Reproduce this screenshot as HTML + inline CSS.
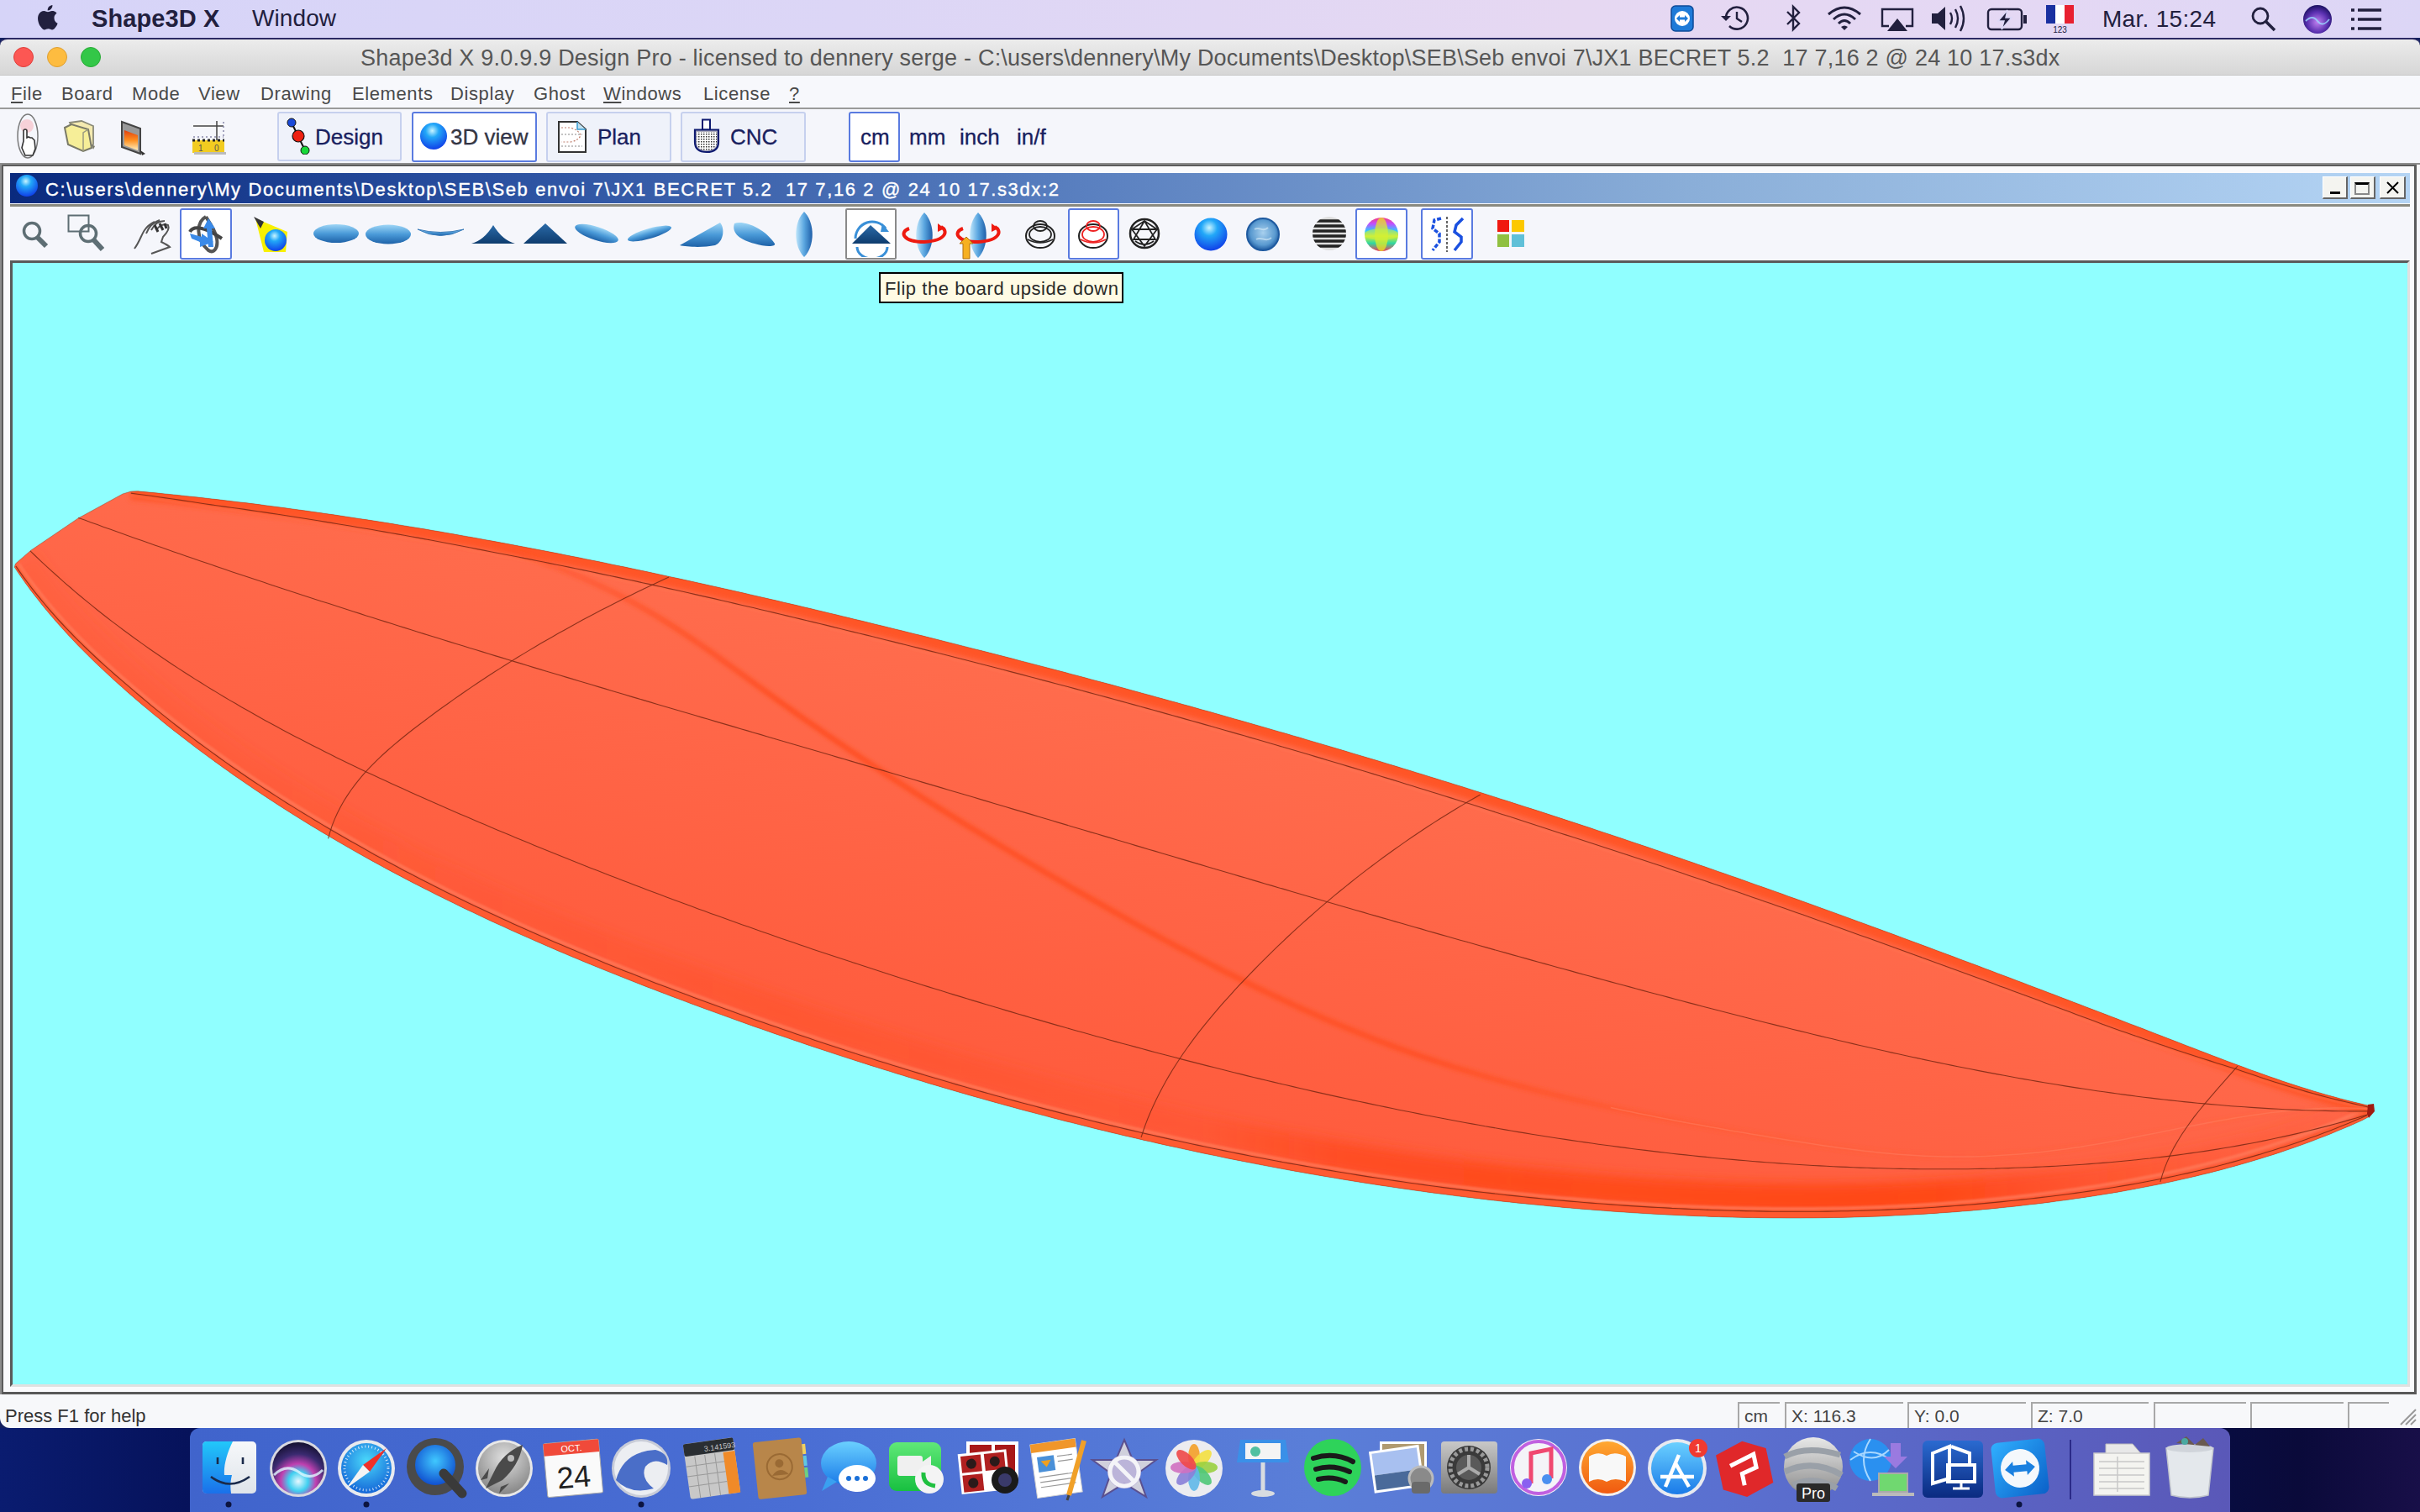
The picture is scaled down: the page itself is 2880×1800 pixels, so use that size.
<!DOCTYPE html>
<html><head><meta charset="utf-8">
<style>
*{margin:0;padding:0;box-sizing:border-box}
html,body{width:2880px;height:1800px;overflow:hidden;background:#132060;font-family:"Liberation Sans",sans-serif}
.a{position:absolute}
#macbar{left:0;top:0;width:2880px;height:45px;background:linear-gradient(90deg,#d6d4f8 0%,#dcd6f6 35%,#e6d8f2 65%,#e4d8f4 85%,#dcd6f6 100%);}
#winbar{left:0;top:45px;width:2880px;height:44px;background:linear-gradient(#ececec,#d6d6d6);border-top:2px solid #2c2a64;border-radius:9px 9px 0 0}
#appmenu{left:0;top:89px;width:2880px;height:41px;background:#f7f8fc;border-top:1px solid #c8c8c8;border-bottom:2px solid #9a9a9a}
#tb1{left:0;top:130px;width:2880px;height:66px;background:#f5f6fb}
#mdi{left:0;top:194px;width:2880px;height:1466px;background:#f8f8fb;border-left:2px solid #8c8c8c;border-top:2px solid #8c8c8c}
#mdiinner{left:2px;top:196px;width:2874px;height:1464px;border-left:2px solid #5c5c5c;border-top:2px solid #5c5c5c;border-right:3px solid #5c5c5c;border-bottom:3px solid #585858;background:#fafafc}
#mdititle{left:12px;top:206px;width:2856px;height:36px;background:linear-gradient(90deg,#0a2a7e 0%,#2a50a0 20%,#5a80c0 45%,#8aaed8 70%,#b4d4f4 100%)}
#mdiline{left:12px;top:243px;width:2856px;height:3px;background:#8a8a80}
#tb2{left:12px;top:246px;width:2856px;height:64px;background:#f5f6fb}
#canvas{left:12px;top:310px;width:2856px;height:1341px;border:3px solid #5a5a5a;border-right-color:#e0e0e0;border-bottom-color:#e0e0e0;background:#90ffff}
#status{left:0;top:1660px;width:2880px;height:40px;background:#f7f8fa;border-radius:0 0 0 12px}
#desk{left:0;top:1700px;width:2880px;height:100px;background:linear-gradient(90deg,#0a1c70 0%,#06125a 8%,#0a1a5a 40%,#080c40 92%,#0a0a3a 95%,#180f48 100%)}
#dock{left:226px;top:1700px;width:2428px;height:100px;background:linear-gradient(90deg,#4064cc,#4a6ed4 30%,#5a7ed8 55%,#5a70d0 75%,#5a58b8);border-radius:12px 12px 0 0}
.mt{font-size:27px;color:#262050;top:6px}
.menu{font-size:22px;color:#4a4a4a;top:98px;letter-spacing:0.6px}
.btn{border:2px solid #c6d0ee;background:#eff2fa;border-radius:3px}
.btnsel{border:2px solid #5a7be0;background:#ffffff;border-radius:3px}
.tt{font-size:27px;color:#18205e;-webkit-text-stroke:0.3px #18205e}
.sp{top:1669px;height:31px;border:2px solid #c8c8c8;border-bottom:none;border-right:none;font-size:21px;color:#333;padding:5px 0 0 8px}
</style></head><body>
<div id="desk" class="a"></div>
<div id="dock" class="a"></div>
<div id="macbar" class="a"></div>
<div id="winbar" class="a"></div>
<div id="appmenu" class="a"></div>
<div id="tb1" class="a"></div>
<div id="mdi" class="a"></div>
<div id="mdiinner" class="a"></div>
<div id="mdititle" class="a"></div>
<div id="mdiline" class="a"></div>
<div id="tb2" class="a"></div>
<div id="canvas" class="a"></div>
<svg width="2850" height="1335" viewBox="15 313 2850 1335" style="position:absolute;left:15px;top:313px">
<defs><clipPath id="bc"><path d="M156.0,585.0 L164.1,584.8 L172.1,585.6 L180.1,586.3 L188.1,587.1 L196.1,587.9 L204.1,588.7 L212.1,589.5 L220.1,590.4 L228.1,591.2 L236.1,592.1 L244.1,593.0 L252.1,593.9 L260.1,594.8 L268.1,595.8 L276.1,596.7 L284.1,597.7 L292.0,598.6 L300.0,599.6 L308.0,600.6 L316.0,601.7 L324.0,602.7 L331.9,603.7 L339.9,604.8 L347.9,605.9 L355.8,607.0 L363.8,608.1 L371.8,609.2 L379.7,610.3 L387.7,611.5 L395.6,612.6 L403.6,613.8 L411.5,615.0 L419.5,616.2 L427.4,617.4 L435.4,618.6 L443.3,619.8 L451.3,621.1 L459.2,622.3 L467.1,623.6 L475.1,624.9 L483.0,626.2 L490.9,627.5 L498.9,628.8 L506.8,630.1 L514.7,631.5 L522.7,632.8 L530.6,634.2 L538.5,635.6 L546.4,637.0 L554.3,638.4 L562.2,639.8 L570.2,641.2 L578.1,642.7 L586.0,644.1 L593.9,645.6 L601.8,647.0 L609.7,648.5 L617.6,650.0 L625.5,651.5 L633.4,653.0 L641.3,654.5 L649.2,656.0 L657.1,657.6 L665.0,659.1 L672.9,660.7 L680.8,662.3 L688.7,663.8 L696.5,665.4 L704.4,667.0 L712.3,668.6 L720.2,670.2 L728.1,671.9 L735.9,673.5 L743.8,675.1 L751.7,676.8 L759.6,678.4 L767.4,680.1 L775.3,681.8 L783.2,683.5 L791.0,685.2 L798.9,686.9 L806.8,688.6 L814.6,690.3 L822.5,692.0 L830.3,693.8 L838.2,695.5 L846.0,697.3 L853.9,699.0 L861.7,700.8 L869.6,702.5 L877.4,704.3 L885.3,706.1 L893.1,707.9 L901.0,709.7 L908.8,711.5 L916.6,713.3 L924.5,715.1 L932.3,717.0 L940.2,718.8 L948.0,720.6 L955.8,722.5 L963.7,724.3 L971.5,726.2 L979.3,728.1 L987.1,729.9 L995.0,731.8 L1002.8,733.7 L1010.6,735.6 L1018.4,737.5 L1026.2,739.3 L1034.1,741.3 L1041.9,743.2 L1049.7,745.1 L1057.5,747.0 L1065.3,748.9 L1073.1,750.8 L1080.9,752.8 L1088.7,754.7 L1096.6,756.6 L1104.4,758.6 L1112.2,760.5 L1120.0,762.5 L1127.8,764.5 L1135.6,766.4 L1143.4,768.4 L1151.2,770.4 L1159.0,772.4 L1166.7,774.3 L1174.5,776.3 L1182.3,778.3 L1190.1,780.3 L1197.9,782.3 L1205.7,784.3 L1213.5,786.4 L1221.3,788.4 L1229.0,790.4 L1236.8,792.4 L1244.6,794.5 L1252.4,796.5 L1260.2,798.6 L1267.9,800.6 L1275.7,802.7 L1283.5,804.7 L1291.2,806.8 L1299.0,808.9 L1306.8,811.0 L1314.5,813.0 L1322.3,815.1 L1330.1,817.2 L1337.8,819.3 L1345.6,821.4 L1353.3,823.6 L1361.1,825.7 L1368.9,827.8 L1376.6,829.9 L1384.4,832.1 L1392.1,834.2 L1399.9,836.3 L1407.6,838.5 L1415.4,840.6 L1423.1,842.8 L1430.8,845.0 L1438.6,847.1 L1446.3,849.3 L1454.1,851.5 L1461.8,853.7 L1469.5,855.9 L1477.3,858.1 L1485.0,860.3 L1492.7,862.5 L1500.5,864.7 L1508.2,866.9 L1515.9,869.2 L1523.6,871.4 L1531.3,873.6 L1539.1,875.9 L1546.8,878.1 L1554.5,880.4 L1562.2,882.7 L1569.9,884.9 L1577.6,887.2 L1585.4,889.5 L1593.1,891.8 L1600.8,894.1 L1608.5,896.4 L1616.2,898.7 L1623.9,901.0 L1631.6,903.3 L1639.3,905.6 L1647.0,907.9 L1654.7,910.3 L1662.4,912.6 L1670.1,915.0 L1677.8,917.3 L1685.4,919.7 L1693.1,922.0 L1700.8,924.4 L1708.5,926.8 L1716.2,929.2 L1723.9,931.5 L1731.5,933.9 L1739.2,936.3 L1746.9,938.7 L1754.6,941.2 L1762.2,943.6 L1769.9,946.0 L1777.6,948.4 L1785.2,950.9 L1792.9,953.3 L1800.6,955.8 L1808.2,958.2 L1815.9,960.7 L1823.5,963.1 L1831.2,965.6 L1838.9,968.1 L1846.5,970.6 L1854.2,973.1 L1861.8,975.6 L1869.4,978.1 L1877.1,980.6 L1884.7,983.1 L1892.4,985.6 L1900.0,988.2 L1907.6,990.7 L1915.3,993.2 L1922.9,995.8 L1930.5,998.3 L1938.2,1000.9 L1945.8,1003.5 L1953.4,1006.0 L1961.0,1008.6 L1968.6,1011.2 L1976.3,1013.8 L1983.9,1016.4 L1991.5,1019.0 L1999.1,1021.6 L2006.7,1024.2 L2014.3,1026.8 L2021.9,1029.5 L2029.5,1032.1 L2037.1,1034.7 L2044.7,1037.4 L2052.3,1040.0 L2059.9,1042.7 L2067.5,1045.3 L2075.1,1048.0 L2082.6,1050.7 L2090.2,1053.4 L2097.8,1056.1 L2105.4,1058.7 L2113.0,1061.4 L2120.5,1064.1 L2128.1,1066.9 L2135.7,1069.6 L2143.3,1072.3 L2150.8,1075.0 L2158.4,1077.7 L2166.0,1080.5 L2173.5,1083.2 L2181.1,1085.9 L2188.7,1088.7 L2196.2,1091.4 L2203.8,1094.2 L2211.3,1097.0 L2218.9,1099.7 L2226.4,1102.5 L2234.0,1105.3 L2241.5,1108.0 L2249.1,1110.8 L2256.6,1113.6 L2264.2,1116.4 L2271.7,1119.2 L2279.3,1122.0 L2286.8,1124.8 L2294.3,1127.6 L2301.9,1130.4 L2309.4,1133.2 L2316.9,1136.0 L2324.5,1138.8 L2332.0,1141.7 L2339.5,1144.5 L2347.1,1147.3 L2354.6,1150.1 L2362.1,1153.0 L2369.7,1155.8 L2377.2,1158.7 L2384.7,1161.5 L2392.2,1164.3 L2399.8,1167.2 L2407.3,1170.0 L2414.8,1172.9 L2422.3,1175.8 L2429.8,1178.6 L2437.4,1181.5 L2444.9,1184.3 L2452.4,1187.2 L2459.9,1190.1 L2467.4,1192.9 L2474.9,1195.8 L2482.4,1198.7 L2489.9,1201.6 L2497.5,1204.4 L2505.0,1207.3 L2512.5,1210.2 L2520.0,1213.1 L2527.5,1216.0 L2535.0,1218.9 L2542.5,1221.7 L2550.0,1224.6 L2557.5,1227.5 L2565.0,1230.4 L2572.5,1233.3 L2580.0,1236.2 L2587.5,1239.1 L2595.0,1242.0 L2602.5,1244.9 L2610.1,1247.8 L2617.6,1250.7 L2625.1,1253.6 L2632.6,1256.5 L2640.1,1259.3 L2647.6,1262.2 L2655.1,1265.0 L2662.6,1267.8 L2670.2,1270.6 L2677.7,1273.4 L2685.3,1276.1 L2692.8,1278.8 L2700.4,1281.5 L2708.0,1284.1 L2715.5,1286.7 L2723.1,1289.3 L2730.8,1291.8 L2738.4,1294.2 L2746.0,1296.6 L2753.7,1299.0 L2761.4,1301.2 L2769.1,1303.5 L2776.8,1305.6 L2784.5,1307.7 L2792.2,1309.7 L2800.0,1311.7 L2807.8,1313.6 L2815.6,1315.4 L2823.5,1317.1 L2825.0,1323.0 L2818.0,1330.0 L2811.0,1333.8 L2803.6,1337.1 L2796.1,1340.4 L2788.7,1343.5 L2781.2,1346.6 L2773.8,1349.7 L2766.3,1352.7 L2758.7,1355.6 L2751.2,1358.5 L2743.7,1361.3 L2736.1,1364.0 L2728.5,1366.7 L2720.9,1369.3 L2713.3,1371.9 L2705.7,1374.4 L2698.0,1376.8 L2690.3,1379.2 L2682.7,1381.5 L2675.0,1383.8 L2667.3,1386.0 L2659.6,1388.2 L2651.8,1390.3 L2644.1,1392.4 L2636.3,1394.4 L2628.6,1396.4 L2620.8,1398.3 L2613.0,1400.2 L2605.2,1402.1 L2597.4,1403.8 L2589.5,1405.6 L2581.7,1407.3 L2573.8,1408.9 L2566.0,1410.5 L2558.1,1412.1 L2550.3,1413.6 L2542.4,1415.1 L2534.5,1416.6 L2526.6,1418.0 L2518.7,1419.4 L2510.8,1420.7 L2502.8,1422.0 L2494.9,1423.3 L2487.0,1424.5 L2479.0,1425.7 L2471.1,1426.8 L2463.1,1428.0 L2455.2,1429.1 L2447.2,1430.1 L2439.2,1431.2 L2431.3,1432.2 L2423.3,1433.2 L2415.3,1434.1 L2407.3,1435.0 L2399.4,1435.9 L2391.4,1436.8 L2383.4,1437.6 L2375.4,1438.4 L2367.4,1439.2 L2359.4,1439.9 L2351.3,1440.7 L2343.3,1441.4 L2335.3,1442.0 L2327.3,1442.7 L2319.3,1443.3 L2311.3,1443.8 L2303.2,1444.4 L2295.2,1444.9 L2287.2,1445.4 L2279.1,1445.9 L2271.1,1446.3 L2263.1,1446.8 L2255.0,1447.1 L2247.0,1447.5 L2238.9,1447.9 L2230.9,1448.2 L2222.8,1448.5 L2214.8,1448.7 L2206.7,1449.0 L2198.7,1449.2 L2190.6,1449.4 L2182.6,1449.5 L2174.5,1449.7 L2166.4,1449.8 L2158.4,1449.9 L2150.3,1449.9 L2142.3,1450.0 L2134.2,1450.0 L2126.1,1450.0 L2118.1,1449.9 L2110.0,1449.9 L2101.9,1449.8 L2093.9,1449.7 L2085.8,1449.6 L2077.8,1449.4 L2069.7,1449.3 L2061.6,1449.1 L2053.6,1448.9 L2045.5,1448.6 L2037.4,1448.4 L2029.4,1448.1 L2021.3,1447.8 L2013.3,1447.4 L2005.2,1447.1 L1997.2,1446.7 L1989.1,1446.3 L1981.0,1445.9 L1973.0,1445.5 L1964.9,1445.1 L1956.9,1444.6 L1948.8,1444.1 L1940.8,1443.6 L1932.8,1443.0 L1924.7,1442.5 L1916.7,1441.9 L1908.6,1441.3 L1900.6,1440.7 L1892.6,1440.1 L1884.5,1439.4 L1876.5,1438.8 L1868.5,1438.1 L1860.5,1437.4 L1852.4,1436.6 L1844.4,1435.9 L1836.4,1435.1 L1828.4,1434.3 L1820.4,1433.5 L1812.4,1432.7 L1804.4,1431.9 L1796.4,1431.0 L1788.4,1430.2 L1780.4,1429.3 L1772.4,1428.4 L1764.4,1427.4 L1756.5,1426.5 L1748.5,1425.5 L1740.5,1424.6 L1732.5,1423.6 L1724.6,1422.5 L1716.6,1421.5 L1708.6,1420.5 L1700.7,1419.4 L1692.7,1418.3 L1684.8,1417.2 L1676.8,1416.1 L1668.9,1414.9 L1660.9,1413.8 L1653.0,1412.6 L1645.0,1411.4 L1637.1,1410.2 L1629.2,1409.0 L1621.2,1407.8 L1613.3,1406.5 L1605.4,1405.2 L1597.5,1403.9 L1589.6,1402.6 L1581.7,1401.3 L1573.8,1399.9 L1565.8,1398.6 L1557.9,1397.2 L1550.0,1395.8 L1542.2,1394.4 L1534.3,1393.0 L1526.4,1391.5 L1518.5,1390.1 L1510.6,1388.6 L1502.7,1387.1 L1494.9,1385.6 L1487.0,1384.0 L1479.1,1382.5 L1471.2,1380.9 L1463.4,1379.4 L1455.5,1377.8 L1447.7,1376.1 L1439.8,1374.5 L1432.0,1372.9 L1424.1,1371.2 L1416.3,1369.5 L1408.4,1367.8 L1400.6,1366.1 L1392.8,1364.4 L1384.9,1362.7 L1377.1,1360.9 L1369.3,1359.1 L1361.5,1357.4 L1353.7,1355.5 L1345.9,1353.7 L1338.0,1351.9 L1330.2,1350.0 L1322.4,1348.2 L1314.6,1346.3 L1306.8,1344.4 L1299.1,1342.5 L1291.3,1340.5 L1283.5,1338.6 L1275.7,1336.6 L1267.9,1334.7 L1260.2,1332.7 L1252.4,1330.7 L1244.6,1328.6 L1236.9,1326.6 L1229.1,1324.5 L1221.3,1322.5 L1213.6,1320.4 L1205.8,1318.3 L1198.1,1316.2 L1190.3,1314.1 L1182.6,1311.9 L1174.9,1309.8 L1167.1,1307.6 L1159.4,1305.4 L1151.7,1303.2 L1144.0,1301.0 L1136.2,1298.7 L1128.5,1296.5 L1120.8,1294.2 L1113.1,1291.9 L1105.4,1289.7 L1097.7,1287.3 L1090.0,1285.0 L1082.3,1282.7 L1074.6,1280.3 L1066.9,1278.0 L1059.3,1275.6 L1051.6,1273.2 L1043.9,1270.8 L1036.2,1268.4 L1028.6,1265.9 L1020.9,1263.5 L1013.2,1261.0 L1005.6,1258.6 L997.9,1256.1 L990.3,1253.6 L982.6,1251.0 L975.0,1248.5 L967.3,1246.0 L959.7,1243.4 L952.1,1240.8 L944.4,1238.2 L936.8,1235.6 L929.2,1233.0 L921.6,1230.4 L914.0,1227.7 L906.4,1225.1 L898.7,1222.4 L891.1,1219.7 L883.5,1217.0 L875.9,1214.3 L868.4,1211.6 L860.8,1208.8 L853.2,1206.1 L845.6,1203.3 L838.0,1200.6 L830.5,1197.8 L822.9,1195.0 L815.3,1192.1 L807.8,1189.3 L800.2,1186.5 L792.7,1183.6 L785.1,1180.7 L777.6,1177.8 L770.0,1174.9 L762.5,1172.0 L755.0,1169.0 L747.5,1166.1 L740.0,1163.1 L732.5,1160.1 L725.0,1157.1 L717.5,1154.1 L710.0,1151.0 L702.6,1148.0 L695.1,1144.9 L687.6,1141.8 L680.2,1138.7 L672.8,1135.6 L665.3,1132.4 L657.9,1129.2 L650.5,1126.0 L643.1,1122.8 L635.7,1119.6 L628.4,1116.3 L621.0,1113.1 L613.6,1109.8 L606.3,1106.5 L599.0,1103.1 L591.6,1099.8 L584.3,1096.4 L577.0,1093.0 L569.8,1089.6 L562.5,1086.1 L555.2,1082.7 L548.0,1079.2 L540.7,1075.6 L533.5,1072.1 L526.3,1068.5 L519.1,1065.0 L511.9,1061.3 L504.8,1057.7 L497.6,1054.1 L490.5,1050.4 L483.4,1046.7 L476.3,1042.9 L469.2,1039.2 L462.1,1035.4 L455.0,1031.6 L448.0,1027.7 L441.0,1023.9 L434.0,1020.0 L427.0,1016.1 L420.0,1012.1 L413.0,1008.1 L406.1,1004.1 L399.2,1000.1 L392.3,996.0 L385.4,991.9 L378.5,987.8 L371.7,983.7 L364.8,979.5 L358.0,975.3 L351.2,971.1 L344.4,966.8 L337.7,962.5 L331.0,958.2 L324.2,953.8 L317.6,949.4 L310.9,945.0 L304.2,940.6 L297.6,936.1 L291.0,931.6 L284.4,927.0 L277.8,922.5 L271.3,917.8 L264.8,913.2 L258.3,908.5 L251.8,903.8 L245.4,899.1 L238.9,894.3 L232.5,889.5 L226.1,884.6 L219.8,879.7 L213.4,874.8 L207.1,869.9 L200.8,864.9 L194.6,859.9 L188.4,854.8 L182.1,849.7 L176.0,844.6 L169.8,839.4 L163.7,834.2 L157.6,828.9 L151.5,823.7 L145.5,818.3 L139.5,813.0 L133.5,807.6 L127.6,802.1 L121.7,796.6 L115.8,791.1 L110.1,785.5 L104.3,779.8 L98.6,774.1 L93.0,768.4 L87.4,762.6 L81.9,756.7 L76.5,750.8 L71.1,744.8 L65.8,738.8 L60.6,732.7 L55.4,726.6 L50.4,720.4 L45.4,714.1 L40.4,707.8 L35.6,701.4 L30.9,694.9 L26.2,688.3 L21.6,681.7 L17.2,675.1 L18.5,671.0 L37.0,655.0 L93.0,617.0 L146.0,588.0 Z"/></clipPath>
<linearGradient id="bg1" gradientUnits="userSpaceOnUse" x1="1300" y1="700" x2="1150" y2="1300"><stop offset="0" stop-color="#ff7050"/><stop offset="0.5" stop-color="#ff6547"/><stop offset="1" stop-color="#ff5b3c"/></linearGradient>
<filter id="bl12" x="-10%" y="-10%" width="120%" height="120%"><feGaussianBlur stdDeviation="12"/></filter>
<filter id="bl4" x="-10%" y="-10%" width="120%" height="120%"><feGaussianBlur stdDeviation="4"/></filter>
<filter id="bl2" x="-10%" y="-10%" width="120%" height="120%"><feGaussianBlur stdDeviation="2"/></filter><filter id="bl8" x="-10%" y="-10%" width="120%" height="120%"><feGaussianBlur stdDeviation="7"/></filter><filter id="bl3" x="-10%" y="-10%" width="120%" height="120%"><feGaussianBlur stdDeviation="3"/></filter><filter id="bl15" x="-10%" y="-10%" width="120%" height="120%"><feGaussianBlur stdDeviation="1.3"/></filter>
<linearGradient id="gbot" gradientUnits="userSpaceOnUse" x1="300" y1="0" x2="2800" y2="0"><stop offset="0" stop-color="#ff5028" stop-opacity="0.2"/><stop offset="0.25" stop-color="#ff5028" stop-opacity="0.45"/><stop offset="0.45" stop-color="#ff5028" stop-opacity="0.35"/><stop offset="0.52" stop-color="#ff4a1c" stop-opacity="0.85"/><stop offset="0.8" stop-color="#ff4818" stop-opacity="1"/><stop offset="0.92" stop-color="#ff5028" stop-opacity="0.4"/><stop offset="1" stop-color="#ff5028" stop-opacity="0.1"/></linearGradient>
<linearGradient id="gghost" gradientUnits="userSpaceOnUse" x1="600" y1="0" x2="2800" y2="0"><stop offset="0" stop-color="#ff4e20" stop-opacity="0.3"/><stop offset="0.15" stop-color="#ff4e20" stop-opacity="0.85"/><stop offset="0.5" stop-color="#ff4e20" stop-opacity="0.8"/><stop offset="0.7" stop-color="#ff5a30" stop-opacity="0.3"/><stop offset="1" stop-color="#ff5a30" stop-opacity="0"/></linearGradient>
</defs>
<path d="M156.0,585.0 L164.1,584.8 L172.1,585.6 L180.1,586.3 L188.1,587.1 L196.1,587.9 L204.1,588.7 L212.1,589.5 L220.1,590.4 L228.1,591.2 L236.1,592.1 L244.1,593.0 L252.1,593.9 L260.1,594.8 L268.1,595.8 L276.1,596.7 L284.1,597.7 L292.0,598.6 L300.0,599.6 L308.0,600.6 L316.0,601.7 L324.0,602.7 L331.9,603.7 L339.9,604.8 L347.9,605.9 L355.8,607.0 L363.8,608.1 L371.8,609.2 L379.7,610.3 L387.7,611.5 L395.6,612.6 L403.6,613.8 L411.5,615.0 L419.5,616.2 L427.4,617.4 L435.4,618.6 L443.3,619.8 L451.3,621.1 L459.2,622.3 L467.1,623.6 L475.1,624.9 L483.0,626.2 L490.9,627.5 L498.9,628.8 L506.8,630.1 L514.7,631.5 L522.7,632.8 L530.6,634.2 L538.5,635.6 L546.4,637.0 L554.3,638.4 L562.2,639.8 L570.2,641.2 L578.1,642.7 L586.0,644.1 L593.9,645.6 L601.8,647.0 L609.7,648.5 L617.6,650.0 L625.5,651.5 L633.4,653.0 L641.3,654.5 L649.2,656.0 L657.1,657.6 L665.0,659.1 L672.9,660.7 L680.8,662.3 L688.7,663.8 L696.5,665.4 L704.4,667.0 L712.3,668.6 L720.2,670.2 L728.1,671.9 L735.9,673.5 L743.8,675.1 L751.7,676.8 L759.6,678.4 L767.4,680.1 L775.3,681.8 L783.2,683.5 L791.0,685.2 L798.9,686.9 L806.8,688.6 L814.6,690.3 L822.5,692.0 L830.3,693.8 L838.2,695.5 L846.0,697.3 L853.9,699.0 L861.7,700.8 L869.6,702.5 L877.4,704.3 L885.3,706.1 L893.1,707.9 L901.0,709.7 L908.8,711.5 L916.6,713.3 L924.5,715.1 L932.3,717.0 L940.2,718.8 L948.0,720.6 L955.8,722.5 L963.7,724.3 L971.5,726.2 L979.3,728.1 L987.1,729.9 L995.0,731.8 L1002.8,733.7 L1010.6,735.6 L1018.4,737.5 L1026.2,739.3 L1034.1,741.3 L1041.9,743.2 L1049.7,745.1 L1057.5,747.0 L1065.3,748.9 L1073.1,750.8 L1080.9,752.8 L1088.7,754.7 L1096.6,756.6 L1104.4,758.6 L1112.2,760.5 L1120.0,762.5 L1127.8,764.5 L1135.6,766.4 L1143.4,768.4 L1151.2,770.4 L1159.0,772.4 L1166.7,774.3 L1174.5,776.3 L1182.3,778.3 L1190.1,780.3 L1197.9,782.3 L1205.7,784.3 L1213.5,786.4 L1221.3,788.4 L1229.0,790.4 L1236.8,792.4 L1244.6,794.5 L1252.4,796.5 L1260.2,798.6 L1267.9,800.6 L1275.7,802.7 L1283.5,804.7 L1291.2,806.8 L1299.0,808.9 L1306.8,811.0 L1314.5,813.0 L1322.3,815.1 L1330.1,817.2 L1337.8,819.3 L1345.6,821.4 L1353.3,823.6 L1361.1,825.7 L1368.9,827.8 L1376.6,829.9 L1384.4,832.1 L1392.1,834.2 L1399.9,836.3 L1407.6,838.5 L1415.4,840.6 L1423.1,842.8 L1430.8,845.0 L1438.6,847.1 L1446.3,849.3 L1454.1,851.5 L1461.8,853.7 L1469.5,855.9 L1477.3,858.1 L1485.0,860.3 L1492.7,862.5 L1500.5,864.7 L1508.2,866.9 L1515.9,869.2 L1523.6,871.4 L1531.3,873.6 L1539.1,875.9 L1546.8,878.1 L1554.5,880.4 L1562.2,882.7 L1569.9,884.9 L1577.6,887.2 L1585.4,889.5 L1593.1,891.8 L1600.8,894.1 L1608.5,896.4 L1616.2,898.7 L1623.9,901.0 L1631.6,903.3 L1639.3,905.6 L1647.0,907.9 L1654.7,910.3 L1662.4,912.6 L1670.1,915.0 L1677.8,917.3 L1685.4,919.7 L1693.1,922.0 L1700.8,924.4 L1708.5,926.8 L1716.2,929.2 L1723.9,931.5 L1731.5,933.9 L1739.2,936.3 L1746.9,938.7 L1754.6,941.2 L1762.2,943.6 L1769.9,946.0 L1777.6,948.4 L1785.2,950.9 L1792.9,953.3 L1800.6,955.8 L1808.2,958.2 L1815.9,960.7 L1823.5,963.1 L1831.2,965.6 L1838.9,968.1 L1846.5,970.6 L1854.2,973.1 L1861.8,975.6 L1869.4,978.1 L1877.1,980.6 L1884.7,983.1 L1892.4,985.6 L1900.0,988.2 L1907.6,990.7 L1915.3,993.2 L1922.9,995.8 L1930.5,998.3 L1938.2,1000.9 L1945.8,1003.5 L1953.4,1006.0 L1961.0,1008.6 L1968.6,1011.2 L1976.3,1013.8 L1983.9,1016.4 L1991.5,1019.0 L1999.1,1021.6 L2006.7,1024.2 L2014.3,1026.8 L2021.9,1029.5 L2029.5,1032.1 L2037.1,1034.7 L2044.7,1037.4 L2052.3,1040.0 L2059.9,1042.7 L2067.5,1045.3 L2075.1,1048.0 L2082.6,1050.7 L2090.2,1053.4 L2097.8,1056.1 L2105.4,1058.7 L2113.0,1061.4 L2120.5,1064.1 L2128.1,1066.9 L2135.7,1069.6 L2143.3,1072.3 L2150.8,1075.0 L2158.4,1077.7 L2166.0,1080.5 L2173.5,1083.2 L2181.1,1085.9 L2188.7,1088.7 L2196.2,1091.4 L2203.8,1094.2 L2211.3,1097.0 L2218.9,1099.7 L2226.4,1102.5 L2234.0,1105.3 L2241.5,1108.0 L2249.1,1110.8 L2256.6,1113.6 L2264.2,1116.4 L2271.7,1119.2 L2279.3,1122.0 L2286.8,1124.8 L2294.3,1127.6 L2301.9,1130.4 L2309.4,1133.2 L2316.9,1136.0 L2324.5,1138.8 L2332.0,1141.7 L2339.5,1144.5 L2347.1,1147.3 L2354.6,1150.1 L2362.1,1153.0 L2369.7,1155.8 L2377.2,1158.7 L2384.7,1161.5 L2392.2,1164.3 L2399.8,1167.2 L2407.3,1170.0 L2414.8,1172.9 L2422.3,1175.8 L2429.8,1178.6 L2437.4,1181.5 L2444.9,1184.3 L2452.4,1187.2 L2459.9,1190.1 L2467.4,1192.9 L2474.9,1195.8 L2482.4,1198.7 L2489.9,1201.6 L2497.5,1204.4 L2505.0,1207.3 L2512.5,1210.2 L2520.0,1213.1 L2527.5,1216.0 L2535.0,1218.9 L2542.5,1221.7 L2550.0,1224.6 L2557.5,1227.5 L2565.0,1230.4 L2572.5,1233.3 L2580.0,1236.2 L2587.5,1239.1 L2595.0,1242.0 L2602.5,1244.9 L2610.1,1247.8 L2617.6,1250.7 L2625.1,1253.6 L2632.6,1256.5 L2640.1,1259.3 L2647.6,1262.2 L2655.1,1265.0 L2662.6,1267.8 L2670.2,1270.6 L2677.7,1273.4 L2685.3,1276.1 L2692.8,1278.8 L2700.4,1281.5 L2708.0,1284.1 L2715.5,1286.7 L2723.1,1289.3 L2730.8,1291.8 L2738.4,1294.2 L2746.0,1296.6 L2753.7,1299.0 L2761.4,1301.2 L2769.1,1303.5 L2776.8,1305.6 L2784.5,1307.7 L2792.2,1309.7 L2800.0,1311.7 L2807.8,1313.6 L2815.6,1315.4 L2823.5,1317.1 L2825.0,1323.0 L2818.0,1330.0 L2811.0,1333.8 L2803.6,1337.1 L2796.1,1340.4 L2788.7,1343.5 L2781.2,1346.6 L2773.8,1349.7 L2766.3,1352.7 L2758.7,1355.6 L2751.2,1358.5 L2743.7,1361.3 L2736.1,1364.0 L2728.5,1366.7 L2720.9,1369.3 L2713.3,1371.9 L2705.7,1374.4 L2698.0,1376.8 L2690.3,1379.2 L2682.7,1381.5 L2675.0,1383.8 L2667.3,1386.0 L2659.6,1388.2 L2651.8,1390.3 L2644.1,1392.4 L2636.3,1394.4 L2628.6,1396.4 L2620.8,1398.3 L2613.0,1400.2 L2605.2,1402.1 L2597.4,1403.8 L2589.5,1405.6 L2581.7,1407.3 L2573.8,1408.9 L2566.0,1410.5 L2558.1,1412.1 L2550.3,1413.6 L2542.4,1415.1 L2534.5,1416.6 L2526.6,1418.0 L2518.7,1419.4 L2510.8,1420.7 L2502.8,1422.0 L2494.9,1423.3 L2487.0,1424.5 L2479.0,1425.7 L2471.1,1426.8 L2463.1,1428.0 L2455.2,1429.1 L2447.2,1430.1 L2439.2,1431.2 L2431.3,1432.2 L2423.3,1433.2 L2415.3,1434.1 L2407.3,1435.0 L2399.4,1435.9 L2391.4,1436.8 L2383.4,1437.6 L2375.4,1438.4 L2367.4,1439.2 L2359.4,1439.9 L2351.3,1440.7 L2343.3,1441.4 L2335.3,1442.0 L2327.3,1442.7 L2319.3,1443.3 L2311.3,1443.8 L2303.2,1444.4 L2295.2,1444.9 L2287.2,1445.4 L2279.1,1445.9 L2271.1,1446.3 L2263.1,1446.8 L2255.0,1447.1 L2247.0,1447.5 L2238.9,1447.9 L2230.9,1448.2 L2222.8,1448.5 L2214.8,1448.7 L2206.7,1449.0 L2198.7,1449.2 L2190.6,1449.4 L2182.6,1449.5 L2174.5,1449.7 L2166.4,1449.8 L2158.4,1449.9 L2150.3,1449.9 L2142.3,1450.0 L2134.2,1450.0 L2126.1,1450.0 L2118.1,1449.9 L2110.0,1449.9 L2101.9,1449.8 L2093.9,1449.7 L2085.8,1449.6 L2077.8,1449.4 L2069.7,1449.3 L2061.6,1449.1 L2053.6,1448.9 L2045.5,1448.6 L2037.4,1448.4 L2029.4,1448.1 L2021.3,1447.8 L2013.3,1447.4 L2005.2,1447.1 L1997.2,1446.7 L1989.1,1446.3 L1981.0,1445.9 L1973.0,1445.5 L1964.9,1445.1 L1956.9,1444.6 L1948.8,1444.1 L1940.8,1443.6 L1932.8,1443.0 L1924.7,1442.5 L1916.7,1441.9 L1908.6,1441.3 L1900.6,1440.7 L1892.6,1440.1 L1884.5,1439.4 L1876.5,1438.8 L1868.5,1438.1 L1860.5,1437.4 L1852.4,1436.6 L1844.4,1435.9 L1836.4,1435.1 L1828.4,1434.3 L1820.4,1433.5 L1812.4,1432.7 L1804.4,1431.9 L1796.4,1431.0 L1788.4,1430.2 L1780.4,1429.3 L1772.4,1428.4 L1764.4,1427.4 L1756.5,1426.5 L1748.5,1425.5 L1740.5,1424.6 L1732.5,1423.6 L1724.6,1422.5 L1716.6,1421.5 L1708.6,1420.5 L1700.7,1419.4 L1692.7,1418.3 L1684.8,1417.2 L1676.8,1416.1 L1668.9,1414.9 L1660.9,1413.8 L1653.0,1412.6 L1645.0,1411.4 L1637.1,1410.2 L1629.2,1409.0 L1621.2,1407.8 L1613.3,1406.5 L1605.4,1405.2 L1597.5,1403.9 L1589.6,1402.6 L1581.7,1401.3 L1573.8,1399.9 L1565.8,1398.6 L1557.9,1397.2 L1550.0,1395.8 L1542.2,1394.4 L1534.3,1393.0 L1526.4,1391.5 L1518.5,1390.1 L1510.6,1388.6 L1502.7,1387.1 L1494.9,1385.6 L1487.0,1384.0 L1479.1,1382.5 L1471.2,1380.9 L1463.4,1379.4 L1455.5,1377.8 L1447.7,1376.1 L1439.8,1374.5 L1432.0,1372.9 L1424.1,1371.2 L1416.3,1369.5 L1408.4,1367.8 L1400.6,1366.1 L1392.8,1364.4 L1384.9,1362.7 L1377.1,1360.9 L1369.3,1359.1 L1361.5,1357.4 L1353.7,1355.5 L1345.9,1353.7 L1338.0,1351.9 L1330.2,1350.0 L1322.4,1348.2 L1314.6,1346.3 L1306.8,1344.4 L1299.1,1342.5 L1291.3,1340.5 L1283.5,1338.6 L1275.7,1336.6 L1267.9,1334.7 L1260.2,1332.7 L1252.4,1330.7 L1244.6,1328.6 L1236.9,1326.6 L1229.1,1324.5 L1221.3,1322.5 L1213.6,1320.4 L1205.8,1318.3 L1198.1,1316.2 L1190.3,1314.1 L1182.6,1311.9 L1174.9,1309.8 L1167.1,1307.6 L1159.4,1305.4 L1151.7,1303.2 L1144.0,1301.0 L1136.2,1298.7 L1128.5,1296.5 L1120.8,1294.2 L1113.1,1291.9 L1105.4,1289.7 L1097.7,1287.3 L1090.0,1285.0 L1082.3,1282.7 L1074.6,1280.3 L1066.9,1278.0 L1059.3,1275.6 L1051.6,1273.2 L1043.9,1270.8 L1036.2,1268.4 L1028.6,1265.9 L1020.9,1263.5 L1013.2,1261.0 L1005.6,1258.6 L997.9,1256.1 L990.3,1253.6 L982.6,1251.0 L975.0,1248.5 L967.3,1246.0 L959.7,1243.4 L952.1,1240.8 L944.4,1238.2 L936.8,1235.6 L929.2,1233.0 L921.6,1230.4 L914.0,1227.7 L906.4,1225.1 L898.7,1222.4 L891.1,1219.7 L883.5,1217.0 L875.9,1214.3 L868.4,1211.6 L860.8,1208.8 L853.2,1206.1 L845.6,1203.3 L838.0,1200.6 L830.5,1197.8 L822.9,1195.0 L815.3,1192.1 L807.8,1189.3 L800.2,1186.5 L792.7,1183.6 L785.1,1180.7 L777.6,1177.8 L770.0,1174.9 L762.5,1172.0 L755.0,1169.0 L747.5,1166.1 L740.0,1163.1 L732.5,1160.1 L725.0,1157.1 L717.5,1154.1 L710.0,1151.0 L702.6,1148.0 L695.1,1144.9 L687.6,1141.8 L680.2,1138.7 L672.8,1135.6 L665.3,1132.4 L657.9,1129.2 L650.5,1126.0 L643.1,1122.8 L635.7,1119.6 L628.4,1116.3 L621.0,1113.1 L613.6,1109.8 L606.3,1106.5 L599.0,1103.1 L591.6,1099.8 L584.3,1096.4 L577.0,1093.0 L569.8,1089.6 L562.5,1086.1 L555.2,1082.7 L548.0,1079.2 L540.7,1075.6 L533.5,1072.1 L526.3,1068.5 L519.1,1065.0 L511.9,1061.3 L504.8,1057.7 L497.6,1054.1 L490.5,1050.4 L483.4,1046.7 L476.3,1042.9 L469.2,1039.2 L462.1,1035.4 L455.0,1031.6 L448.0,1027.7 L441.0,1023.9 L434.0,1020.0 L427.0,1016.1 L420.0,1012.1 L413.0,1008.1 L406.1,1004.1 L399.2,1000.1 L392.3,996.0 L385.4,991.9 L378.5,987.8 L371.7,983.7 L364.8,979.5 L358.0,975.3 L351.2,971.1 L344.4,966.8 L337.7,962.5 L331.0,958.2 L324.2,953.8 L317.6,949.4 L310.9,945.0 L304.2,940.6 L297.6,936.1 L291.0,931.6 L284.4,927.0 L277.8,922.5 L271.3,917.8 L264.8,913.2 L258.3,908.5 L251.8,903.8 L245.4,899.1 L238.9,894.3 L232.5,889.5 L226.1,884.6 L219.8,879.7 L213.4,874.8 L207.1,869.9 L200.8,864.9 L194.6,859.9 L188.4,854.8 L182.1,849.7 L176.0,844.6 L169.8,839.4 L163.7,834.2 L157.6,828.9 L151.5,823.7 L145.5,818.3 L139.5,813.0 L133.5,807.6 L127.6,802.1 L121.7,796.6 L115.8,791.1 L110.1,785.5 L104.3,779.8 L98.6,774.1 L93.0,768.4 L87.4,762.6 L81.9,756.7 L76.5,750.8 L71.1,744.8 L65.8,738.8 L60.6,732.7 L55.4,726.6 L50.4,720.4 L45.4,714.1 L40.4,707.8 L35.6,701.4 L30.9,694.9 L26.2,688.3 L21.6,681.7 L17.2,675.1 L18.5,671.0 L37.0,655.0 L93.0,617.0 L146.0,588.0 Z" fill="url(#bg1)"/>
<g clip-path="url(#bc)">
<path d="M2814.2,1321.3 L2806.8,1324.5 L2799.4,1327.7 L2792.0,1330.7 L2784.5,1333.7 L2777.1,1336.6 L2769.6,1339.4 L2762.1,1342.2 L2754.6,1344.9 L2747.1,1347.6 L2739.6,1350.2 L2732.1,1352.7 L2724.5,1355.2 L2716.9,1357.6 L2709.3,1360.0 L2701.7,1362.3 L2694.1,1364.5 L2686.5,1366.7 L2678.9,1368.9 L2671.2,1370.9 L2663.5,1373.0 L2655.9,1374.9 L2648.2,1376.9 L2640.5,1378.7 L2632.7,1380.6 L2625.0,1382.3 L2617.3,1384.1 L2609.5,1385.7 L2601.8,1387.4 L2594.0,1388.9 L2586.2,1390.5 L2578.4,1392.0 L2570.6,1393.4 L2562.8,1394.8 L2555.0,1396.2 L2547.2,1397.5 L2539.3,1398.8 L2531.5,1400.1 L2523.6,1401.3 L2515.8,1402.4 L2507.9,1403.6 L2500.0,1404.7 L2492.2,1405.7 L2484.3,1406.8 L2476.4,1407.8 L2468.5,1408.7 L2460.6,1409.7 L2452.7,1410.6 L2444.7,1411.4 L2436.8,1412.3 L2428.9,1413.1 L2421.0,1413.9 L2413.0,1414.6 L2405.1,1415.3 L2397.2,1416.0 L2389.2,1416.8 L2381.3,1417.6 L2373.4,1418.3 L2365.4,1419.0 L2357.5,1419.6 L2349.6,1420.3 L2341.6,1420.9 L2333.7,1421.4 L2325.7,1422.0 L2317.7,1422.5 L2309.8,1423.0 L2301.8,1423.5 L2293.9,1423.9 L2285.9,1424.3 L2277.9,1424.7 L2270.0,1425.1 L2262.0,1425.4 L2254.0,1425.7 L2246.0,1426.0 L2238.0,1426.3 L2230.1,1426.5 L2222.1,1426.7 L2214.1,1426.9 L2206.1,1427.0 L2198.1,1427.2 L2190.1,1427.3 L2182.1,1427.4 L2174.2,1427.4 L2166.2,1427.4 L2158.2,1427.4 L2150.2,1427.4 L2142.2,1427.4 L2134.2,1427.3 L2126.2,1427.2 L2118.2,1427.1 L2110.2,1427.0 L2102.2,1426.8 L2094.2,1426.7 L2086.2,1426.4 L2078.2,1426.2 L2070.2,1426.0 L2062.2,1425.7 L2054.2,1425.4 L2046.2,1425.1 L2038.2,1424.7 L2030.2,1424.4 L2022.3,1424.0 L2014.3,1423.6 L2006.3,1423.2 L1998.3,1422.7 L1990.3,1422.3 L1982.3,1421.9 L1974.3,1421.4 L1966.3,1420.9 L1958.3,1420.4 L1950.4,1419.9 L1942.4,1419.3 L1934.4,1418.8 L1926.4,1418.2 L1918.4,1417.6 L1910.5,1416.9 L1902.5,1416.3 L1894.5,1415.6 L1886.5,1414.9 L1878.6,1414.2 L1870.6,1413.5 L1862.7,1412.8 L1854.7,1412.0 L1846.7,1411.2 L1838.8,1410.4 L1830.8,1409.6 L1822.9,1408.8 L1815.0,1407.9 L1807.0,1407.1 L1799.1,1406.2 L1791.1,1405.3 L1783.2,1404.3 L1775.3,1403.4 L1767.4,1402.4 L1759.4,1401.5 L1751.5,1400.5 L1743.6,1399.5 L1735.7,1398.4 L1727.8,1397.4 L1719.9,1396.3 L1712.0,1395.2 L1704.1,1394.1 L1696.2,1393.0 L1688.3,1391.9 L1680.4,1390.7 L1672.5,1389.6 L1664.6,1388.4 L1656.8,1387.2 L1648.9,1385.9 L1641.0,1384.7 L1633.2,1383.4 L1625.3,1382.2 L1617.4,1380.9 L1609.6,1379.6 L1601.7,1378.3 L1593.9,1376.9 L1586.0,1375.6 L1578.2,1374.2 L1570.3,1372.8 L1562.5,1371.4 L1554.6,1370.0 L1546.8,1368.5 L1539.0,1367.1 L1531.2,1365.6 L1523.3,1364.1 L1515.5,1362.6 L1507.7,1361.1 L1499.9,1359.5 L1492.1,1358.0 L1484.3,1356.4 L1476.5,1354.8 L1468.7,1353.2 L1460.9,1351.6 L1453.1,1349.9 L1445.3,1348.3 L1437.5,1346.6 L1429.7,1344.9 L1421.9,1343.2 L1414.2,1341.5 L1406.4,1339.8 L1398.6,1338.0 L1390.9,1336.2 L1383.1,1334.5 L1375.3,1332.7 L1367.6,1330.9 L1359.8,1329.0 L1352.1,1327.2 L1344.3,1325.3 L1336.6,1323.4 L1328.8,1321.5 L1321.1,1319.6 L1313.4,1317.7 L1305.6,1315.8 L1297.9,1313.8 L1290.2,1311.8 L1282.5,1309.9 L1274.8,1307.9 L1267.1,1305.8 L1259.3,1303.8 L1251.6,1301.8 L1243.9,1299.7 L1236.2,1297.6 L1228.5,1295.5 L1220.9,1293.4 L1213.2,1291.3 L1205.5,1289.2 L1197.8,1287.1 L1190.1,1285.0 L1182.4,1282.9 L1174.7,1280.8 L1167.0,1278.7 L1159.3,1276.5 L1151.6,1274.3 L1144.0,1272.2 L1136.3,1270.0 L1128.6,1267.7 L1120.9,1265.5 L1113.3,1263.3 L1105.6,1261.0 L1098.0,1258.8 L1090.3,1256.5 L1082.6,1254.2 L1075.0,1251.9 L1067.3,1249.5 L1059.7,1247.2 L1052.1,1244.8 L1044.4,1242.5 L1036.8,1240.1 L1029.2,1237.7 L1021.5,1235.3 L1013.9,1232.8 L1006.3,1230.4 L998.7,1227.9 L991.1,1225.5 L983.5,1223.0 L975.9,1220.5 L968.2,1218.0 L960.6,1215.5 L953.1,1212.9 L945.5,1210.4 L937.9,1207.8 L930.3,1205.2 L922.7,1202.6 L915.1,1200.0 L907.5,1197.4 L900.0,1194.8 L892.4,1192.1 L884.8,1189.5 L877.3,1186.8 L869.7,1184.1 L862.2,1181.4 L854.6,1178.7 L847.1,1176.0 L839.5,1173.2 L832.0,1170.5 L824.4,1167.7 L816.9,1164.9 L809.4,1162.1 L801.8,1159.4 L794.3,1156.7 L786.8,1154.0 L779.2,1151.2 L771.7,1148.5 L764.2,1145.7 L756.6,1142.9 L749.1,1140.1 L741.6,1137.2 L734.1,1134.4 L726.7,1131.5 L719.2,1128.6 L711.7,1125.7 L704.2,1122.8 L696.8,1119.9 L689.3,1116.9 L681.9,1114.0 L674.5,1111.0 L667.1,1108.0 L659.7,1104.9 L652.3,1101.9 L644.9,1098.8 L637.5,1095.7 L630.1,1092.6 L622.8,1089.5 L615.4,1086.3 L608.1,1083.1 L600.8,1079.9 L593.5,1076.7 L586.2,1073.5 L578.9,1070.2 L571.6,1066.9 L564.4,1063.6 L557.1,1060.3 L549.9,1056.9 L542.7,1053.6 L535.4,1050.2 L528.2,1046.7 L521.1,1043.3 L513.9,1039.8 L506.7,1036.3 L499.6,1032.8 L492.5,1029.2 L485.4,1025.7 L478.3,1022.1 L471.2,1018.4 L464.2,1014.8 L457.1,1011.1 L450.1,1007.4 L443.1,1003.7 L436.1,999.9 L429.1,996.1 L422.1,992.3 L415.2,988.4 L408.3,984.6 L401.4,980.6 L394.5,976.6 L387.7,972.6 L380.9,968.6 L374.1,964.5 L367.3,960.4 L360.5,956.3 L353.8,952.1 L347.0,947.9 L340.3,943.7 L333.6,939.4 L327.0,935.1 L320.3,930.8 L313.7,926.5 L307.1,922.1 L300.5,917.7 L294.0,913.2 L287.4,908.8 L280.9,904.3 L274.4,899.7 L268.0,895.1 L261.5,890.5 L255.1,885.9 L248.7,881.2 L242.3,876.5 L236.0,871.8 L229.6,867.0 L223.3,862.2 L217.0,857.3 L210.8,852.4 L204.5,847.5 L198.3,842.6 L192.1,837.6 L186.0,832.5 L179.9,827.5 L173.8,822.4 L167.7,817.2 L161.6,812.1 L155.6,806.9 L149.7,801.6 L143.7,796.3 L137.9,791.0 L132.0,785.6 L126.2,780.2 L120.5,774.8 L114.8,769.2 L109.2,763.7 L103.6,758.1 L98.1,752.4 L92.7,746.7 L87.3,741.0 L82.0,735.2 L76.8,729.3 L71.6,723.4 L66.5,717.4 L61.5,711.4 L56.6,705.3 L51.7,699.1 L47.0,692.9 L42.3,686.6 L37.7,680.3 L33.2,673.9 L28.8,667.3" fill="none" stroke="url(#gbot)" stroke-width="36" filter="url(#bl8)"/>
<path d="M2818.4,1330.4 L2811.0,1333.8 L2803.6,1337.1 L2796.1,1340.4 L2788.7,1343.5 L2781.2,1346.6 L2773.8,1349.7 L2766.3,1352.7 L2758.7,1355.6 L2751.2,1358.5 L2743.7,1361.3 L2736.1,1364.0 L2728.5,1366.7 L2720.9,1369.3 L2713.3,1371.9 L2705.7,1374.4 L2698.0,1376.8 L2690.3,1379.2 L2682.7,1381.5 L2675.0,1383.8 L2667.3,1386.0 L2659.6,1388.2 L2651.8,1390.3 L2644.1,1392.4 L2636.3,1394.4 L2628.6,1396.4 L2620.8,1398.3 L2613.0,1400.2 L2605.2,1402.1 L2597.4,1403.8 L2589.5,1405.6 L2581.7,1407.3 L2573.8,1408.9 L2566.0,1410.5 L2558.1,1412.1 L2550.3,1413.6 L2542.4,1415.1 L2534.5,1416.6 L2526.6,1418.0 L2518.7,1419.4 L2510.8,1420.7 L2502.8,1422.0 L2494.9,1423.3 L2487.0,1424.5 L2479.0,1425.7 L2471.1,1426.8 L2463.1,1428.0 L2455.2,1429.1 L2447.2,1430.1 L2439.2,1431.2 L2431.3,1432.2 L2423.3,1433.2 L2415.3,1434.1 L2407.3,1435.0 L2399.4,1435.9 L2391.4,1436.8 L2383.4,1437.6 L2375.4,1438.4 L2367.4,1439.2 L2359.4,1439.9 L2351.3,1440.7 L2343.3,1441.4 L2335.3,1442.0 L2327.3,1442.7 L2319.3,1443.3 L2311.3,1443.8 L2303.2,1444.4 L2295.2,1444.9 L2287.2,1445.4 L2279.1,1445.9 L2271.1,1446.3 L2263.1,1446.8 L2255.0,1447.1 L2247.0,1447.5 L2238.9,1447.9 L2230.9,1448.2 L2222.8,1448.5 L2214.8,1448.7 L2206.7,1449.0 L2198.7,1449.2 L2190.6,1449.4 L2182.6,1449.5 L2174.5,1449.7 L2166.4,1449.8 L2158.4,1449.9 L2150.3,1449.9 L2142.3,1450.0 L2134.2,1450.0 L2126.1,1450.0 L2118.1,1449.9 L2110.0,1449.9 L2101.9,1449.8 L2093.9,1449.7 L2085.8,1449.6 L2077.8,1449.4 L2069.7,1449.3 L2061.6,1449.1 L2053.6,1448.9 L2045.5,1448.6 L2037.4,1448.4 L2029.4,1448.1 L2021.3,1447.8 L2013.3,1447.4 L2005.2,1447.1 L1997.2,1446.7 L1989.1,1446.3 L1981.0,1445.9 L1973.0,1445.5 L1964.9,1445.1 L1956.9,1444.6 L1948.8,1444.1 L1940.8,1443.6 L1932.8,1443.0 L1924.7,1442.5 L1916.7,1441.9 L1908.6,1441.3 L1900.6,1440.7 L1892.6,1440.1 L1884.5,1439.4 L1876.5,1438.8 L1868.5,1438.1 L1860.5,1437.4 L1852.4,1436.6 L1844.4,1435.9 L1836.4,1435.1 L1828.4,1434.3 L1820.4,1433.5 L1812.4,1432.7 L1804.4,1431.9 L1796.4,1431.0 L1788.4,1430.2 L1780.4,1429.3 L1772.4,1428.4 L1764.4,1427.4 L1756.5,1426.5 L1748.5,1425.5 L1740.5,1424.6 L1732.5,1423.6 L1724.6,1422.5 L1716.6,1421.5 L1708.6,1420.5 L1700.7,1419.4 L1692.7,1418.3 L1684.8,1417.2 L1676.8,1416.1 L1668.9,1414.9 L1660.9,1413.8 L1653.0,1412.6 L1645.0,1411.4 L1637.1,1410.2 L1629.2,1409.0 L1621.2,1407.8 L1613.3,1406.5 L1605.4,1405.2 L1597.5,1403.9 L1589.6,1402.6 L1581.7,1401.3 L1573.8,1399.9 L1565.8,1398.6 L1557.9,1397.2 L1550.0,1395.8 L1542.2,1394.4 L1534.3,1393.0 L1526.4,1391.5 L1518.5,1390.1 L1510.6,1388.6 L1502.7,1387.1 L1494.9,1385.6 L1487.0,1384.0 L1479.1,1382.5 L1471.2,1380.9 L1463.4,1379.4 L1455.5,1377.8 L1447.7,1376.1 L1439.8,1374.5 L1432.0,1372.9 L1424.1,1371.2 L1416.3,1369.5 L1408.4,1367.8 L1400.6,1366.1 L1392.8,1364.4 L1384.9,1362.7 L1377.1,1360.9 L1369.3,1359.1 L1361.5,1357.4 L1353.7,1355.5 L1345.9,1353.7 L1338.0,1351.9 L1330.2,1350.0 L1322.4,1348.2 L1314.6,1346.3 L1306.8,1344.4 L1299.1,1342.5 L1291.3,1340.5 L1283.5,1338.6 L1275.7,1336.6 L1267.9,1334.7 L1260.2,1332.7 L1252.4,1330.7 L1244.6,1328.6 L1236.9,1326.6 L1229.1,1324.5 L1221.3,1322.5 L1213.6,1320.4 L1205.8,1318.3 L1198.1,1316.2 L1190.3,1314.1 L1182.6,1311.9 L1174.9,1309.8 L1167.1,1307.6 L1159.4,1305.4 L1151.7,1303.2 L1144.0,1301.0 L1136.2,1298.7 L1128.5,1296.5 L1120.8,1294.2 L1113.1,1291.9 L1105.4,1289.7 L1097.7,1287.3 L1090.0,1285.0 L1082.3,1282.7 L1074.6,1280.3 L1066.9,1278.0 L1059.3,1275.6 L1051.6,1273.2 L1043.9,1270.8 L1036.2,1268.4 L1028.6,1265.9 L1020.9,1263.5 L1013.2,1261.0 L1005.6,1258.6 L997.9,1256.1 L990.3,1253.6 L982.6,1251.0 L975.0,1248.5 L967.3,1246.0 L959.7,1243.4 L952.1,1240.8 L944.4,1238.2 L936.8,1235.6 L929.2,1233.0 L921.6,1230.4 L914.0,1227.7 L906.4,1225.1 L898.7,1222.4 L891.1,1219.7 L883.5,1217.0 L875.9,1214.3 L868.4,1211.6 L860.8,1208.8 L853.2,1206.1 L845.6,1203.3 L838.0,1200.6 L830.5,1197.8 L822.9,1195.0 L815.3,1192.1 L807.8,1189.3 L800.2,1186.5 L792.7,1183.6 L785.1,1180.7 L777.6,1177.8 L770.0,1174.9 L762.5,1172.0 L755.0,1169.0 L747.5,1166.1 L740.0,1163.1 L732.5,1160.1 L725.0,1157.1 L717.5,1154.1 L710.0,1151.0 L702.6,1148.0 L695.1,1144.9 L687.6,1141.8 L680.2,1138.7 L672.8,1135.6 L665.3,1132.4 L657.9,1129.2 L650.5,1126.0 L643.1,1122.8 L635.7,1119.6 L628.4,1116.3 L621.0,1113.1 L613.6,1109.8 L606.3,1106.5 L599.0,1103.1 L591.6,1099.8 L584.3,1096.4 L577.0,1093.0 L569.8,1089.6 L562.5,1086.1 L555.2,1082.7 L548.0,1079.2 L540.7,1075.6 L533.5,1072.1 L526.3,1068.5 L519.1,1065.0 L511.9,1061.3 L504.8,1057.7 L497.6,1054.1 L490.5,1050.4 L483.4,1046.7 L476.3,1042.9 L469.2,1039.2 L462.1,1035.4 L455.0,1031.6 L448.0,1027.7 L441.0,1023.9 L434.0,1020.0 L427.0,1016.1 L420.0,1012.1 L413.0,1008.1 L406.1,1004.1 L399.2,1000.1 L392.3,996.0 L385.4,991.9 L378.5,987.8 L371.7,983.7 L364.8,979.5 L358.0,975.3 L351.2,971.1 L344.4,966.8 L337.7,962.5 L331.0,958.2 L324.2,953.8 L317.6,949.4 L310.9,945.0 L304.2,940.6 L297.6,936.1 L291.0,931.6 L284.4,927.0 L277.8,922.5 L271.3,917.8 L264.8,913.2 L258.3,908.5 L251.8,903.8 L245.4,899.1 L238.9,894.3 L232.5,889.5 L226.1,884.6 L219.8,879.7 L213.4,874.8 L207.1,869.9 L200.8,864.9 L194.6,859.9 L188.4,854.8 L182.1,849.7 L176.0,844.6 L169.8,839.4 L163.7,834.2 L157.6,828.9 L151.5,823.7 L145.5,818.3 L139.5,813.0 L133.5,807.6 L127.6,802.1 L121.7,796.6 L115.8,791.1 L110.1,785.5 L104.3,779.8 L98.6,774.1 L93.0,768.4 L87.4,762.6 L81.9,756.7 L76.5,750.8 L71.1,744.8 L65.8,738.8 L60.6,732.7 L55.4,726.6 L50.4,720.4 L45.4,714.1 L40.4,707.8 L35.6,701.4 L30.9,694.9 L26.2,688.3 L21.6,681.7 L17.2,675.1" fill="none" stroke="#ff5a30" stroke-width="14" opacity="0.85"/>
<path d="M2813.8,1320.4 L2806.4,1323.8 L2799.1,1327.1 L2791.8,1330.3 L2784.4,1333.4 L2777.0,1336.5 L2769.6,1339.5 L2762.2,1342.4 L2754.8,1345.3 L2747.3,1348.2 L2739.9,1350.9 L2732.4,1353.6 L2724.9,1356.3 L2717.4,1358.9 L2709.8,1361.4 L2702.3,1363.9 L2694.7,1366.3 L2687.1,1368.7 L2679.5,1371.0 L2671.9,1373.3 L2664.3,1375.5 L2656.6,1377.6 L2648.9,1379.7 L2641.3,1381.8 L2633.6,1383.8 L2625.9,1385.8 L2618.2,1387.7 L2610.4,1389.5 L2602.7,1391.3 L2594.9,1393.1 L2587.2,1394.8 L2579.4,1396.5 L2571.6,1398.2 L2563.8,1399.8 L2556.0,1401.3 L2548.2,1402.8 L2540.4,1404.3 L2532.5,1405.8 L2524.7,1407.2 L2516.8,1408.5 L2509.0,1409.8 L2501.1,1411.1 L2493.2,1412.4 L2485.3,1413.6 L2477.4,1414.8 L2469.5,1416.0 L2461.6,1417.1 L2453.7,1418.2 L2445.8,1419.2 L2437.8,1420.3 L2429.9,1421.3 L2422.0,1422.2 L2414.0,1423.2 L2406.1,1424.1 L2398.2,1425.0 L2390.2,1425.8 L2382.2,1426.7 L2374.3,1427.5 L2366.3,1428.2 L2358.4,1429.0 L2350.4,1429.7 L2342.4,1430.4 L2334.4,1431.1 L2326.5,1431.7 L2318.5,1432.3 L2310.5,1432.9 L2302.5,1433.4 L2294.5,1433.9 L2286.5,1434.4 L2278.5,1434.9 L2270.5,1435.4 L2262.5,1435.8 L2254.5,1436.2 L2246.5,1436.5 L2238.5,1436.9 L2230.5,1437.2 L2222.5,1437.5 L2214.4,1437.7 L2206.4,1438.0 L2198.4,1438.2 L2190.4,1438.4 L2182.4,1438.5 L2174.3,1438.7 L2166.3,1438.8 L2158.3,1438.9 L2150.3,1438.9 L2142.2,1439.0 L2134.2,1439.0 L2126.2,1439.0 L2118.1,1438.9 L2110.1,1438.9 L2102.1,1438.8 L2094.0,1438.7 L2086.0,1438.6 L2078.0,1438.4 L2069.9,1438.3 L2061.9,1438.1 L2053.9,1437.9 L2045.8,1437.6 L2037.8,1437.4 L2029.8,1437.1 L2021.8,1436.8 L2013.7,1436.5 L2005.7,1436.1 L1997.7,1435.7 L1989.6,1435.4 L1981.6,1435.0 L1973.6,1434.5 L1965.6,1434.1 L1957.5,1433.6 L1949.5,1433.1 L1941.5,1432.6 L1933.5,1432.1 L1925.5,1431.5 L1917.5,1430.9 L1909.5,1430.4 L1901.4,1429.7 L1893.4,1429.1 L1885.4,1428.5 L1877.4,1427.8 L1869.4,1427.1 L1861.4,1426.4 L1853.4,1425.7 L1845.5,1424.9 L1837.5,1424.2 L1829.5,1423.4 L1821.5,1422.6 L1813.5,1421.8 L1805.5,1421.0 L1797.6,1420.1 L1789.6,1419.2 L1781.6,1418.3 L1773.7,1417.4 L1765.7,1416.5 L1757.8,1415.6 L1749.8,1414.6 L1741.9,1413.6 L1733.9,1412.6 L1726.0,1411.6 L1718.0,1410.6 L1710.1,1409.6 L1702.1,1408.5 L1694.2,1407.4 L1686.3,1406.3 L1678.4,1405.2 L1670.4,1404.1 L1662.5,1402.9 L1654.6,1401.7 L1646.7,1400.6 L1638.8,1399.3 L1630.9,1398.1 L1623.0,1396.9 L1615.1,1395.6 L1607.2,1394.4 L1599.3,1393.1 L1591.4,1391.8 L1583.5,1390.4 L1575.6,1389.1 L1567.7,1387.7 L1559.8,1386.4 L1552.0,1385.0 L1544.1,1383.6 L1536.2,1382.1 L1528.4,1380.7 L1520.5,1379.2 L1512.6,1377.8 L1504.8,1376.3 L1496.9,1374.8 L1489.1,1373.2 L1481.2,1371.7 L1473.4,1370.1 L1465.6,1368.6 L1457.7,1367.0 L1449.9,1365.4 L1442.1,1363.7 L1434.2,1362.1 L1426.4,1360.5 L1418.6,1358.8 L1410.8,1357.1 L1403.0,1355.4 L1395.2,1353.7 L1387.3,1351.9 L1379.5,1350.2 L1371.7,1348.4 L1363.9,1346.6 L1356.2,1344.8 L1348.4,1343.0 L1340.6,1341.2 L1332.8,1339.3 L1325.0,1337.5 L1317.2,1335.6 L1309.5,1333.7 L1301.7,1331.8 L1293.9,1329.9 L1286.2,1327.9 L1278.4,1326.0 L1270.6,1324.0 L1262.9,1322.0 L1255.1,1320.0 L1247.4,1318.0 L1239.7,1316.0 L1231.9,1313.9 L1224.2,1311.9 L1216.4,1309.8 L1208.7,1307.7 L1201.0,1305.6 L1193.3,1303.5 L1185.5,1301.3 L1177.8,1299.2 L1170.1,1297.0 L1162.4,1294.8 L1154.7,1292.6 L1147.0,1290.4 L1139.3,1288.2 L1131.6,1285.9 L1123.9,1283.7 L1116.2,1281.4 L1108.5,1279.1 L1100.9,1276.8 L1093.2,1274.5 L1085.5,1272.2 L1077.8,1269.8 L1070.2,1267.5 L1062.5,1265.1 L1054.9,1262.7 L1047.2,1260.3 L1039.5,1257.9 L1031.9,1255.5 L1024.3,1253.0 L1016.6,1250.6 L1009.0,1248.1 L1001.3,1245.6 L993.7,1243.1 L986.1,1240.6 L978.4,1238.1 L970.8,1235.5 L963.2,1233.0 L955.6,1230.4 L948.0,1227.8 L940.4,1225.2 L932.8,1222.6 L925.2,1220.0 L917.6,1217.3 L910.0,1214.7 L902.4,1212.0 L894.8,1209.4 L887.2,1206.7 L879.7,1204.0 L872.1,1201.2 L864.5,1198.5 L856.9,1195.8 L849.4,1193.0 L841.8,1190.2 L834.3,1187.4 L826.7,1184.6 L819.2,1181.8 L811.6,1179.0 L804.1,1176.2 L796.6,1173.3 L789.0,1170.4 L781.5,1167.6 L774.0,1164.7 L766.5,1161.7 L759.0,1158.8 L751.5,1155.9 L744.0,1152.9 L736.6,1149.9 L729.1,1146.9 L721.6,1143.9 L714.2,1140.9 L706.7,1137.8 L699.3,1134.7 L691.9,1131.7 L684.5,1128.6 L677.1,1125.4 L669.7,1122.3 L662.3,1119.1 L654.9,1115.9 L647.5,1112.7 L640.2,1109.5 L632.8,1106.3 L625.5,1103.0 L618.2,1099.7 L610.8,1096.4 L603.5,1093.1 L596.2,1089.8 L589.0,1086.4 L581.7,1083.0 L574.5,1079.6 L567.2,1076.2 L560.0,1072.7 L552.8,1069.3 L545.6,1065.8 L538.4,1062.2 L531.2,1058.7 L524.0,1055.1 L516.9,1051.5 L509.8,1047.9 L502.7,1044.3 L495.6,1040.6 L488.5,1036.9 L481.4,1033.2 L474.3,1029.5 L467.3,1025.7 L460.3,1021.9 L453.3,1018.1 L446.3,1014.2 L439.3,1010.4 L432.4,1006.5 L425.4,1002.5 L418.5,998.6 L411.6,994.6 L404.7,990.6 L397.8,986.6 L391.0,982.6 L384.1,978.6 L377.3,974.5 L370.4,970.4 L363.6,966.2 L356.9,962.1 L350.1,957.9 L343.4,953.7 L336.6,949.4 L329.9,945.1 L323.2,940.8 L316.6,936.5 L309.9,932.1 L303.3,927.7 L296.7,923.2 L290.1,918.8 L283.6,914.2 L277.1,909.7 L270.6,905.1 L264.1,900.5 L257.6,895.9 L251.2,891.2 L244.7,886.5 L238.3,881.8 L232.0,877.0 L225.6,872.2 L219.3,867.3 L213.0,862.4 L206.7,857.5 L200.5,852.6 L194.2,847.6 L188.0,842.6 L181.9,837.5 L175.7,832.4 L169.6,827.3 L163.5,822.1 L157.4,816.9 L151.4,811.7 L145.3,806.5 L139.3,801.2 L133.3,795.9 L127.4,790.5 L121.5,785.1 L115.7,779.7 L109.9,774.2 L104.2,768.6 L98.5,763.0 L92.9,757.4 L87.4,751.6 L81.9,745.9 L76.5,740.1 L71.2,734.2 L65.9,728.2 L60.7,722.2 L55.6,716.2 L50.5,710.0 L45.6,703.8 L40.7,697.5 L35.9,691.2 L31.3,684.8 L26.7,678.3 L22.2,671.7" fill="none" stroke="#ff7c5c" stroke-width="4" filter="url(#bl15)" opacity="0.75"/>
<path d="M155.9,585.6 L163.9,586.4 L171.9,587.1 L179.9,587.9 L187.9,588.7 L196.0,589.6 L204.0,590.4 L211.9,591.2 L219.9,592.1 L227.9,593.0 L235.9,593.9 L243.9,594.8 L251.9,595.7 L259.9,596.7 L267.9,597.6 L275.8,598.6 L283.8,599.6 L291.8,600.6 L299.8,601.6 L307.7,602.6 L315.7,603.7 L323.7,604.7 L331.7,605.8 L339.6,606.8 L347.6,607.9 L355.5,609.0 L363.5,610.1 L371.5,611.3 L379.4,612.4 L387.4,613.6 L395.3,614.7 L403.3,615.9 L411.2,617.1 L419.2,618.3 L427.1,619.5 L435.0,620.8 L443.0,622.0 L450.9,623.3 L458.9,624.5 L466.8,625.8 L474.7,627.1 L482.6,628.4 L490.6,629.7 L498.5,631.1 L506.4,632.4 L514.3,633.8 L522.3,635.1 L530.2,636.5 L538.1,637.9 L546.0,639.3 L553.9,640.7 L561.8,642.1 L569.7,643.6 L577.6,645.0 L585.5,646.5 L593.5,647.9 L601.4,649.4 L609.3,650.9 L617.1,652.4 L625.0,653.9 L632.9,655.4 L640.8,657.0 L648.7,658.5 L656.6,660.0 L664.5,661.6 L672.4,663.2 L680.3,664.7 L688.1,666.3 L696.0,667.9 L703.9,669.5 L711.8,671.2 L719.7,672.8 L727.5,674.4 L735.4,676.1 L743.3,677.7 L751.1,679.4 L759.0,681.0 L766.9,682.7 L774.7,684.4 L782.6,686.1 L790.5,687.8 L798.3,689.5 L806.2,691.2 L814.0,693.0 L821.9,694.7 L829.7,696.5 L837.6,698.2 L845.4,700.0 L853.3,701.7 L861.1,703.5 L869.0,705.3 L876.8,707.1 L884.6,708.9 L892.5,710.7 L900.3,712.5 L908.2,714.3 L916.0,716.1 L923.8,718.0 L931.7,719.8 L939.5,721.6 L947.3,723.5 L955.1,725.3 L963.0,727.2 L970.8,729.1 L978.6,730.9 L986.4,732.8 L994.3,734.7 L1002.1,736.6 L1009.9,738.5 L1017.7,740.4 L1025.5,742.3 L1033.4,744.2 L1041.2,746.1 L1049.0,748.0 L1056.8,749.9 L1064.6,751.8 L1072.4,753.7 L1080.2,755.7 L1088.0,757.6 L1095.8,759.6 L1103.6,761.5 L1111.4,763.5 L1119.2,765.4 L1127.0,767.4 L1134.8,769.3 L1142.6,771.3 L1150.4,773.3 L1158.2,775.3 L1166.0,777.2 L1173.8,779.2 L1181.6,781.2 L1189.4,783.2 L1197.2,785.2 L1204.9,787.2 L1212.7,789.3 L1220.5,791.3 L1228.3,793.3 L1236.1,795.3 L1243.8,797.4 L1251.6,799.4 L1259.4,801.5 L1267.2,803.5 L1274.9,805.6 L1282.7,807.6 L1290.5,809.7 L1298.2,811.8 L1306.0,813.9 L1313.8,815.9 L1321.5,818.0 L1329.3,820.1 L1337.0,822.2 L1344.8,824.3 L1352.6,826.4 L1360.3,828.6 L1368.1,830.7 L1375.8,832.8 L1383.6,834.9 L1391.3,837.1 L1399.1,839.2 L1406.8,841.4 L1414.5,843.5 L1422.3,845.7 L1430.0,847.9 L1437.8,850.0 L1445.5,852.2 L1453.2,854.4 L1461.0,856.6 L1468.7,858.8 L1476.4,861.0 L1484.2,863.2 L1491.9,865.4 L1499.6,867.6 L1507.3,869.8 L1515.1,872.1 L1522.8,874.3 L1530.5,876.5 L1538.2,878.8 L1545.9,881.0 L1553.7,883.3 L1561.4,885.5 L1569.1,887.8 L1576.8,890.1 L1584.5,892.4 L1592.2,894.6 L1599.9,896.9 L1607.6,899.2 L1615.3,901.5 L1623.0,903.8 L1630.7,906.2 L1638.4,908.5 L1646.1,910.8 L1653.8,913.1 L1661.5,915.5 L1669.2,917.8 L1676.9,920.2 L1684.6,922.5 L1692.3,924.9 L1699.9,927.3 L1707.6,929.6 L1715.3,932.0 L1723.0,934.4 L1730.7,936.8 L1738.3,939.2 L1746.0,941.6 L1753.7,944.0 L1761.3,946.4 L1769.0,948.9 L1776.7,951.3 L1784.3,953.7 L1792.0,956.2 L1799.7,958.6 L1807.3,961.1 L1815.0,963.5 L1822.6,966.0 L1830.3,968.5 L1837.9,970.9 L1845.6,973.4 L1853.2,975.9 L1860.9,978.4 L1868.5,980.9 L1876.2,983.4 L1883.8,985.9 L1891.4,988.5 L1899.1,991.0 L1906.7,993.5 L1914.3,996.1 L1922.0,998.6 L1929.6,1001.2 L1937.2,1003.7 L1944.8,1006.3 L1952.4,1008.9 L1960.1,1011.4 L1967.7,1014.0 L1975.3,1016.6 L1982.9,1019.2 L1990.5,1021.8 L1998.1,1024.4 L2005.7,1027.0 L2013.3,1029.6 L2020.9,1032.3 L2028.5,1034.9 L2036.1,1037.5 L2043.7,1040.1 L2051.3,1042.8 L2058.9,1045.4 L2066.5,1048.1 L2074.1,1050.7 L2081.7,1053.4 L2089.3,1056.1 L2096.9,1058.7 L2104.4,1061.4 L2112.0,1064.1 L2119.6,1066.8 L2127.2,1069.5 L2134.8,1072.2 L2142.3,1074.9 L2149.9,1077.6 L2157.5,1080.3 L2165.0,1083.0 L2172.6,1085.7 L2180.2,1088.5 L2187.7,1091.2 L2195.3,1093.9 L2202.9,1096.7 L2210.4,1099.4 L2218.0,1102.2 L2225.5,1104.9 L2233.1,1107.7 L2240.6,1110.5 L2248.2,1113.2 L2255.7,1116.0 L2263.3,1118.8 L2270.8,1121.6 L2278.4,1124.4 L2285.9,1127.1 L2293.5,1129.9 L2301.0,1132.7 L2308.5,1135.5 L2316.1,1138.3 L2323.6,1141.1 L2331.2,1143.9 L2338.7,1146.8 L2346.2,1149.6 L2353.8,1152.4 L2361.3,1155.2 L2368.8,1158.0 L2376.3,1160.9 L2383.9,1163.7 L2391.4,1166.5 L2398.9,1169.4 L2406.5,1172.2 L2414.0,1175.1 L2421.5,1177.9 L2429.0,1180.7 L2436.5,1183.6 L2444.1,1186.4 L2451.6,1189.3 L2459.1,1192.2 L2466.6,1195.0 L2474.1,1197.9 L2481.7,1200.7 L2489.2,1203.6 L2496.7,1206.5 L2504.2,1209.3 L2511.7,1212.2 L2519.2,1215.1 L2526.7,1218.0 L2534.2,1220.8 L2541.8,1223.7 L2549.3,1226.6 L2556.8,1229.5 L2564.3,1232.3 L2571.8,1235.2 L2579.3,1238.1 L2586.8,1241.0 L2594.3,1243.9 L2601.8,1246.8 L2609.3,1249.6 L2616.9,1252.5 L2624.4,1255.4 L2631.9,1258.2 L2639.4,1261.1 L2646.9,1263.9 L2654.5,1266.7 L2662.0,1269.5 L2669.6,1272.3 L2677.1,1275.0 L2684.7,1277.7 L2692.2,1280.4 L2699.8,1283.1 L2707.4,1285.7 L2715.0,1288.2 L2722.6,1290.8 L2730.3,1293.2 L2737.9,1295.7 L2745.6,1298.1 L2753.3,1300.4 L2761.0,1302.6 L2768.7,1304.8 L2776.4,1307.0 L2784.1,1309.1 L2791.9,1311.1 L2799.7,1313.0 L2807.5,1314.9 L2815.3,1316.6 L2823.2,1318.3" fill="none" stroke="#ff5426" stroke-width="18" filter="url(#bl3)"/>
<path d="M155.5,590.1 L163.5,591.1 L171.5,592.2 L179.4,593.3 L187.4,594.4 L195.3,595.6 L203.3,596.7 L211.3,597.9 L219.2,599.1 L227.2,600.3 L235.1,601.5 L243.0,602.7 L251.0,603.9 L258.9,605.0 L266.9,606.0 L274.8,607.1 L282.8,608.3 L290.7,609.4 L298.7,610.5 L306.6,611.7 L314.5,612.9 L322.5,614.1 L330.4,615.3 L338.3,616.5 L346.3,617.7 L354.2,619.0 L362.1,620.2 L370.0,621.5 L377.9,622.8 L385.8,624.1 L393.8,625.4 L401.7,626.7 L409.6,628.0 L417.5,629.3 L425.4,630.6 L433.3,632.0 L441.2,633.3 L449.1,634.7 L457.0,636.0 L464.9,637.4 L472.8,638.8 L480.7,640.2 L488.6,641.7 L496.5,643.1 L504.4,644.5 L512.3,646.0 L520.1,647.5 L528.0,648.9 L535.9,650.4 L543.8,651.9 L551.7,653.5 L559.5,655.0 L567.4,656.5 L575.3,658.1 L583.1,659.6 L591.0,661.2 L598.9,662.8 L606.7,664.3 L614.6,665.8 L622.5,667.3 L630.4,668.9 L638.2,670.4 L646.1,672.0 L654.0,673.6 L661.8,675.1 L669.7,676.7 L677.6,678.3 L685.4,680.0 L693.3,681.6 L701.1,683.2 L709.0,684.8 L716.8,686.5 L724.7,688.2 L732.5,689.8 L740.4,691.5 L748.2,693.2 L756.1,694.9 L763.9,696.6 L771.8,698.3 L779.6,700.0 L787.4,701.7 L795.3,703.5 L803.1,705.2 L811.0,707.0 L818.8,708.7 L826.6,710.5 L834.5,712.3 L842.3,714.1 L850.1,715.9 L857.9,717.7 L865.8,719.5 L873.6,721.3 L881.4,723.1 L889.2,724.9 L897.0,726.8 L904.9,728.6 L912.7,730.4 L920.5,732.3 L928.3,734.2 L936.1,736.0 L943.9,737.9 L951.7,739.8 L959.5,741.7 L967.4,743.6 L975.2,745.5 L983.0,747.4 L990.8,749.3 L998.6,751.2 L1006.4,753.1 L1014.2,755.0 L1022.0,756.9 L1029.8,758.8 L1037.6,760.7 L1045.4,762.7 L1053.2,764.6 L1061.0,766.5 L1068.8,768.5 L1076.6,770.4 L1084.4,772.4 L1092.1,774.3 L1099.9,776.3 L1107.7,778.3 L1115.5,780.2 L1123.3,782.2 L1131.1,784.2 L1138.9,786.2 L1146.6,788.2 L1154.4,790.2 L1162.2,792.2 L1170.0,794.2 L1177.7,796.2 L1185.5,798.2 L1193.3,800.2 L1201.1,802.3 L1208.8,804.3 L1216.6,806.3 L1224.4,808.4 L1232.1,810.4 L1239.9,812.5 L1247.6,814.5 L1255.4,816.6 L1263.2,818.7 L1270.9,820.7 L1278.7,822.8 L1286.4,824.9 L1294.2,827.0 L1301.9,829.1 L1309.7,831.2 L1317.4,833.3 L1325.2,835.4 L1332.9,837.5 L1340.6,839.6 L1348.4,841.8 L1356.1,843.9 L1363.9,846.0 L1371.6,848.2 L1379.3,850.3 L1387.1,852.5 L1394.8,854.6 L1402.5,856.8 L1410.2,859.0 L1418.0,861.1 L1425.7,863.3 L1433.4,865.5 L1441.1,867.7 L1448.9,869.9 L1456.6,872.1 L1464.3,874.3 L1472.0,876.5 L1479.7,878.7 L1487.4,880.9 L1495.2,883.2 L1502.9,885.4 L1510.6,887.6 L1518.3,889.9 L1526.0,892.1 L1533.7,894.4 L1541.4,896.7 L1549.1,898.9 L1556.8,901.2 L1564.5,903.5 L1572.2,905.8 L1579.9,908.1 L1587.5,910.4 L1595.2,912.7 L1602.9,915.0 L1610.6,917.3 L1618.3,919.6 L1626.0,921.9 L1633.7,924.3 L1641.3,926.6 L1649.0,928.9 L1656.7,931.3 L1664.4,933.7 L1672.0,936.0 L1679.7,938.4 L1687.4,940.8 L1695.0,943.2 L1702.7,945.5 L1710.4,947.9 L1718.0,950.3 L1725.7,952.8 L1733.3,955.2 L1741.0,957.6 L1748.6,960.0 L1756.3,962.4 L1763.9,964.9 L1771.6,967.3 L1779.2,969.8 L1786.9,972.2 L1794.5,974.7 L1802.2,977.2 L1809.8,979.6 L1817.4,982.1 L1825.1,984.6 L1832.7,987.1 L1840.3,989.6 L1848.0,992.1 L1855.6,994.5 L1863.3,997.0 L1870.9,999.4 L1878.5,1001.9 L1886.2,1004.3 L1893.8,1006.8 L1901.5,1009.3 L1909.1,1011.8 L1916.7,1014.3 L1924.3,1016.8 L1932.0,1019.3 L1939.6,1021.8 L1947.2,1024.3 L1954.8,1026.8 L1962.5,1029.4 L1970.1,1031.9 L1977.7,1034.5 L1985.3,1037.0 L1992.9,1039.6 L2000.5,1042.1 L2008.1,1044.7 L2015.7,1047.3 L2023.3,1049.9 L2030.9,1052.4 L2038.5,1055.0 L2046.1,1057.6 L2053.7,1060.2 L2061.3,1062.8 L2068.9,1065.5 L2076.5,1068.1 L2084.1,1070.7 L2091.7,1073.3 L2099.3,1076.0 L2106.9,1078.6 L2114.4,1081.3 L2122.0,1083.9 L2129.6,1086.6 L2137.2,1089.3 L2144.7,1091.9 L2152.3,1094.6 L2159.9,1097.3 L2167.5,1100.0 L2175.0,1102.7 L2182.6,1105.4 L2190.2,1108.1 L2197.7,1110.8 L2205.3,1113.5 L2212.8,1116.2 L2220.4,1118.9 L2228.0,1121.6 L2235.5,1124.4 L2243.1,1127.1 L2250.6,1129.8 L2258.2,1132.6 L2265.7,1135.3 L2273.3,1138.0 L2280.8,1140.8 L2288.4,1143.5 L2295.9,1146.3 L2303.5,1149.0 L2311.0,1151.8 L2318.6,1154.5 L2326.1,1157.3 L2333.7,1160.1 L2341.2,1162.8 L2348.8,1165.6 L2356.3,1168.4 L2363.9,1171.1 L2371.4,1173.9 L2379.0,1176.7 L2386.5,1179.5 L2394.1,1182.2 L2401.6,1185.0 L2409.1,1187.8 L2416.7,1190.6 L2424.2,1193.4 L2431.7,1196.2 L2439.3,1199.0 L2446.8,1201.8 L2454.4,1204.6 L2461.9,1207.4 L2469.4,1210.2 L2477.0,1213.0 L2484.5,1215.8 L2492.0,1218.6 L2499.5,1221.5 L2507.1,1224.3 L2514.6,1227.1 L2522.2,1229.7 L2529.8,1232.3 L2537.4,1235.0 L2545.0,1237.6 L2552.6,1240.2 L2560.2,1242.8 L2567.8,1245.5 L2575.4,1248.1 L2583.1,1250.7 L2590.7,1253.4 L2598.3,1255.9 L2606.0,1258.4 L2613.6,1260.8 L2621.3,1263.3 L2629.0,1265.7 L2636.7,1268.2 L2644.4,1270.6 L2652.1,1273.0 L2659.8,1275.3 L2667.5,1277.9 L2675.1,1280.5 L2682.8,1283.0 L2690.4,1285.5 L2698.1,1288.0 L2705.8,1290.4 L2713.5,1292.8 L2721.2,1295.1 L2728.9,1297.4 L2736.7,1299.7 L2744.4,1301.8 L2752.2,1304.0 L2760.0,1306.1 L2767.7,1308.1 L2775.6,1310.0 L2783.4,1311.9 L2791.2,1313.7 L2799.1,1315.4 L2807.0,1317.0 L2814.9,1318.6 L2822.8,1320.1" fill="none" stroke="#ff7a5a" stroke-width="2" opacity="0.5" filter="url(#bl15)"/>
<path d="M589.7,649.3 L597.4,651.8 L605.1,654.4 L612.7,657.0 L620.3,659.6 L628.0,662.3 L635.6,665.0 L643.1,667.8 L650.7,670.7 L658.2,673.6 L665.8,676.6 L673.2,679.6 L680.7,682.7 L688.1,685.8 L695.5,689.0 L702.9,692.3 L710.2,695.6 L717.5,699.1 L724.8,702.6 L732.0,706.1 L739.2,709.8 L746.3,713.5 L753.4,717.3 L760.4,721.2 L767.4,725.2 L774.3,729.2 L781.2,733.3 L788.0,737.5 L794.8,741.8 L801.6,746.1 L808.3,750.5 L815.0,754.9 L821.7,759.4 L828.4,763.9 L835.0,768.5 L841.6,773.1 L848.2,777.7 L854.7,782.4 L861.3,787.1 L867.8,791.8 L874.3,796.5 L880.9,801.3 L887.4,806.0 L893.9,810.8 L900.4,815.5 L906.9,820.2 L913.5,824.9 L920.0,829.7 L926.6,834.3 L933.1,839.0 L939.7,843.7 L946.3,848.3 L952.8,852.9 L959.4,857.6 L966.0,862.1 L972.7,866.7 L979.3,871.3 L985.9,875.8 L992.6,880.4 L999.2,884.9 L1005.9,889.4 L1012.5,893.9 L1019.2,898.3 L1025.9,902.8 L1032.6,907.2 L1039.3,911.7 L1046.0,916.1 L1052.7,920.5 L1059.5,924.9 L1066.2,929.2 L1073.0,933.6 L1079.7,937.9 L1086.5,942.3 L1093.3,946.6 L1100.0,950.9 L1106.8,955.2 L1113.6,959.5 L1120.4,963.8 L1127.3,968.0 L1134.1,972.3 L1140.9,976.5 L1147.8,980.7 L1154.6,984.9 L1161.5,989.1 L1168.3,993.3 L1175.2,997.5 L1182.1,1001.7 L1188.9,1005.8 L1195.8,1009.9 L1202.7,1014.1 L1209.6,1018.2 L1216.6,1022.3 L1223.5,1026.4 L1230.4,1030.5 L1237.3,1034.6 L1244.3,1038.7 L1251.2,1042.7 L1258.2,1046.8 L1265.2,1050.8 L1272.1,1054.9 L1279.1,1058.9 L1286.1,1062.9 L1293.1,1066.9 L1300.1,1070.9 L1307.1,1074.9 L1314.1,1078.9 L1321.1,1082.9 L1328.1,1086.9 L1335.2,1090.8 L1342.2,1094.8 L1349.2,1098.7 L1356.3,1102.6 L1363.4,1106.5 L1370.4,1110.4 L1377.5,1114.3 L1384.6,1118.2 L1391.7,1122.0 L1398.8,1125.8 L1405.9,1129.6 L1413.0,1133.4 L1420.1,1137.2 L1427.3,1141.0 L1434.4,1144.7 L1441.6,1148.4 L1448.8,1152.1 L1455.9,1155.8 L1463.1,1159.4 L1470.3,1163.0 L1477.5,1166.6 L1484.8,1170.2 L1492.0,1173.8 L1499.2,1177.3 L1506.5,1180.8 L1513.7,1184.3 L1521.0,1187.7 L1528.3,1191.1 L1535.6,1194.5 L1542.9,1197.9 L1550.2,1201.2 L1557.6,1204.5 L1564.9,1207.7 L1572.3,1211.0 L1579.7,1214.2 L1587.0,1217.3 L1594.4,1220.4 L1601.8,1223.5 L1609.3,1226.6 L1616.7,1229.6 L1624.2,1232.6 L1631.6,1235.5 L1639.1,1238.4 L1646.6,1241.3 L1654.1,1244.1 L1661.6,1246.9 L1669.2,1249.7 L1676.7,1252.4 L1684.3,1255.0 L1691.9,1257.7 L1699.5,1260.2 L1707.1,1262.8 L1714.7,1265.3 L1722.4,1267.7 L1730.0,1270.2 L1737.7,1272.6 L1745.4,1274.9 L1753.1,1277.2 L1760.8,1279.5 L1768.5,1281.8 L1776.2,1284.0 L1783.9,1286.1 L1791.7,1288.3 L1799.4,1290.4 L1807.2,1292.5 L1815.0,1294.5 L1822.8,1296.6 L1830.6,1298.5 L1838.4,1300.5 L1846.2,1302.4 L1854.0,1304.3 L1861.9,1306.2 L1869.7,1308.1 L1877.6,1309.9 L1885.4,1311.7 L1893.3,1313.4 L1901.2,1315.2 L1909.0,1316.9 L1916.9,1318.6 L1924.8,1320.3 L1932.7,1321.9 L1940.6,1323.6 L1948.5,1325.2 L1956.5,1326.8 L1964.4,1328.3 L1972.3,1329.9 L1980.2,1331.4 L1988.2,1332.9 L1996.1,1334.4 L2004.1,1335.9 L2012.0,1337.4 L2020.0,1338.8 L2027.9,1340.3 L2035.9,1341.7 L2043.8,1343.1 L2051.8,1344.5 L2059.7,1345.9 L2067.7,1347.2 L2075.7,1348.6 L2083.6,1349.9 L2091.6,1351.2 L2099.6,1352.6 L2107.5,1353.9 L2115.5,1355.2 L2123.5,1356.5 L2131.4,1357.8 L2139.4,1359.0 L2147.4,1360.3 L2155.3,1361.5 L2163.3,1362.7 L2171.3,1363.9 L2179.3,1365.0 L2187.2,1366.2 L2195.2,1367.2 L2203.2,1368.3 L2211.2,1369.3 L2219.1,1370.2 L2227.1,1371.1 L2235.1,1372.0 L2243.1,1372.8 L2251.1,1373.5 L2259.1,1374.2 L2267.1,1374.8 L2275.1,1375.3 L2283.1,1375.8 L2291.1,1376.2 L2299.1,1376.5 L2307.1,1376.8 L2315.1,1377.0 L2323.1,1377.1 L2331.2,1377.1 L2339.2,1377.0 L2347.2,1376.9 L2355.2,1376.7 L2363.3,1376.4 L2371.3,1376.1 L2379.3,1375.6 L2387.3,1375.1 L2395.4,1374.6 L2403.4,1374.0 L2411.4,1373.3 L2419.4,1372.5 L2427.4,1371.7 L2435.4,1370.8 L2443.4,1369.8 L2451.4,1368.8 L2459.4,1367.7 L2467.4,1366.6 L2475.4,1365.4 L2483.3,1364.1 L2491.3,1362.8 L2499.2,1361.5 L2507.2,1360.1 L2515.1,1358.6 L2523.0,1357.2 L2531.0,1355.7 L2538.9,1354.1 L2546.8,1352.6 L2554.7,1351.0 L2562.7,1349.5 L2570.6,1347.9 L2578.5,1346.3 L2586.4,1344.7 L2594.3,1343.1 L2602.2,1341.6 L2610.2,1340.0 L2618.1,1338.5 L2626.0,1337.0 L2633.9,1335.5 L2641.8,1334.1 L2649.8,1332.7 L2657.7,1331.3 L2665.6,1330.0 L2673.6,1328.7 L2681.5,1327.5 L2689.5,1326.4 L2697.4,1325.3 L2705.4,1324.3 L2713.4,1323.4 L2721.4,1322.5 L2729.4,1321.7 L2737.4,1321.0 L2745.4,1320.4 L2753.4,1319.9 L2761.4,1319.6 L2769.5,1319.3 L2777.5,1319.1 L2785.6,1319.0 L2793.7,1319.1 L2801.7,1319.2 L2809.8,1319.5 L2818.0,1320.0" fill="none" stroke="url(#gghost)" stroke-width="7" filter="url(#bl2)"/>
<path d="M1916.9,1318.6 L1924.8,1320.3 L1932.7,1321.9 L1940.6,1323.6 L1948.5,1325.2 L1956.5,1326.8 L1964.4,1328.3 L1972.3,1329.9 L1980.2,1331.4 L1988.2,1332.9 L1996.1,1334.4 L2004.1,1335.9 L2012.0,1337.4 L2020.0,1338.8 L2027.9,1340.3 L2035.9,1341.7 L2043.8,1343.1 L2051.8,1344.5 L2059.7,1345.9 L2067.7,1347.2 L2075.7,1348.6 L2083.6,1349.9 L2091.6,1351.2 L2099.6,1352.6 L2107.5,1353.9 L2115.5,1355.2 L2123.5,1356.5 L2131.4,1357.8 L2139.4,1359.0 L2147.4,1360.3 L2155.3,1361.5 L2163.3,1362.7 L2171.3,1363.9 L2179.3,1365.0 L2187.2,1366.2 L2195.2,1367.2 L2203.2,1368.3 L2211.2,1369.3 L2219.1,1370.2 L2227.1,1371.1 L2235.1,1372.0 L2243.1,1372.8 L2251.1,1373.5 L2259.1,1374.2 L2267.1,1374.8 L2275.1,1375.3 L2283.1,1375.8 L2291.1,1376.2 L2299.1,1376.5 L2307.1,1376.8 L2315.1,1377.0 L2323.1,1377.1 L2331.2,1377.1 L2339.2,1377.0 L2347.2,1376.9 L2355.2,1376.7 L2363.3,1376.4 L2371.3,1376.1 L2379.3,1375.6 L2387.3,1375.1 L2395.4,1374.6 L2403.4,1374.0 L2411.4,1373.3 L2419.4,1372.5 L2427.4,1371.7 L2435.4,1370.8 L2443.4,1369.8 L2451.4,1368.8 L2459.4,1367.7 L2467.4,1366.6 L2475.4,1365.4 L2483.3,1364.1 L2491.3,1362.8 L2499.2,1361.5 L2507.2,1360.1 L2515.1,1358.6 L2523.0,1357.2 L2531.0,1355.7 L2538.9,1354.1 L2546.8,1352.6 L2554.7,1351.0 L2562.7,1349.5 L2570.6,1347.9 L2578.5,1346.3 L2586.4,1344.7 L2594.3,1343.1 L2602.2,1341.6 L2610.2,1340.0 L2618.1,1338.5 L2626.0,1337.0 L2633.9,1335.5 L2641.8,1334.1 L2649.8,1332.7 L2657.7,1331.3 L2665.6,1330.0 L2673.6,1328.7 L2681.5,1327.5 L2689.5,1326.4 L2697.4,1325.3 L2705.4,1324.3 L2713.4,1323.4 L2721.4,1322.5 L2729.4,1321.7 L2737.4,1321.0 L2745.4,1320.4 L2753.4,1319.9 L2761.4,1319.6 L2769.5,1319.3 L2777.5,1319.1 L2785.6,1319.0 L2793.7,1319.1 L2801.7,1319.2 L2809.8,1319.5 L2818.0,1320.0" fill="none" stroke="#ff8060" stroke-width="1.5" opacity="0.5"/>
</g>
<path d="M155.8,587.1 L163.8,588.2 L171.7,589.2 L179.7,590.3 L187.7,591.5 L195.6,592.6 L203.6,593.7 L211.6,594.9 L219.5,596.1 L227.5,597.3 L235.4,598.5 L243.4,599.7 L251.3,600.9 L259.3,602.0 L267.2,603.1 L275.2,604.2 L283.1,605.3 L291.1,606.4 L299.0,607.6 L307.0,608.7 L314.9,609.9 L322.9,611.1 L330.8,612.3 L338.7,613.5 L346.7,614.7 L354.6,616.0 L362.5,617.3 L370.4,618.5 L378.4,619.8 L386.3,621.1 L394.2,622.4 L402.1,623.7 L410.0,625.0 L417.9,626.3 L425.9,627.7 L433.8,629.0 L441.7,630.3 L449.6,631.7 L457.5,633.1 L465.4,634.5 L473.3,635.9 L481.2,637.3 L489.1,638.7 L497.0,640.1 L504.9,641.6 L512.8,643.0 L520.6,644.5 L528.5,646.0 L536.4,647.5 L544.3,649.0 L552.2,650.5 L560.1,652.0 L567.9,653.6 L575.8,655.1 L583.7,656.7 L591.5,658.2 L599.4,659.8 L607.3,661.3 L615.2,662.8 L623.1,664.4 L630.9,665.9 L638.8,667.5 L646.7,669.0 L654.5,670.6 L662.4,672.2 L670.3,673.8 L678.1,675.4 L686.0,677.0 L693.9,678.6 L701.7,680.3 L709.6,681.9 L717.4,683.6 L725.3,685.2 L733.2,686.9 L741.0,688.6 L748.9,690.3 L756.7,691.9 L764.5,693.7 L772.4,695.4 L780.2,697.1 L788.1,698.8 L795.9,700.6 L803.8,702.3 L811.6,704.0 L819.4,705.8 L827.3,707.6 L835.1,709.4 L842.9,711.1 L850.8,712.9 L858.6,714.7 L866.4,716.5 L874.2,718.4 L882.1,720.2 L889.9,722.0 L897.7,723.8 L905.5,725.7 L913.4,727.5 L921.2,729.4 L929.0,731.2 L936.8,733.1 L944.6,735.0 L952.4,736.9 L960.2,738.8 L968.0,740.6 L975.9,742.5 L983.7,744.4 L991.5,746.4 L999.3,748.3 L1007.1,750.2 L1014.9,752.1 L1022.7,754.0 L1030.5,755.9 L1038.3,757.8 L1046.1,759.8 L1053.9,761.7 L1061.7,763.6 L1069.5,765.6 L1077.3,767.5 L1085.1,769.5 L1092.9,771.4 L1100.7,773.4 L1108.4,775.4 L1116.2,777.3 L1124.0,779.3 L1131.8,781.3 L1139.6,783.3 L1147.4,785.3 L1155.2,787.3 L1162.9,789.3 L1170.7,791.3 L1178.5,793.3 L1186.3,795.3 L1194.0,797.3 L1201.8,799.4 L1209.6,801.4 L1217.3,803.4 L1225.1,805.5 L1232.9,807.5 L1240.6,809.6 L1248.4,811.6 L1256.2,813.7 L1263.9,815.8 L1271.7,817.8 L1279.4,819.9 L1287.2,822.0 L1294.9,824.1 L1302.7,826.2 L1310.4,828.3 L1318.2,830.4 L1325.9,832.5 L1333.7,834.6 L1341.4,836.8 L1349.2,838.9 L1356.9,841.0 L1364.6,843.1 L1372.4,845.3 L1380.1,847.4 L1387.9,849.6 L1395.6,851.8 L1403.3,853.9 L1411.1,856.1 L1418.8,858.3 L1426.5,860.4 L1434.2,862.6 L1442.0,864.8 L1449.7,867.0 L1457.4,869.2 L1465.1,871.4 L1472.8,873.6 L1480.6,875.8 L1488.3,878.1 L1496.0,880.3 L1503.7,882.5 L1511.4,884.8 L1519.1,887.0 L1526.8,889.3 L1534.5,891.5 L1542.2,893.8 L1549.9,896.0 L1557.6,898.3 L1565.3,900.6 L1573.0,902.9 L1580.7,905.2 L1588.4,907.5 L1596.1,909.8 L1603.8,912.1 L1611.5,914.4 L1619.2,916.7 L1626.8,919.1 L1634.5,921.4 L1642.2,923.7 L1649.9,926.1 L1657.6,928.4 L1665.2,930.8 L1672.9,933.2 L1680.6,935.5 L1688.2,937.9 L1695.9,940.3 L1703.6,942.7 L1711.2,945.1 L1718.9,947.5 L1726.6,949.9 L1734.2,952.3 L1741.9,954.7 L1749.5,957.1 L1757.2,959.6 L1764.8,962.0 L1772.5,964.5 L1780.1,966.9 L1787.8,969.4 L1795.4,971.8 L1803.1,974.3 L1810.7,976.8 L1818.3,979.3 L1826.0,981.7 L1833.6,984.2 L1841.3,986.7 L1848.9,989.2 L1856.5,991.7 L1864.2,994.1 L1871.8,996.6 L1879.5,999.0 L1887.1,1001.5 L1894.8,1004.0 L1902.4,1006.5 L1910.0,1008.9 L1917.7,1011.4 L1925.3,1013.9 L1932.9,1016.4 L1940.6,1019.0 L1948.2,1021.5 L1955.8,1024.0 L1963.4,1026.5 L1971.0,1029.1 L1978.7,1031.6 L1986.3,1034.2 L1993.9,1036.7 L2001.5,1039.3 L2009.1,1041.9 L2016.7,1044.4 L2024.3,1047.0 L2031.9,1049.6 L2039.5,1052.2 L2047.1,1054.8 L2054.7,1057.4 L2062.3,1060.0 L2069.9,1062.6 L2077.5,1065.3 L2085.1,1067.9 L2092.7,1070.5 L2100.3,1073.2 L2107.9,1075.8 L2115.4,1078.5 L2123.0,1081.1 L2130.6,1083.8 L2138.2,1086.4 L2145.8,1089.1 L2153.3,1091.8 L2160.9,1094.5 L2168.5,1097.2 L2176.0,1099.8 L2183.6,1102.5 L2191.2,1105.2 L2198.8,1107.9 L2206.3,1110.7 L2213.9,1113.4 L2221.4,1116.1 L2229.0,1118.8 L2236.6,1121.5 L2244.1,1124.3 L2251.7,1127.0 L2259.2,1129.7 L2266.8,1132.5 L2274.3,1135.2 L2281.9,1138.0 L2289.4,1140.7 L2297.0,1143.5 L2304.5,1146.2 L2312.1,1149.0 L2319.6,1151.7 L2327.2,1154.5 L2334.7,1157.2 L2342.3,1160.0 L2349.8,1162.8 L2357.4,1165.5 L2364.9,1168.3 L2372.5,1171.1 L2380.0,1173.9 L2387.6,1176.6 L2395.1,1179.4 L2402.7,1182.2 L2410.2,1185.0 L2417.7,1187.8 L2425.3,1190.6 L2432.8,1193.4 L2440.3,1196.2 L2447.9,1199.0 L2455.4,1201.8 L2463.0,1204.6 L2470.5,1207.4 L2478.0,1210.2 L2485.6,1213.0 L2493.1,1215.8 L2500.6,1218.7 L2508.2,1221.5 L2515.7,1224.3 L2523.3,1226.9 L2530.9,1229.5 L2538.5,1232.2 L2546.1,1234.8 L2553.7,1237.4 L2561.3,1240.0 L2568.9,1242.7 L2576.5,1245.3 L2584.1,1247.9 L2591.7,1250.6 L2599.4,1253.1 L2607.0,1255.6 L2614.7,1258.0 L2622.4,1260.5 L2630.1,1262.9 L2637.8,1265.4 L2645.5,1267.8 L2653.2,1270.2 L2660.9,1272.5 L2668.5,1275.2 L2676.1,1277.8 L2683.7,1280.3 L2691.4,1282.9 L2699.0,1285.4 L2706.7,1287.9 L2714.3,1290.3 L2722.0,1292.7 L2729.7,1295.0 L2737.4,1297.3 L2745.1,1299.6 L2752.8,1301.8 L2760.6,1303.9 L2768.3,1306.0 L2776.1,1308.0 L2783.9,1309.9 L2791.7,1311.7 L2799.5,1313.6 L2807.3,1315.5 L2815.2,1317.3 L2823.0,1319.1" fill="none" stroke="#7a2814" stroke-width="1.1" stroke-opacity="0.85"/>
<path d="M2817.1,1327.7 L2809.7,1331.0 L2802.3,1334.1 L2794.8,1337.3 L2787.3,1340.3 L2779.9,1343.3 L2772.4,1346.2 L2764.8,1349.1 L2757.3,1351.9 L2749.8,1354.6 L2742.2,1357.3 L2734.6,1359.9 L2727.0,1362.4 L2719.4,1364.9 L2711.8,1367.3 L2704.1,1369.7 L2696.5,1372.0 L2688.9,1374.4 L2681.2,1376.6 L2673.5,1378.9 L2665.8,1381.0 L2658.1,1383.1 L2650.4,1385.2 L2642.7,1387.2 L2635.0,1389.2 L2627.2,1391.1 L2619.5,1393.0 L2611.7,1394.8 L2603.9,1396.6 L2596.1,1398.3 L2588.3,1400.0 L2580.5,1401.6 L2572.7,1403.2 L2564.8,1404.8 L2557.0,1406.3 L2549.1,1407.8 L2541.3,1409.2 L2533.4,1410.6 L2525.5,1411.9 L2517.6,1413.2 L2509.7,1414.5 L2501.8,1415.8 L2493.9,1417.0 L2486.0,1418.1 L2478.1,1419.3 L2470.2,1420.4 L2462.2,1421.5 L2454.3,1422.5 L2446.3,1423.5 L2438.4,1424.5 L2430.4,1425.4 L2422.5,1426.4 L2414.5,1427.3 L2406.6,1428.1 L2398.6,1429.0 L2390.6,1429.8 L2382.6,1430.6 L2374.7,1431.4 L2366.7,1432.1 L2358.7,1432.9 L2350.7,1433.6 L2342.7,1434.2 L2334.7,1434.9 L2326.7,1435.5 L2318.7,1436.1 L2310.7,1436.6 L2302.7,1437.2 L2294.7,1437.7 L2286.7,1438.2 L2278.7,1438.6 L2270.7,1439.0 L2262.7,1439.4 L2254.7,1439.8 L2246.6,1440.1 L2238.6,1440.5 L2230.6,1440.8 L2222.6,1441.0 L2214.5,1441.3 L2206.5,1441.5 L2198.5,1441.7 L2190.5,1441.8 L2182.4,1442.0 L2174.4,1442.1 L2166.3,1442.2 L2158.3,1442.3 L2150.3,1442.3 L2142.2,1442.3 L2134.2,1442.3 L2126.2,1442.3 L2118.1,1442.2 L2110.1,1442.2 L2102.0,1442.1 L2094.0,1441.9 L2086.0,1441.8 L2077.9,1441.6 L2069.9,1441.4 L2061.8,1441.2 L2053.8,1441.0 L2045.8,1440.7 L2037.7,1440.5 L2029.7,1440.2 L2021.6,1439.8 L2013.6,1439.5 L2005.6,1439.1 L1997.5,1438.7 L1989.5,1438.4 L1981.5,1437.9 L1973.4,1437.5 L1965.4,1437.1 L1957.4,1436.6 L1949.3,1436.1 L1941.3,1435.6 L1933.3,1435.1 L1925.3,1434.5 L1917.2,1433.9 L1909.2,1433.3 L1901.2,1432.7 L1893.2,1432.1 L1885.2,1431.5 L1877.2,1430.8 L1869.2,1430.1 L1861.2,1429.4 L1853.2,1428.7 L1845.2,1427.9 L1837.2,1427.2 L1829.2,1426.4 L1821.2,1425.6 L1813.2,1424.8 L1805.2,1423.9 L1797.3,1423.1 L1789.3,1422.2 L1781.3,1421.3 L1773.3,1420.4 L1765.4,1419.5 L1757.4,1418.6 L1749.4,1417.6 L1741.5,1416.6 L1733.5,1415.6 L1725.6,1414.6 L1717.6,1413.6 L1709.7,1412.5 L1701.7,1411.5 L1693.8,1410.4 L1685.9,1409.3 L1677.9,1408.2 L1670.0,1407.0 L1662.1,1405.9 L1654.2,1404.7 L1646.2,1403.5 L1638.3,1402.3 L1630.4,1401.1 L1622.5,1399.9 L1614.6,1398.6 L1606.7,1397.3 L1598.8,1396.0 L1590.9,1394.7 L1583.0,1393.4 L1575.1,1392.1 L1567.2,1390.7 L1559.3,1389.3 L1551.4,1387.9 L1543.6,1386.5 L1535.7,1385.1 L1527.8,1383.7 L1520.0,1382.2 L1512.1,1380.7 L1504.2,1379.2 L1496.4,1377.7 L1488.5,1376.2 L1480.7,1374.6 L1472.8,1373.1 L1465.0,1371.5 L1457.1,1369.9 L1449.3,1368.3 L1441.4,1366.7 L1433.6,1365.0 L1425.8,1363.4 L1418.0,1361.7 L1410.1,1360.0 L1402.3,1358.3 L1394.5,1356.6 L1386.7,1354.9 L1378.9,1353.1 L1371.1,1351.3 L1363.3,1349.6 L1355.5,1347.8 L1347.7,1345.9 L1339.9,1344.1 L1332.1,1342.3 L1324.3,1340.4 L1316.5,1338.5 L1308.7,1336.6 L1301.0,1334.7 L1293.2,1332.8 L1285.4,1330.8 L1277.7,1328.9 L1269.9,1326.9 L1262.1,1324.9 L1254.4,1322.9 L1246.6,1320.9 L1238.9,1318.9 L1231.1,1316.8 L1223.4,1314.8 L1215.7,1312.7 L1207.9,1310.6 L1200.2,1308.5 L1192.5,1306.3 L1184.7,1304.2 L1177.0,1302.0 L1169.3,1299.9 L1161.6,1297.7 L1153.9,1295.5 L1146.2,1293.3 L1138.5,1291.1 L1130.8,1288.8 L1123.1,1286.5 L1115.4,1284.3 L1107.7,1282.0 L1100.0,1279.7 L1092.3,1277.4 L1084.6,1275.0 L1077.0,1272.7 L1069.3,1270.3 L1061.6,1268.0 L1054.0,1265.6 L1046.3,1263.2 L1038.6,1260.8 L1031.0,1258.3 L1023.3,1255.9 L1015.7,1253.4 L1008.0,1250.9 L1000.4,1248.5 L992.8,1246.0 L985.1,1243.4 L977.5,1240.9 L969.9,1238.4 L962.3,1235.8 L954.6,1233.2 L947.0,1230.7 L939.4,1228.1 L931.8,1225.4 L924.2,1222.8 L916.6,1220.2 L909.0,1217.5 L901.4,1214.9 L893.8,1212.2 L886.2,1209.5 L878.6,1206.8 L871.1,1204.1 L863.5,1201.3 L855.9,1198.6 L848.3,1195.8 L840.8,1193.0 L833.2,1190.3 L825.7,1187.5 L818.1,1184.6 L810.6,1181.8 L803.0,1179.0 L795.5,1176.1 L788.0,1173.2 L780.4,1170.4 L772.9,1167.5 L765.4,1164.5 L757.9,1161.6 L750.4,1158.6 L742.9,1155.7 L735.4,1152.7 L728.0,1149.7 L720.5,1146.7 L713.0,1143.6 L705.6,1140.6 L698.2,1137.5 L690.7,1134.4 L683.3,1131.3 L675.9,1128.2 L668.5,1125.0 L661.1,1121.9 L653.7,1118.7 L646.3,1115.5 L639.0,1112.3 L631.6,1109.0 L624.3,1105.8 L616.9,1102.5 L609.6,1099.2 L602.3,1095.8 L595.0,1092.5 L587.7,1089.1 L580.4,1085.7 L573.2,1082.3 L565.9,1078.9 L558.7,1075.4 L551.5,1072.0 L544.3,1068.5 L537.1,1064.9 L529.9,1061.4 L522.7,1057.8 L515.6,1054.2 L508.4,1050.6 L501.3,1046.9 L494.2,1043.3 L487.1,1039.6 L480.0,1035.9 L472.9,1032.1 L465.9,1028.3 L458.9,1024.5 L451.8,1020.7 L444.8,1016.9 L437.9,1013.0 L430.9,1009.1 L423.9,1005.1 L417.0,1001.2 L410.1,997.2 L403.2,993.2 L396.3,989.2 L389.4,985.2 L382.5,981.1 L375.7,977.0 L368.9,972.9 L362.1,968.8 L355.3,964.6 L348.5,960.4 L341.7,956.2 L335.0,951.9 L328.3,947.6 L321.6,943.3 L314.9,939.0 L308.3,934.6 L301.6,930.2 L295.0,925.7 L288.4,921.2 L281.9,916.7 L275.3,912.2 L268.8,907.6 L262.3,903.0 L255.8,898.3 L249.4,893.6 L242.9,888.9 L236.5,884.2 L230.1,879.4 L223.8,874.5 L217.4,869.7 L211.1,864.8 L204.8,859.9 L198.6,854.9 L192.3,849.9 L186.1,844.9 L179.9,839.8 L173.8,834.7 L167.6,829.5 L161.5,824.4 L155.5,819.1 L149.3,813.9 L143.2,808.7 L137.2,803.5 L131.2,798.2 L125.2,792.9 L119.3,787.5 L113.4,782.0 L107.6,776.5 L101.8,771.0 L96.1,765.4 L90.4,759.8 L84.8,754.0 L79.3,748.3 L73.8,742.5 L68.4,736.6 L63.1,730.6 L57.8,724.6 L52.7,718.5 L47.6,712.4 L42.5,706.1 L37.6,699.9 L32.8,693.5 L28.0,687.1 L23.4,680.6 L18.8,673.9" fill="none" stroke="#7a2814" stroke-width="1.1" stroke-opacity="0.85"/>
<path d="M93.2,616.4 L100.7,619.1 L108.3,621.9 L115.9,624.6 L123.4,627.4 L131.0,630.1 L138.6,632.8 L146.2,635.5 L153.7,638.2 L161.3,640.9 L168.9,643.6 L176.5,646.3 L184.1,649.0 L191.7,651.6 L199.3,654.3 L206.9,656.9 L214.5,659.6 L222.1,662.2 L229.7,664.8 L237.3,667.4 L244.9,670.0 L252.5,672.6 L260.1,675.2 L267.7,677.8 L275.3,680.4 L282.9,682.9 L290.6,685.5 L298.2,688.0 L305.8,690.6 L313.4,693.1 L321.1,695.7 L328.7,698.2 L336.3,700.7 L344.0,703.2 L351.6,705.7 L359.2,708.2 L366.9,710.7 L374.5,713.2 L382.2,715.7 L389.8,718.1 L397.5,720.6 L405.1,723.1 L412.8,725.5 L420.4,728.0 L428.1,730.4 L435.7,732.9 L443.4,735.3 L451.0,737.7 L458.7,740.1 L466.4,742.6 L474.0,745.0 L481.7,747.4 L489.3,749.8 L497.0,752.2 L504.7,754.6 L512.4,757.0 L520.0,759.3 L527.7,761.7 L535.4,764.1 L543.0,766.5 L550.7,768.8 L558.4,771.2 L566.1,773.5 L573.8,775.9 L581.4,778.2 L589.1,780.6 L596.8,782.9 L604.5,785.3 L612.2,787.6 L619.9,789.9 L627.6,792.3 L635.2,794.6 L642.9,796.9 L650.6,799.2 L658.3,801.5 L666.0,803.8 L673.7,806.1 L681.4,808.4 L689.1,810.7 L696.8,813.0 L704.5,815.3 L712.2,817.6 L719.9,819.9 L727.6,822.2 L735.3,824.5 L743.0,826.8 L750.7,829.1 L758.4,831.4 L766.1,833.6 L773.8,835.9 L781.5,838.2 L789.2,840.5 L796.9,842.7 L804.6,845.0 L812.3,847.3 L820.0,849.5 L827.7,851.8 L835.4,854.1 L843.1,856.3 L850.8,858.6 L858.5,860.9 L866.3,863.1 L874.0,865.4 L881.7,867.7 L889.4,869.9 L897.1,872.2 L904.8,874.4 L912.5,876.7 L920.2,879.0 L927.9,881.2 L935.6,883.5 L943.3,885.7 L951.1,888.0 L958.8,890.3 L966.5,892.5 L974.2,894.8 L981.9,897.0 L989.6,899.3 L997.3,901.6 L1005.0,903.8 L1012.7,906.1 L1020.4,908.4 L1028.1,910.6 L1035.9,912.9 L1043.6,915.2 L1051.3,917.4 L1059.0,919.7 L1066.7,922.0 L1074.4,924.2 L1082.1,926.5 L1089.8,928.8 L1097.5,931.1 L1105.2,933.4 L1112.9,935.6 L1120.6,937.9 L1128.3,940.2 L1136.0,942.5 L1143.8,944.8 L1151.5,947.0 L1159.2,949.3 L1166.9,951.6 L1174.6,953.9 L1182.3,956.2 L1190.0,958.5 L1197.7,960.8 L1205.4,963.1 L1213.1,965.4 L1220.8,967.6 L1228.5,969.9 L1236.2,972.2 L1243.9,974.5 L1251.6,976.8 L1259.3,979.1 L1267.0,981.4 L1274.7,983.7 L1282.4,986.0 L1290.2,988.3 L1297.9,990.6 L1305.6,992.8 L1313.3,995.1 L1321.0,997.4 L1328.7,999.7 L1336.4,1002.0 L1344.1,1004.3 L1351.8,1006.6 L1359.5,1008.9 L1367.2,1011.2 L1374.9,1013.4 L1382.6,1015.7 L1390.3,1018.0 L1398.1,1020.3 L1405.8,1022.6 L1413.5,1024.9 L1421.2,1027.1 L1428.9,1029.4 L1436.6,1031.7 L1444.3,1034.0 L1452.0,1036.3 L1459.7,1038.5 L1467.4,1040.8 L1475.2,1043.1 L1482.9,1045.3 L1490.6,1047.6 L1498.3,1049.9 L1506.0,1052.2 L1513.7,1054.4 L1521.4,1056.7 L1529.2,1058.9 L1536.9,1061.2 L1544.6,1063.5 L1552.3,1065.7 L1560.0,1068.0 L1567.8,1070.2 L1575.5,1072.5 L1583.2,1074.7 L1590.9,1077.0 L1598.6,1079.2 L1606.4,1081.5 L1614.1,1083.7 L1621.8,1085.9 L1629.5,1088.2 L1637.3,1090.4 L1645.0,1092.6 L1652.7,1094.8 L1660.5,1097.1 L1668.2,1099.3 L1675.9,1101.5 L1683.6,1103.7 L1691.4,1105.9 L1699.1,1108.2 L1706.8,1110.4 L1714.6,1112.6 L1722.3,1114.8 L1730.0,1117.0 L1737.8,1119.2 L1745.5,1121.3 L1753.3,1123.5 L1761.0,1125.7 L1768.7,1127.9 L1776.5,1130.1 L1784.2,1132.3 L1792.0,1134.4 L1799.7,1136.6 L1807.5,1138.8 L1815.2,1140.9 L1823.0,1143.1 L1830.7,1145.2 L1838.5,1147.4 L1846.2,1149.5 L1854.0,1151.7 L1861.7,1153.8 L1869.5,1155.9 L1877.2,1158.1 L1885.0,1160.2 L1892.8,1162.3 L1900.5,1164.4 L1908.3,1166.5 L1916.1,1168.6 L1923.8,1170.7 L1931.6,1172.8 L1939.4,1174.9 L1947.1,1177.0 L1954.9,1179.1 L1962.7,1181.2 L1970.4,1183.3 L1978.2,1185.3 L1986.0,1187.4 L1993.8,1189.5 L2001.5,1191.5 L2009.3,1193.6 L2017.1,1195.6 L2024.9,1197.7 L2032.7,1199.7 L2040.5,1201.7 L2048.3,1203.7 L2056.0,1205.8 L2063.8,1207.8 L2071.6,1209.8 L2079.4,1211.8 L2087.2,1213.7 L2095.0,1215.7 L2102.8,1217.7 L2110.6,1219.6 L2118.4,1221.6 L2126.2,1223.5 L2134.0,1225.5 L2141.9,1227.4 L2149.7,1229.3 L2157.5,1231.2 L2165.3,1233.1 L2173.1,1235.0 L2180.9,1236.8 L2188.8,1238.7 L2196.6,1240.5 L2204.4,1242.4 L2212.2,1244.2 L2220.1,1246.0 L2227.9,1247.8 L2235.7,1249.5 L2243.6,1251.3 L2251.4,1253.1 L2259.3,1254.8 L2267.1,1256.5 L2275.0,1258.2 L2282.8,1259.9 L2290.7,1261.6 L2298.5,1263.2 L2306.4,1264.9 L2314.2,1266.5 L2322.1,1268.1 L2330.0,1269.7 L2337.8,1271.3 L2345.7,1272.8 L2353.6,1274.4 L2361.5,1275.9 L2369.3,1277.4 L2377.2,1278.9 L2385.1,1280.3 L2393.0,1281.8 L2400.9,1283.2 L2408.8,1284.6 L2416.7,1286.0 L2424.6,1287.4 L2432.5,1288.7 L2440.4,1290.0 L2448.3,1291.3 L2456.2,1292.6 L2464.1,1293.9 L2472.1,1295.1 L2480.0,1296.3 L2487.9,1297.5 L2495.8,1298.7 L2503.8,1299.8 L2511.7,1300.9 L2519.6,1302.0 L2527.6,1303.1 L2535.5,1304.1 L2543.5,1305.2 L2551.4,1306.2 L2559.4,1307.1 L2567.3,1308.1 L2575.3,1309.0 L2583.3,1309.9 L2591.2,1310.7 L2599.2,1311.6 L2607.2,1312.4 L2615.2,1313.2 L2623.2,1313.9 L2631.2,1314.6 L2639.2,1315.3 L2647.1,1316.0 L2655.2,1316.7 L2663.2,1317.3 L2671.2,1317.8 L2679.2,1318.4 L2687.2,1318.9 L2695.2,1319.4 L2703.2,1319.9 L2711.3,1320.3 L2719.3,1320.7 L2727.3,1321.1 L2735.4,1321.4 L2743.4,1321.7 L2751.5,1322.0 L2759.5,1322.2 L2767.6,1322.4 L2775.7,1322.6 L2783.7,1322.7 L2791.8,1322.8 L2799.9,1322.9 L2808.0,1322.9 L2816.0,1322.9 L2824.1,1322.8" fill="none" stroke="#7a2814" stroke-width="1.1" stroke-opacity="0.85"/>
<path d="M36.0,655.9 L41.8,661.5 L47.7,667.1 L53.6,672.6 L59.6,678.1 L65.6,683.5 L71.6,688.9 L77.7,694.3 L83.8,699.5 L89.9,704.8 L96.1,710.0 L102.3,715.1 L108.5,720.2 L114.7,725.2 L121.0,730.2 L127.4,735.2 L133.7,740.1 L140.1,744.9 L146.5,749.8 L153.0,754.5 L159.4,759.3 L165.9,763.9 L172.5,768.6 L179.0,773.2 L185.6,777.8 L192.2,782.3 L198.8,786.8 L205.5,791.2 L212.2,795.6 L218.9,800.0 L225.6,804.3 L232.4,808.6 L239.2,812.8 L246.0,817.1 L252.8,821.2 L259.7,825.4 L266.5,829.5 L273.4,833.6 L280.4,837.6 L287.3,841.7 L294.2,845.6 L301.2,849.6 L308.2,853.5 L315.2,857.4 L322.3,861.3 L329.3,865.1 L336.4,868.9 L343.5,872.7 L350.6,876.4 L357.7,880.1 L364.8,883.8 L372.0,887.5 L379.2,891.1 L386.3,894.7 L393.5,898.3 L400.7,901.9 L408.0,905.4 L415.2,908.9 L422.5,912.4 L429.7,915.9 L437.0,919.4 L444.3,922.8 L451.6,926.2 L458.9,929.6 L466.2,933.0 L473.5,936.3 L480.8,939.6 L488.2,943.0 L495.5,946.3 L502.9,949.6 L510.2,952.8 L517.6,956.1 L525.0,959.3 L532.3,962.5 L539.7,965.7 L547.1,968.9 L554.5,972.1 L561.9,975.3 L569.3,978.5 L576.7,981.6 L584.1,984.7 L591.6,987.9 L599.0,991.0 L606.4,994.1 L613.8,997.2 L621.2,1000.3 L628.7,1003.3 L636.1,1006.4 L643.6,1009.4 L651.0,1012.4 L658.5,1015.5 L665.9,1018.5 L673.4,1021.5 L680.8,1024.5 L688.3,1027.4 L695.8,1030.4 L703.2,1033.4 L710.7,1036.3 L718.2,1039.2 L725.7,1042.2 L733.1,1045.1 L740.6,1048.0 L748.1,1050.8 L755.6,1053.7 L763.1,1056.6 L770.6,1059.4 L778.1,1062.3 L785.6,1065.1 L793.2,1067.9 L800.7,1070.7 L808.2,1073.5 L815.7,1076.3 L823.3,1079.1 L830.8,1081.9 L838.3,1084.6 L845.9,1087.4 L853.4,1090.1 L861.0,1092.8 L868.5,1095.6 L876.1,1098.3 L883.6,1100.9 L891.2,1103.6 L898.8,1106.3 L906.3,1109.0 L913.9,1111.6 L921.5,1114.3 L929.1,1116.9 L936.6,1119.5 L944.2,1122.1 L951.8,1124.7 L959.4,1127.3 L967.0,1129.9 L974.6,1132.4 L982.2,1135.0 L989.8,1137.6 L997.4,1140.1 L1005.1,1142.6 L1012.7,1145.1 L1020.3,1147.6 L1027.9,1150.1 L1035.6,1152.6 L1043.2,1155.1 L1050.8,1157.6 L1058.5,1160.0 L1066.1,1162.5 L1073.8,1164.9 L1081.4,1167.4 L1089.1,1169.8 L1096.7,1172.2 L1104.4,1174.6 L1112.1,1177.0 L1119.7,1179.3 L1127.4,1181.7 L1135.1,1184.1 L1142.7,1186.4 L1150.4,1188.8 L1158.1,1191.1 L1165.8,1193.4 L1173.5,1195.7 L1181.2,1198.0 L1188.9,1200.3 L1196.6,1202.6 L1204.3,1204.9 L1212.0,1207.2 L1219.7,1209.4 L1227.4,1211.7 L1235.2,1213.9 L1242.9,1216.1 L1250.6,1218.4 L1258.3,1220.6 L1266.1,1222.8 L1273.8,1225.0 L1281.6,1227.2 L1289.3,1229.3 L1297.1,1231.5 L1304.8,1233.7 L1312.6,1235.8 L1320.3,1238.0 L1328.1,1240.1 L1335.8,1242.2 L1343.6,1244.3 L1351.4,1246.4 L1359.2,1248.5 L1366.9,1250.6 L1374.7,1252.7 L1382.5,1254.7 L1390.3,1256.8 L1398.1,1258.8 L1405.9,1260.9 L1413.7,1262.9 L1421.5,1264.9 L1429.3,1266.9 L1437.1,1268.9 L1444.9,1270.8 L1452.7,1272.8 L1460.5,1274.8 L1468.3,1276.7 L1476.2,1278.6 L1484.0,1280.6 L1491.8,1282.5 L1499.6,1284.4 L1507.5,1286.2 L1515.3,1288.1 L1523.1,1290.0 L1531.0,1291.8 L1538.8,1293.6 L1546.7,1295.5 L1554.5,1297.3 L1562.4,1299.1 L1570.2,1300.9 L1578.1,1302.6 L1585.9,1304.4 L1593.8,1306.1 L1601.7,1307.8 L1609.5,1309.6 L1617.4,1311.3 L1625.3,1312.9 L1633.2,1314.6 L1641.0,1316.3 L1648.9,1317.9 L1656.8,1319.5 L1664.7,1321.2 L1672.6,1322.8 L1680.5,1324.3 L1688.4,1325.9 L1696.3,1327.5 L1704.2,1329.0 L1712.1,1330.5 L1720.0,1332.0 L1727.9,1333.5 L1735.8,1335.0 L1743.7,1336.5 L1751.6,1337.9 L1759.5,1339.3 L1767.4,1340.8 L1775.4,1342.1 L1783.3,1343.5 L1791.2,1344.9 L1799.1,1346.2 L1807.1,1347.6 L1815.0,1348.9 L1822.9,1350.2 L1830.9,1351.5 L1838.8,1352.7 L1846.7,1354.0 L1854.7,1355.2 L1862.6,1356.4 L1870.6,1357.6 L1878.5,1358.7 L1886.4,1359.9 L1894.4,1361.0 L1902.3,1362.2 L1910.3,1363.3 L1918.3,1364.3 L1926.2,1365.4 L1934.2,1366.4 L1942.1,1367.5 L1950.1,1368.5 L1958.1,1369.4 L1966.0,1370.4 L1974.0,1371.4 L1982.0,1372.3 L1989.9,1373.2 L1997.9,1374.1 L2005.9,1374.9 L2013.9,1375.8 L2021.8,1376.6 L2029.8,1377.4 L2037.8,1378.2 L2045.8,1379.0 L2053.8,1379.7 L2061.8,1380.4 L2069.8,1381.1 L2077.7,1381.8 L2085.7,1382.5 L2093.7,1383.1 L2101.7,1383.7 L2109.7,1384.3 L2117.7,1384.9 L2125.7,1385.5 L2133.7,1386.0 L2141.7,1386.5 L2149.7,1387.0 L2157.7,1387.5 L2165.7,1387.9 L2173.7,1388.3 L2181.7,1388.7 L2189.7,1389.1 L2197.7,1389.4 L2205.8,1389.8 L2213.8,1390.1 L2221.8,1390.3 L2229.8,1390.6 L2237.8,1390.8 L2245.8,1391.0 L2253.8,1391.2 L2261.9,1391.4 L2269.9,1391.5 L2277.9,1391.6 L2285.9,1391.7 L2293.9,1391.8 L2302.0,1391.8 L2310.0,1391.8 L2318.0,1391.8 L2326.0,1391.8 L2334.1,1391.7 L2342.1,1391.7 L2350.1,1391.5 L2358.2,1391.4 L2366.2,1391.2 L2374.2,1391.1 L2382.2,1390.8 L2390.3,1390.6 L2398.3,1390.3 L2406.3,1390.0 L2414.4,1389.7 L2422.4,1389.4 L2430.4,1389.0 L2438.5,1388.6 L2446.5,1388.2 L2454.5,1387.7 L2462.6,1387.2 L2470.6,1386.7 L2478.6,1386.2 L2486.7,1385.6 L2494.7,1385.0 L2502.7,1384.4 L2510.8,1383.7 L2518.8,1383.0 L2526.8,1382.3 L2534.8,1381.5 L2542.8,1380.7 L2550.8,1379.8 L2558.8,1379.0 L2566.8,1378.0 L2574.8,1377.1 L2582.8,1376.1 L2590.8,1375.1 L2598.8,1374.0 L2606.7,1372.9 L2614.7,1371.8 L2622.7,1370.6 L2630.6,1369.4 L2638.6,1368.1 L2646.5,1366.8 L2654.4,1365.5 L2662.3,1364.1 L2670.3,1362.6 L2678.2,1361.2 L2686.1,1359.7 L2693.9,1358.1 L2701.8,1356.5 L2709.7,1354.8 L2717.5,1353.1 L2725.4,1351.4 L2733.2,1349.6 L2741.1,1347.7 L2748.9,1345.8 L2756.7,1343.9 L2764.5,1341.9 L2772.2,1339.9 L2780.0,1337.8 L2787.8,1335.6 L2795.5,1333.4 L2803.2,1331.2 L2811.0,1328.9 L2818.7,1326.5" fill="none" stroke="#7a2814" stroke-width="1.1" stroke-opacity="0.85"/>
<path d="M796.0,687.1 L788.5,690.5 L781.1,694.0 L773.7,697.5 L766.2,701.0 L758.9,704.6 L751.5,708.2 L744.1,711.8 L736.8,715.5 L729.5,719.2 L722.2,722.9 L715.0,726.6 L707.7,730.4 L700.5,734.2 L693.3,738.1 L686.2,742.0 L679.0,745.9 L671.9,749.9 L664.8,753.8 L657.7,757.9 L650.6,761.9 L643.5,766.0 L636.5,770.2 L629.5,774.4 L622.5,778.6 L615.6,782.8 L608.6,787.1 L601.7,791.5 L594.8,795.9 L587.9,800.3 L581.0,804.7 L574.2,809.2 L567.4,813.8 L560.6,818.4 L553.8,823.0 L547.0,827.7 L540.3,832.4 L533.6,837.2 L526.8,842.0 L520.2,846.8 L513.5,851.7 L506.9,856.7 L500.2,861.7 L493.6,866.7 L487.1,871.8 L480.6,877.0 L474.2,882.2 L467.8,887.6 L461.6,893.0 L455.5,898.5 L449.6,904.1 L443.8,909.8 L438.2,915.7 L432.7,921.7 L427.5,927.8 L422.5,934.1 L417.8,940.5 L413.3,947.1 L409.1,953.8 L405.2,960.7 L401.6,967.8 L398.3,975.1 L395.3,982.6 L392.8,990.4 L390.6,998.3" fill="none" stroke="#7a2814" stroke-width="1.1" stroke-opacity="0.85"/>
<path d="M1761.7,945.9 L1754.7,949.9 L1747.7,954.0 L1740.8,958.1 L1733.9,962.3 L1727.0,966.5 L1720.1,970.7 L1713.2,975.0 L1706.4,979.4 L1699.6,983.8 L1692.8,988.3 L1686.1,992.8 L1679.4,997.3 L1672.7,1001.9 L1666.0,1006.6 L1659.4,1011.2 L1652.8,1016.0 L1646.2,1020.8 L1639.7,1025.6 L1633.2,1030.5 L1626.7,1035.4 L1620.2,1040.4 L1613.8,1045.4 L1607.4,1050.5 L1601.1,1055.6 L1594.7,1060.7 L1588.4,1065.9 L1582.2,1071.1 L1576.0,1076.4 L1569.8,1081.7 L1563.6,1087.1 L1557.5,1092.5 L1551.4,1097.9 L1545.3,1103.4 L1539.3,1108.9 L1533.3,1114.5 L1527.4,1120.1 L1521.5,1125.7 L1515.6,1131.4 L1509.8,1137.1 L1504.0,1142.9 L1498.2,1148.7 L1492.5,1154.5 L1486.8,1160.4 L1481.1,1166.3 L1475.5,1172.2 L1469.9,1178.2 L1464.4,1184.3 L1458.9,1190.3 L1453.5,1196.4 L1448.2,1202.6 L1442.9,1208.8 L1437.7,1215.1 L1432.6,1221.4 L1427.6,1227.7 L1422.6,1234.2 L1417.8,1240.6 L1413.0,1247.2 L1408.4,1253.8 L1403.9,1260.5 L1399.5,1267.2 L1395.2,1274.0 L1391.1,1280.9 L1387.0,1287.9 L1383.2,1294.9 L1379.5,1302.0 L1375.9,1309.2 L1372.5,1316.5 L1369.2,1323.9 L1366.1,1331.3 L1363.2,1338.9 L1360.5,1346.5 L1358.0,1354.2" fill="none" stroke="#7a2814" stroke-width="1.1" stroke-opacity="0.85"/>
<path d="M2663.0,1269.0 L2657.3,1275.6 L2651.5,1282.2 L2645.6,1288.8 L2639.8,1295.4 L2634.0,1302.1 L2628.2,1308.8 L2622.5,1315.6 L2616.9,1322.5 L2611.4,1329.4 L2606.2,1336.5 L2601.1,1343.7 L2596.2,1351.0 L2591.6,1358.5 L2587.2,1366.1 L2583.2,1373.9 L2579.6,1381.9 L2576.3,1390.1 L2573.4,1398.4 L2570.9,1407.0" fill="none" stroke="#7a2814" stroke-width="1.1" stroke-opacity="0.85"/>
<path d="M156.0,585.0 L164.1,584.8 L172.1,585.6 L180.1,586.3 L188.1,587.1 L196.1,587.9 L204.1,588.7 L212.1,589.5 L220.1,590.4 L228.1,591.2 L236.1,592.1 L244.1,593.0 L252.1,593.9 L260.1,594.8 L268.1,595.8 L276.1,596.7 L284.1,597.7 L292.0,598.6 L300.0,599.6 L308.0,600.6 L316.0,601.7 L324.0,602.7 L331.9,603.7 L339.9,604.8 L347.9,605.9 L355.8,607.0 L363.8,608.1 L371.8,609.2 L379.7,610.3 L387.7,611.5 L395.6,612.6 L403.6,613.8 L411.5,615.0 L419.5,616.2 L427.4,617.4 L435.4,618.6 L443.3,619.8 L451.3,621.1 L459.2,622.3 L467.1,623.6 L475.1,624.9 L483.0,626.2 L490.9,627.5 L498.9,628.8 L506.8,630.1 L514.7,631.5 L522.7,632.8 L530.6,634.2 L538.5,635.6 L546.4,637.0 L554.3,638.4 L562.2,639.8 L570.2,641.2 L578.1,642.7 L586.0,644.1 L593.9,645.6 L601.8,647.0 L609.7,648.5 L617.6,650.0 L625.5,651.5 L633.4,653.0 L641.3,654.5 L649.2,656.0 L657.1,657.6 L665.0,659.1 L672.9,660.7 L680.8,662.3 L688.7,663.8 L696.5,665.4 L704.4,667.0 L712.3,668.6 L720.2,670.2 L728.1,671.9 L735.9,673.5 L743.8,675.1 L751.7,676.8 L759.6,678.4 L767.4,680.1 L775.3,681.8 L783.2,683.5 L791.0,685.2 L798.9,686.9 L806.8,688.6 L814.6,690.3 L822.5,692.0 L830.3,693.8 L838.2,695.5 L846.0,697.3 L853.9,699.0 L861.7,700.8 L869.6,702.5 L877.4,704.3 L885.3,706.1 L893.1,707.9 L901.0,709.7 L908.8,711.5 L916.6,713.3 L924.5,715.1 L932.3,717.0 L940.2,718.8 L948.0,720.6 L955.8,722.5 L963.7,724.3 L971.5,726.2 L979.3,728.1 L987.1,729.9 L995.0,731.8 L1002.8,733.7 L1010.6,735.6 L1018.4,737.5 L1026.2,739.3 L1034.1,741.3 L1041.9,743.2 L1049.7,745.1 L1057.5,747.0 L1065.3,748.9 L1073.1,750.8 L1080.9,752.8 L1088.7,754.7 L1096.6,756.6 L1104.4,758.6 L1112.2,760.5 L1120.0,762.5 L1127.8,764.5 L1135.6,766.4 L1143.4,768.4 L1151.2,770.4 L1159.0,772.4 L1166.7,774.3 L1174.5,776.3 L1182.3,778.3 L1190.1,780.3 L1197.9,782.3 L1205.7,784.3 L1213.5,786.4 L1221.3,788.4 L1229.0,790.4 L1236.8,792.4 L1244.6,794.5 L1252.4,796.5 L1260.2,798.6 L1267.9,800.6 L1275.7,802.7 L1283.5,804.7 L1291.2,806.8 L1299.0,808.9 L1306.8,811.0 L1314.5,813.0 L1322.3,815.1 L1330.1,817.2 L1337.8,819.3 L1345.6,821.4 L1353.3,823.6 L1361.1,825.7 L1368.9,827.8 L1376.6,829.9 L1384.4,832.1 L1392.1,834.2 L1399.9,836.3 L1407.6,838.5 L1415.4,840.6 L1423.1,842.8 L1430.8,845.0 L1438.6,847.1 L1446.3,849.3 L1454.1,851.5 L1461.8,853.7 L1469.5,855.9 L1477.3,858.1 L1485.0,860.3 L1492.7,862.5 L1500.5,864.7 L1508.2,866.9 L1515.9,869.2 L1523.6,871.4 L1531.3,873.6 L1539.1,875.9 L1546.8,878.1 L1554.5,880.4 L1562.2,882.7 L1569.9,884.9 L1577.6,887.2 L1585.4,889.5 L1593.1,891.8 L1600.8,894.1 L1608.5,896.4 L1616.2,898.7 L1623.9,901.0 L1631.6,903.3 L1639.3,905.6 L1647.0,907.9 L1654.7,910.3 L1662.4,912.6 L1670.1,915.0 L1677.8,917.3 L1685.4,919.7 L1693.1,922.0 L1700.8,924.4 L1708.5,926.8 L1716.2,929.2 L1723.9,931.5 L1731.5,933.9 L1739.2,936.3 L1746.9,938.7 L1754.6,941.2 L1762.2,943.6 L1769.9,946.0 L1777.6,948.4 L1785.2,950.9 L1792.9,953.3 L1800.6,955.8 L1808.2,958.2 L1815.9,960.7 L1823.5,963.1 L1831.2,965.6 L1838.9,968.1 L1846.5,970.6 L1854.2,973.1 L1861.8,975.6 L1869.4,978.1 L1877.1,980.6 L1884.7,983.1 L1892.4,985.6 L1900.0,988.2 L1907.6,990.7 L1915.3,993.2 L1922.9,995.8 L1930.5,998.3 L1938.2,1000.9 L1945.8,1003.5 L1953.4,1006.0 L1961.0,1008.6 L1968.6,1011.2 L1976.3,1013.8 L1983.9,1016.4 L1991.5,1019.0 L1999.1,1021.6 L2006.7,1024.2 L2014.3,1026.8 L2021.9,1029.5 L2029.5,1032.1 L2037.1,1034.7 L2044.7,1037.4 L2052.3,1040.0 L2059.9,1042.7 L2067.5,1045.3 L2075.1,1048.0 L2082.6,1050.7 L2090.2,1053.4 L2097.8,1056.1 L2105.4,1058.7 L2113.0,1061.4 L2120.5,1064.1 L2128.1,1066.9 L2135.7,1069.6 L2143.3,1072.3 L2150.8,1075.0 L2158.4,1077.7 L2166.0,1080.5 L2173.5,1083.2 L2181.1,1085.9 L2188.7,1088.7 L2196.2,1091.4 L2203.8,1094.2 L2211.3,1097.0 L2218.9,1099.7 L2226.4,1102.5 L2234.0,1105.3 L2241.5,1108.0 L2249.1,1110.8 L2256.6,1113.6 L2264.2,1116.4 L2271.7,1119.2 L2279.3,1122.0 L2286.8,1124.8 L2294.3,1127.6 L2301.9,1130.4 L2309.4,1133.2 L2316.9,1136.0 L2324.5,1138.8 L2332.0,1141.7 L2339.5,1144.5 L2347.1,1147.3 L2354.6,1150.1 L2362.1,1153.0 L2369.7,1155.8 L2377.2,1158.7 L2384.7,1161.5 L2392.2,1164.3 L2399.8,1167.2 L2407.3,1170.0 L2414.8,1172.9 L2422.3,1175.8 L2429.8,1178.6 L2437.4,1181.5 L2444.9,1184.3 L2452.4,1187.2 L2459.9,1190.1 L2467.4,1192.9 L2474.9,1195.8 L2482.4,1198.7 L2489.9,1201.6 L2497.5,1204.4 L2505.0,1207.3 L2512.5,1210.2 L2520.0,1213.1 L2527.5,1216.0 L2535.0,1218.9 L2542.5,1221.7 L2550.0,1224.6 L2557.5,1227.5 L2565.0,1230.4 L2572.5,1233.3 L2580.0,1236.2 L2587.5,1239.1 L2595.0,1242.0 L2602.5,1244.9 L2610.1,1247.8 L2617.6,1250.7 L2625.1,1253.6 L2632.6,1256.5 L2640.1,1259.3 L2647.6,1262.2 L2655.1,1265.0 L2662.6,1267.8 L2670.2,1270.6 L2677.7,1273.4 L2685.3,1276.1 L2692.8,1278.8 L2700.4,1281.5 L2708.0,1284.1 L2715.5,1286.7 L2723.1,1289.3 L2730.8,1291.8 L2738.4,1294.2 L2746.0,1296.6 L2753.7,1299.0 L2761.4,1301.2 L2769.1,1303.5 L2776.8,1305.6 L2784.5,1307.7 L2792.2,1309.7 L2800.0,1311.7 L2807.8,1313.6 L2815.6,1315.4 L2823.5,1317.1 L2825.0,1323.0 L2818.0,1330.0 L2811.0,1333.8 L2803.6,1337.1 L2796.1,1340.4 L2788.7,1343.5 L2781.2,1346.6 L2773.8,1349.7 L2766.3,1352.7 L2758.7,1355.6 L2751.2,1358.5 L2743.7,1361.3 L2736.1,1364.0 L2728.5,1366.7 L2720.9,1369.3 L2713.3,1371.9 L2705.7,1374.4 L2698.0,1376.8 L2690.3,1379.2 L2682.7,1381.5 L2675.0,1383.8 L2667.3,1386.0 L2659.6,1388.2 L2651.8,1390.3 L2644.1,1392.4 L2636.3,1394.4 L2628.6,1396.4 L2620.8,1398.3 L2613.0,1400.2 L2605.2,1402.1 L2597.4,1403.8 L2589.5,1405.6 L2581.7,1407.3 L2573.8,1408.9 L2566.0,1410.5 L2558.1,1412.1 L2550.3,1413.6 L2542.4,1415.1 L2534.5,1416.6 L2526.6,1418.0 L2518.7,1419.4 L2510.8,1420.7 L2502.8,1422.0 L2494.9,1423.3 L2487.0,1424.5 L2479.0,1425.7 L2471.1,1426.8 L2463.1,1428.0 L2455.2,1429.1 L2447.2,1430.1 L2439.2,1431.2 L2431.3,1432.2 L2423.3,1433.2 L2415.3,1434.1 L2407.3,1435.0 L2399.4,1435.9 L2391.4,1436.8 L2383.4,1437.6 L2375.4,1438.4 L2367.4,1439.2 L2359.4,1439.9 L2351.3,1440.7 L2343.3,1441.4 L2335.3,1442.0 L2327.3,1442.7 L2319.3,1443.3 L2311.3,1443.8 L2303.2,1444.4 L2295.2,1444.9 L2287.2,1445.4 L2279.1,1445.9 L2271.1,1446.3 L2263.1,1446.8 L2255.0,1447.1 L2247.0,1447.5 L2238.9,1447.9 L2230.9,1448.2 L2222.8,1448.5 L2214.8,1448.7 L2206.7,1449.0 L2198.7,1449.2 L2190.6,1449.4 L2182.6,1449.5 L2174.5,1449.7 L2166.4,1449.8 L2158.4,1449.9 L2150.3,1449.9 L2142.3,1450.0 L2134.2,1450.0 L2126.1,1450.0 L2118.1,1449.9 L2110.0,1449.9 L2101.9,1449.8 L2093.9,1449.7 L2085.8,1449.6 L2077.8,1449.4 L2069.7,1449.3 L2061.6,1449.1 L2053.6,1448.9 L2045.5,1448.6 L2037.4,1448.4 L2029.4,1448.1 L2021.3,1447.8 L2013.3,1447.4 L2005.2,1447.1 L1997.2,1446.7 L1989.1,1446.3 L1981.0,1445.9 L1973.0,1445.5 L1964.9,1445.1 L1956.9,1444.6 L1948.8,1444.1 L1940.8,1443.6 L1932.8,1443.0 L1924.7,1442.5 L1916.7,1441.9 L1908.6,1441.3 L1900.6,1440.7 L1892.6,1440.1 L1884.5,1439.4 L1876.5,1438.8 L1868.5,1438.1 L1860.5,1437.4 L1852.4,1436.6 L1844.4,1435.9 L1836.4,1435.1 L1828.4,1434.3 L1820.4,1433.5 L1812.4,1432.7 L1804.4,1431.9 L1796.4,1431.0 L1788.4,1430.2 L1780.4,1429.3 L1772.4,1428.4 L1764.4,1427.4 L1756.5,1426.5 L1748.5,1425.5 L1740.5,1424.6 L1732.5,1423.6 L1724.6,1422.5 L1716.6,1421.5 L1708.6,1420.5 L1700.7,1419.4 L1692.7,1418.3 L1684.8,1417.2 L1676.8,1416.1 L1668.9,1414.9 L1660.9,1413.8 L1653.0,1412.6 L1645.0,1411.4 L1637.1,1410.2 L1629.2,1409.0 L1621.2,1407.8 L1613.3,1406.5 L1605.4,1405.2 L1597.5,1403.9 L1589.6,1402.6 L1581.7,1401.3 L1573.8,1399.9 L1565.8,1398.6 L1557.9,1397.2 L1550.0,1395.8 L1542.2,1394.4 L1534.3,1393.0 L1526.4,1391.5 L1518.5,1390.1 L1510.6,1388.6 L1502.7,1387.1 L1494.9,1385.6 L1487.0,1384.0 L1479.1,1382.5 L1471.2,1380.9 L1463.4,1379.4 L1455.5,1377.8 L1447.7,1376.1 L1439.8,1374.5 L1432.0,1372.9 L1424.1,1371.2 L1416.3,1369.5 L1408.4,1367.8 L1400.6,1366.1 L1392.8,1364.4 L1384.9,1362.7 L1377.1,1360.9 L1369.3,1359.1 L1361.5,1357.4 L1353.7,1355.5 L1345.9,1353.7 L1338.0,1351.9 L1330.2,1350.0 L1322.4,1348.2 L1314.6,1346.3 L1306.8,1344.4 L1299.1,1342.5 L1291.3,1340.5 L1283.5,1338.6 L1275.7,1336.6 L1267.9,1334.7 L1260.2,1332.7 L1252.4,1330.7 L1244.6,1328.6 L1236.9,1326.6 L1229.1,1324.5 L1221.3,1322.5 L1213.6,1320.4 L1205.8,1318.3 L1198.1,1316.2 L1190.3,1314.1 L1182.6,1311.9 L1174.9,1309.8 L1167.1,1307.6 L1159.4,1305.4 L1151.7,1303.2 L1144.0,1301.0 L1136.2,1298.7 L1128.5,1296.5 L1120.8,1294.2 L1113.1,1291.9 L1105.4,1289.7 L1097.7,1287.3 L1090.0,1285.0 L1082.3,1282.7 L1074.6,1280.3 L1066.9,1278.0 L1059.3,1275.6 L1051.6,1273.2 L1043.9,1270.8 L1036.2,1268.4 L1028.6,1265.9 L1020.9,1263.5 L1013.2,1261.0 L1005.6,1258.6 L997.9,1256.1 L990.3,1253.6 L982.6,1251.0 L975.0,1248.5 L967.3,1246.0 L959.7,1243.4 L952.1,1240.8 L944.4,1238.2 L936.8,1235.6 L929.2,1233.0 L921.6,1230.4 L914.0,1227.7 L906.4,1225.1 L898.7,1222.4 L891.1,1219.7 L883.5,1217.0 L875.9,1214.3 L868.4,1211.6 L860.8,1208.8 L853.2,1206.1 L845.6,1203.3 L838.0,1200.6 L830.5,1197.8 L822.9,1195.0 L815.3,1192.1 L807.8,1189.3 L800.2,1186.5 L792.7,1183.6 L785.1,1180.7 L777.6,1177.8 L770.0,1174.9 L762.5,1172.0 L755.0,1169.0 L747.5,1166.1 L740.0,1163.1 L732.5,1160.1 L725.0,1157.1 L717.5,1154.1 L710.0,1151.0 L702.6,1148.0 L695.1,1144.9 L687.6,1141.8 L680.2,1138.7 L672.8,1135.6 L665.3,1132.4 L657.9,1129.2 L650.5,1126.0 L643.1,1122.8 L635.7,1119.6 L628.4,1116.3 L621.0,1113.1 L613.6,1109.8 L606.3,1106.5 L599.0,1103.1 L591.6,1099.8 L584.3,1096.4 L577.0,1093.0 L569.8,1089.6 L562.5,1086.1 L555.2,1082.7 L548.0,1079.2 L540.7,1075.6 L533.5,1072.1 L526.3,1068.5 L519.1,1065.0 L511.9,1061.3 L504.8,1057.7 L497.6,1054.1 L490.5,1050.4 L483.4,1046.7 L476.3,1042.9 L469.2,1039.2 L462.1,1035.4 L455.0,1031.6 L448.0,1027.7 L441.0,1023.9 L434.0,1020.0 L427.0,1016.1 L420.0,1012.1 L413.0,1008.1 L406.1,1004.1 L399.2,1000.1 L392.3,996.0 L385.4,991.9 L378.5,987.8 L371.7,983.7 L364.8,979.5 L358.0,975.3 L351.2,971.1 L344.4,966.8 L337.7,962.5 L331.0,958.2 L324.2,953.8 L317.6,949.4 L310.9,945.0 L304.2,940.6 L297.6,936.1 L291.0,931.6 L284.4,927.0 L277.8,922.5 L271.3,917.8 L264.8,913.2 L258.3,908.5 L251.8,903.8 L245.4,899.1 L238.9,894.3 L232.5,889.5 L226.1,884.6 L219.8,879.7 L213.4,874.8 L207.1,869.9 L200.8,864.9 L194.6,859.9 L188.4,854.8 L182.1,849.7 L176.0,844.6 L169.8,839.4 L163.7,834.2 L157.6,828.9 L151.5,823.7 L145.5,818.3 L139.5,813.0 L133.5,807.6 L127.6,802.1 L121.7,796.6 L115.8,791.1 L110.1,785.5 L104.3,779.8 L98.6,774.1 L93.0,768.4 L87.4,762.6 L81.9,756.7 L76.5,750.8 L71.1,744.8 L65.8,738.8 L60.6,732.7 L55.4,726.6 L50.4,720.4 L45.4,714.1 L40.4,707.8 L35.6,701.4 L30.9,694.9 L26.2,688.3 L21.6,681.7 L17.2,675.1 L18.5,671.0 L37.0,655.0 L93.0,617.0 L146.0,588.0 Z" fill="none" stroke="#8a2a10" stroke-width="0.8" stroke-opacity="0.5"/>
<path d="M2818,1315 L2825,1314 L2826,1323 L2819,1331 L2817,1326 Z" fill="#a01a10"/>
</svg>
<div id="status" class="a"></div>
<style>
.t{position:absolute;line-height:1;white-space:pre}
</style>
<!-- mac menubar -->
<svg class="a" style="left:43px;top:4px" width="26" height="32" viewBox="0 0 26 32"><path d="M21.5,17.2c0-3.6,2.9-5.3,3.1-5.4c-1.7-2.5-4.3-2.8-5.2-2.8c-2.2-0.2-4.3,1.3-5.4,1.3c-1.1,0-2.8-1.3-4.7-1.3C6.9,9.1,4.6,10.5,3.3,12.7c-2.6,4.5-0.7,11.2,1.9,14.9c1.2,1.800,2.700,3.900,4.600,3.800c1.800-0.100,2.500-1.200,4.700-1.200c2.200,0,2.800,1.200,4.700,1.200c2,0,3.200-1.800,4.400-3.600c1.400-2,2-4,2-4.100C25.600,23.700,21.500,22.200,21.500,17.2z M17.900,6.500c1-1.200,1.700-2.900,1.500-4.600c-1.400,0.100-3.200,1-4.200,2.200c-0.900,1-1.700,2.700-1.500,4.400C15.300,8.600,16.900,7.700,17.900,6.500z" fill="#22203e"/></svg>
<div class="t" style="left:109px;top:8px;font-size:29px;font-weight:bold;color:#22203e;letter-spacing:0.1px">Shape3D X</div>
<div class="t" style="left:300px;top:8px;font-size:28px;color:#22203e;letter-spacing:0.1px">Window</div>
<div class="t" style="left:2502px;top:9px;font-size:28px;color:#22203e;letter-spacing:0.3px">Mar. 15:24</div>
<!-- traffic lights -->
<div class="a" style="left:16px;top:56px;width:24px;height:24px;border-radius:50%;background:#fc5753;border:1px solid #df3d3a"></div>
<div class="a" style="left:56px;top:56px;width:24px;height:24px;border-radius:50%;background:#fdbc40;border:1px solid #de9f31"></div>
<div class="a" style="left:96px;top:56px;width:24px;height:24px;border-radius:50%;background:#33c748;border:1px solid #27aa35"></div>
<div class="t" style="left:429px;top:56px;font-size:27px;color:#565656;letter-spacing:0.22px">Shape3d X 9.0.9.9 Design Pro - licensed to dennery serge - C:\users\dennery\My Documents\Desktop\SEB\Seb envoi 7\JX1 BECRET 5.2  17 7,16 2 @ 24 10 17.s3dx</div>
<!-- app menu -->
<div class="t menu" style="left:13px;top:101px"><u>F</u>ile</div>
<div class="t menu" style="left:73px;top:101px">Board</div>
<div class="t menu" style="left:157px;top:101px">Mode</div>
<div class="t menu" style="left:236px;top:101px">View</div>
<div class="t menu" style="left:310px;top:101px">Drawing</div>
<div class="t menu" style="left:419px;top:101px">Elements</div>
<div class="t menu" style="left:536px;top:101px">Display</div>
<div class="t menu" style="left:635px;top:101px">Ghost</div>
<div class="t menu" style="left:718px;top:101px"><u>W</u>indows</div>
<div class="t menu" style="left:837px;top:101px">License</div>
<div class="t menu" style="left:939px;top:101px"><u>?</u></div>
<!-- toolbar 1 buttons -->
<div class="a btn" style="left:330px;top:133px;width:148px;height:59px"></div>
<div class="a btnsel" style="left:490px;top:133px;width:149px;height:60px"></div>
<div class="a btn" style="left:650px;top:133px;width:149px;height:60px"></div>
<div class="a btn" style="left:810px;top:133px;width:149px;height:60px"></div>
<div class="a btnsel" style="left:1010px;top:133px;width:61px;height:60px"></div>
<div class="t tt" style="left:375px;top:150px;font-size:26px">Design</div>
<div class="t tt" style="left:536px;top:150px;font-size:26px;color:#3a3a3a">3D view</div>
<div class="t tt" style="left:711px;top:150px;font-size:26px">Plan</div>
<div class="t tt" style="left:869px;top:150px;font-size:26px">CNC</div>
<div class="t tt" style="left:1024px;top:150px;font-size:26px">cm</div>
<div class="t tt" style="left:1082px;top:150px;font-size:26px">mm</div>
<div class="t tt" style="left:1142px;top:150px;font-size:26px">inch</div>
<div class="t tt" style="left:1210px;top:150px;font-size:26px">in/f</div>
<!-- mdi title -->
<div class="t" style="left:54px;top:215px;font-size:22px;color:#ffffff;letter-spacing:1.62px;-webkit-text-stroke:0.4px #ffffff">C:\users\dennery\My Documents\Desktop\SEB\Seb envoi 7\JX1 BECRET 5.2  17 7,16 2 @ 24 10 17.s3dx:2</div>
<!-- tooltip -->
<div class="a" style="left:1046px;top:324px;width:291px;height:37px;background:#fffbe4;border:2px solid #000"></div>
<div class="t" style="left:1053px;top:333px;font-size:22px;color:#2a2a2a;letter-spacing:0.55px">Flip the board upside down</div>
<!-- status -->
<div class="t" style="left:6px;top:1675px;font-size:22px;color:#333">Press F1 for help</div>
<!-- shared gradients -->
<svg width="0" height="0" style="position:absolute">
<defs>
<radialGradient id="gsph" cx="0.45" cy="0.3" r="0.7"><stop offset="0" stop-color="#c8f4ff"/><stop offset="0.35" stop-color="#22a8f8"/><stop offset="1" stop-color="#1040e8"/></radialGradient>
<linearGradient id="gbl" x1="0" y1="0" x2="0" y2="1"><stop offset="0" stop-color="#9ed6f6"/><stop offset="0.5" stop-color="#4a9ad8"/><stop offset="1" stop-color="#1e62a8"/></linearGradient>
<linearGradient id="gblv" x1="0" y1="0" x2="1" y2="0"><stop offset="0" stop-color="#bfe6fb"/><stop offset="0.5" stop-color="#5aa6e0"/><stop offset="1" stop-color="#1e5ea8"/></linearGradient>
<linearGradient id="gtri" x1="0" y1="0" x2="0" y2="1"><stop offset="0" stop-color="#2a6aa8"/><stop offset="1" stop-color="#0e3c6e"/></linearGradient>
<radialGradient id="gtex" cx="0.5" cy="0.45" r="0.55"><stop offset="0" stop-color="#a8d0ee"/><stop offset="0.7" stop-color="#5a9ad0"/><stop offset="1" stop-color="#1e5aa0"/></radialGradient>
<linearGradient id="grb" x1="0" y1="0" x2="0" y2="1"><stop offset="0" stop-color="#ff3a6a"/><stop offset="0.2" stop-color="#c050ff"/><stop offset="0.4" stop-color="#30c8ff"/><stop offset="0.55" stop-color="#d8f030"/><stop offset="0.75" stop-color="#30d8a0"/><stop offset="1" stop-color="#ff3050"/></linearGradient>
</defs></svg>
<!-- toolbar1 icons -->
<svg class="a" style="left:18px;top:134px" width="32" height="58" viewBox="0 0 32 58"><ellipse cx="15" cy="28" rx="12" ry="26" fill="none" stroke="#7a7a7a" stroke-width="1.5"/><circle cx="14" cy="16" r="8" fill="#f8c8d0" opacity="0.8"/><path d="M10,34 l0,-12 a2,2 0 0 1 4,0 l0,8 l2,-1 l2,1 l2,0 l3,3 l1,10 l-3,8 l-9,0 l-4,-9 z" fill="#fff" stroke="#333" stroke-width="1.6"/></svg>
<svg class="a" style="left:75px;top:142px" width="40" height="42" viewBox="0 0 40 42"><path d="M8,4 L22,2 L36,8 L36,30 L24,36 Z" fill="#f4eab0" stroke="#8a8a78" stroke-width="1.8"/><path d="M2,10 L10,6 L30,12 L34,34 L24,38 L6,30 Z" fill="#f6ee98" stroke="#7a7a68" stroke-width="2"/><path d="M30,12 L24,16 L24,38" fill="none" stroke="#9a9a80" stroke-width="1.5"/><path d="M34,30 L38,32 L36,36" fill="#7a7a6a"/></svg>
<svg class="a" style="left:143px;top:143px" width="34" height="42" viewBox="0 0 34 42"><path d="M2,2 L24,10 L24,40 L2,32 Z" fill="#999" stroke="#444" stroke-width="2"/><path d="M5,12 L21,18 L21,36 L5,30 Z" fill="url(#gfire)"/><linearGradient id="gfire" x1="0" y1="0" x2="0" y2="1"><stop offset="0" stop-color="#e04010"/><stop offset="0.5" stop-color="#ff9020"/><stop offset="1" stop-color="#fff0c0"/></linearGradient><path d="M24,36 L30,40 L26,42" fill="#333"/></svg>
<svg class="a" style="left:228px;top:143px" width="42" height="42" viewBox="0 0 42 42"><path d="M2,7 L38,7 M30,1 L30,24" stroke="#444" stroke-width="1.5"/><path d="M2,20 L38,20 M38,2 L38,20" stroke="#8888aa" stroke-width="1.5" stroke-dasharray="2,3"/><rect x="1" y="24" width="38" height="15" fill="#f2cc20"/><path d="M1,24 L39,24" stroke="#222" stroke-width="3" stroke-dasharray="3,3"/><text x="8" y="37" font-size="10" fill="#555" font-family="Liberation Sans">1</text><text x="27" y="37" font-size="10" fill="#555" font-family="Liberation Sans">0</text><rect x="3" y="38" width="38" height="3" fill="#bbb"/></svg>
<svg class="a" style="left:338px;top:140px" width="34" height="44" viewBox="0 0 34 44"><path d="M9,6 L25,39" stroke="#111" stroke-width="2"/><circle cx="9" cy="6" r="5" fill="#1a4ad8" stroke="#111" stroke-width="1"/><circle cx="17" cy="22" r="7" fill="#ee2010" stroke="#111" stroke-width="1.2"/><circle cx="25" cy="39" r="5" fill="#18d838" stroke="#111" stroke-width="1"/></svg>
<svg class="a" style="left:499px;top:145px" width="34" height="34"><circle cx="17" cy="17" r="16" fill="url(#gsph)"/></svg>
<svg class="a" style="left:663px;top:143px" width="36" height="40" viewBox="0 0 36 40"><path d="M2,2 L24,2 L34,11 L34,38 L2,38 Z" fill="#fff" stroke="#333" stroke-width="2"/><path d="M24,2 L24,11 L34,11" fill="#bfe0f0" stroke="#3a9ad0" stroke-width="1.5"/><path d="M5,9 L16,9 Q26,12 28,18 Q26,24 16,26 L5,26" fill="none" stroke="#c08070" stroke-width="1.2" stroke-dasharray="2,2"/><path d="M5,17 L30,17 M5,31 L30,31" stroke="#888" stroke-width="1.2" stroke-dasharray="2,2"/></svg>
<svg class="a" style="left:825px;top:141px" width="32" height="42" viewBox="0 0 32 42"><rect x="11" y="1.5" width="9" height="12" fill="#fff" stroke="#0e1a70" stroke-width="2"/><path d="M2,13.5 L30,13.5 L30,28 Q30,40 16,40 Q2,40 2,28 Z" fill="#aab" stroke="#0e1a70" stroke-width="2.2"/><path d="M4,16 L28,16 L28,28 Q28,38 16,38 Q4,38 4,28Z" fill="url(#gdot)"/><pattern id="gdot" width="3" height="3" patternUnits="userSpaceOnUse"><rect width="3" height="3" fill="#fff"/><rect width="1.5" height="1.5" fill="#333"/></pattern></svg>
<!-- mdi icon -->
<svg class="a" style="left:17px;top:207px" width="30" height="28"><circle cx="15" cy="14" r="13" fill="url(#gsph)"/></svg>
<!-- mdi buttons -->
<div class="a" style="left:2764px;top:210px;width:30px;height:27px;background:#f4f4f0;border:1px solid #fff;border-right:2px solid #666;border-bottom:2px solid #666"></div>
<div class="a" style="left:2773px;top:228px;width:12px;height:3px;background:#000"></div>
<div class="a" style="left:2797px;top:210px;width:30px;height:27px;background:#f4f4f0;border:1px solid #fff;border-right:2px solid #666;border-bottom:2px solid #666"></div>
<div class="a" style="left:2802px;top:217px;width:18px;height:15px;border:2px solid #888;border-top:3px solid #000"></div>
<div class="a" style="left:2832px;top:210px;width:31px;height:27px;background:#f4f4f0;border:1px solid #fff;border-right:2px solid #666;border-bottom:2px solid #666"></div>
<svg class="a" style="left:2839px;top:215px" width="17" height="17"><path d="M2,2 L15,15 M15,2 L2,15" stroke="#000" stroke-width="2"/></svg>
<!-- toolbar2 -->
<svg class="a" style="left:24px;top:262px" width="36" height="36" viewBox="0 0 36 36"><circle cx="14" cy="13" r="9.5" fill="none" stroke="#5e6e74" stroke-width="3.5"/><path d="M20,20 L31,31" stroke="#5e6e74" stroke-width="6" stroke-linecap="butt"/></svg>
<svg class="a" style="left:80px;top:255px" width="46" height="48" viewBox="0 0 46 48"><rect x="1.5" y="1.5" width="24" height="19" fill="none" stroke="#5e6e74" stroke-width="2"/><circle cx="25" cy="23" r="9.5" fill="none" stroke="#5e6e74" stroke-width="3.5"/><path d="M31,30 L42,42" stroke="#5e6e74" stroke-width="6"/></svg>
<svg class="a" style="left:158px;top:258px" width="48" height="46" viewBox="0 0 48 46"><path d="M2,38 C8,30 10,22 14,16 C18,10 22,8 26,6 M16,20 C20,10 26,6 32,4 M22,16 C26,8 32,5 38,5 M28,16 C32,10 36,8 42,10 C44,14 40,20 36,24 L34,30 C38,32 42,34 44,36 L22,44" fill="none" stroke="#555" stroke-width="2"/><path d="M26,10 L30,18 M32,8 L36,16 M38,8 L40,14" stroke="#333" stroke-width="3"/></svg>
<div class="a btnsel" style="left:214px;top:248px;width:62px;height:61px"></div>
<svg class="a" style="left:220px;top:254px" width="50" height="50" viewBox="0 0 50 50"><path d="M25,4 C14,10 12,30 28,44 C34,48 40,42 38,30 C36,20 30,12 25,4" fill="none" stroke="#555" stroke-width="4"/><path d="M6,22 C10,14 24,16 44,30" fill="none" stroke="#444" stroke-width="4"/><path d="M28,6 L36,18 L32,18 L34,40 L28,40 L26,18 L22,18Z" fill="#3a8ae8"/><path d="M6,24 L20,28 L20,24 L34,34 L18,40 L18,34 L8,30Z" fill="#3a8ae8"/></svg>
<svg class="a" style="left:300px;top:256px" width="46" height="46" viewBox="0 0 46 46"><path d="M4,4 L42,20 L40,44 L14,44 Z" fill="#f8f000"/><path d="M2,2 L10,16 L14,8Z" fill="#333"/><circle cx="28" cy="30" r="13" fill="url(#gsph)"/></svg>
<svg class="a" style="left:372px;top:264px" width="58" height="28"><ellipse cx="28" cy="14" rx="27" ry="11" fill="url(#gbl)"/></svg>
<svg class="a" style="left:434px;top:265px" width="58" height="28"><ellipse cx="28" cy="14" rx="27" ry="11.5" fill="url(#gbl)"/></svg>
<svg class="a" style="left:496px;top:270px" width="58" height="16" viewBox="0 0 58 16"><path d="M1,3 Q28,18 56,3 Q28,10 1,3Z" fill="url(#gbl)" stroke="#3a7ab8" stroke-width="1"/></svg>
<svg class="a" style="left:560px;top:266px" width="54" height="26" viewBox="0 0 54 26"><path d="M1,24 Q16,20 27,2 Q38,20 53,24 Z" fill="url(#gtri)"/></svg>
<svg class="a" style="left:622px;top:264px" width="54" height="28" viewBox="0 0 54 28"><path d="M1,26 L27,2 L53,26 Z" fill="url(#gtri)"/></svg>
<svg class="a" style="left:682px;top:264px" width="56" height="28"><ellipse cx="28" cy="14" rx="27" ry="8" transform="rotate(18 28 14)" fill="url(#gbl)"/></svg>
<svg class="a" style="left:745px;top:264px" width="56" height="28"><ellipse cx="28" cy="14" rx="27" ry="6" transform="rotate(-16 28 14)" fill="url(#gbl)"/></svg>
<svg class="a" style="left:807px;top:262px" width="56" height="34" viewBox="0 0 56 34"><path d="M2,30 L50,3 C56,10 54,26 44,30 C30,33 10,32 2,30Z" fill="url(#gbl)"/></svg>
<svg class="a" style="left:870px;top:262px" width="56" height="34" viewBox="0 0 56 34"><path d="M4,4 C16,0 40,10 52,28 C54,32 40,32 28,28 C12,24 0,16 4,4Z" fill="url(#gbl)"/></svg>
<svg class="a" style="left:944px;top:251px" width="26" height="56" viewBox="0 0 26 56"><path d="M13,1 C26,14 26,42 13,55 C0,42 0,14 13,1Z" fill="url(#gblv)"/></svg>
<div class="a" style="left:1006px;top:248px;width:61px;height:61px;border:2px solid #8a8a8a;background:#fff;border-radius:2px"></div>
<svg class="a" style="left:1010px;top:254px" width="54" height="52" viewBox="0 0 54 52"><path d="M8,30 A20,20 0 0 1 44,18" fill="none" stroke="#3a90d8" stroke-width="3"/><path d="M40,12 L48,22 L38,22Z" fill="#3a90d8"/><path d="M10,40 A18,14 0 0 0 46,40" fill="none" stroke="#3a90d8" stroke-width="3"/><path d="M4,36 L26,14 L50,36Z" fill="url(#gtri)"/></svg>
<svg class="a" style="left:1070px;top:252px" width="60" height="56" viewBox="0 0 60 56"><path d="M30,1 C43,14 43,42 30,55 C17,42 17,14 30,1Z" fill="url(#gblv)"/><path d="M50,18 C58,22 58,34 30,36 C4,36 0,24 12,20" fill="none" stroke="#ee1a10" stroke-width="4"/><path d="M46,14 L54,20 L46,24Z" fill="#ee1a10"/></svg>
<svg class="a" style="left:1132px;top:252px" width="60" height="58" viewBox="0 0 60 58"><path d="M32,1 C45,14 45,42 32,55 C19,42 19,14 32,1Z" fill="url(#gblv)"/><path d="M52,18 C60,22 60,34 32,36 C6,36 2,24 14,20" fill="none" stroke="#ee1a10" stroke-width="4"/><path d="M48,14 L56,20 L48,24Z" fill="#ee1a10"/><path d="M18,30 L26,38 L22,38 L22,56 L14,56 L14,38 L10,38Z" fill="#f6b020" stroke="#b07010" stroke-width="1"/></svg>
<svg class="a" style="left:1219px;top:259px" width="38" height="38" viewBox="0 0 38 38"><ellipse cx="19" cy="22" rx="17" ry="14" fill="none" stroke="#222" stroke-width="2"/><ellipse cx="19" cy="20" rx="13" ry="9" fill="none" stroke="#222" stroke-width="1.8"/><ellipse cx="19" cy="10" rx="8" ry="6" fill="none" stroke="#222" stroke-width="1.8"/><path d="M4,26 Q19,34 34,26" fill="none" stroke="#222" stroke-width="1.5"/></svg>
<div class="a btnsel" style="left:1271px;top:248px;width:61px;height:61px"></div>
<svg class="a" style="left:1282px;top:259px" width="38" height="38" viewBox="0 0 38 38"><ellipse cx="19" cy="22" rx="17" ry="14" fill="none" stroke="#222" stroke-width="2"/><ellipse cx="19" cy="20" rx="13" ry="9" fill="none" stroke="#ee2020" stroke-width="1.8"/><ellipse cx="19" cy="10" rx="8" ry="6" fill="none" stroke="#ee2020" stroke-width="1.8"/><path d="M4,26 Q19,34 34,26" fill="none" stroke="#ee2020" stroke-width="1.5"/></svg>
<svg class="a" style="left:1343px;top:259px" width="38" height="38" viewBox="0 0 38 38"><circle cx="19" cy="19" r="17" fill="none" stroke="#222" stroke-width="2.5"/><path d="M4,14 L34,14 L19,34Z M6,26 L32,26 L19,4Z M4,14 L19,4 L34,14 M8,28 Q19,36 30,28" fill="none" stroke="#222" stroke-width="1.8"/></svg>
<svg class="a" style="left:1421px;top:259px" width="40" height="40"><circle cx="20" cy="20" r="19.5" fill="url(#gsph)"/></svg>
<svg class="a" style="left:1483px;top:259px" width="40" height="40"><circle cx="20" cy="20" r="19" fill="url(#gtex)" stroke="#1e5aa0" stroke-width="2"/><path d="M10,14 C16,10 20,18 26,12 M12,26 C18,22 24,30 30,24" stroke="#d8ecf8" stroke-width="2" fill="none" opacity="0.6"/></svg>
<svg class="a" style="left:1561px;top:257px" width="42" height="42" viewBox="0 0 42 42"><defs><clipPath id="cs"><circle cx="21" cy="21" r="20"/></clipPath></defs><g clip-path="url(#cs)"><rect width="42" height="42" fill="#ddd"/><path d="M0,6 H42 M0,12 H42 M0,18 H42 M0,24 H42 M0,30 H42 M0,36 H42" stroke="#222" stroke-width="3.5"/></g></svg>
<div class="a btnsel" style="left:1613px;top:248px;width:62px;height:61px"></div>
<svg class="a" style="left:1623px;top:258px" width="42" height="42" viewBox="0 0 42 42"><defs><clipPath id="crb"><circle cx="21" cy="21" r="20"/></clipPath></defs><g clip-path="url(#crb)"><rect width="42" height="42" fill="url(#grb)"/><ellipse cx="21" cy="21" rx="8" ry="20" fill="#e8f020" opacity="0.7"/><ellipse cx="21" cy="21" rx="20" ry="7" fill="#c8f040" opacity="0.6"/></g></svg>
<div class="a btnsel" style="left:1691px;top:248px;width:62px;height:61px"></div>
<svg class="a" style="left:1697px;top:256px" width="50" height="46" viewBox="0 0 50 46"><path d="M18,4 L10,6 L8,16 L16,22 L16,32 L8,42" fill="none" stroke="#1a50e0" stroke-width="3.5" stroke-dasharray="5,2"/><path d="M25,2 L25,44" stroke="#333" stroke-width="1.5" stroke-dasharray="3,2"/><path d="M44,4 L36,12 L34,20 L42,26 L42,32 L34,42" fill="none" stroke="#1a50e0" stroke-width="3.5"/></svg>
<svg class="a" style="left:1781px;top:261px" width="34" height="34"><rect x="1" y="1" width="14" height="14" fill="#f01810"/><rect x="18" y="1" width="15" height="14" fill="#fcc800"/><rect x="1" y="18" width="14" height="15" fill="#90c040"/><rect x="18" y="18" width="15" height="15" fill="#60c0d8"/></svg>
<!-- mac menubar right icons -->
<svg class="a" style="left:1987px;top:5px" width="30" height="34" viewBox="0 0 30 34"><rect x="2" y="2" width="26" height="30" rx="5" fill="#1e7ad8"/><rect x="2" y="2" width="26" height="30" rx="5" fill="none" stroke="#0e4a98" stroke-width="1.5"/><circle cx="15" cy="17" r="9" fill="#fff"/><path d="M8,17 L12,13 L12,15.5 L18,15.5 L18,13 L22,17 L18,21 L18,18.5 L12,18.5 L12,21Z" fill="#1e7ad8"/></svg>
<svg class="a" style="left:2045px;top:5px" width="40" height="34" viewBox="0 0 40 34"><path d="M9,17 A13,13 0 1 1 13,26" fill="none" stroke="#22203e" stroke-width="2.6"/><path d="M3,14 L9,20 L15,14Z" fill="#22203e"/><path d="M22,9 L22,17 L28,21" fill="none" stroke="#22203e" stroke-width="2.4"/></svg>
<svg class="a" style="left:2122px;top:5px" width="26" height="34" viewBox="0 0 26 34"><path d="M5,9 L19,23 L12,30 L12,3 L19,10 L5,24" fill="none" stroke="#22203e" stroke-width="2.4"/></svg>
<svg class="a" style="left:2174px;top:7px" width="42" height="30" viewBox="0 0 42 30"><path d="M2,10 Q21,-6 40,10" fill="none" stroke="#22203e" stroke-width="3"/><path d="M8,16 Q21,4 34,16" fill="none" stroke="#22203e" stroke-width="3"/><path d="M14,21 Q21,14 28,21" fill="none" stroke="#22203e" stroke-width="3"/><path d="M17,25 L21,29 L25,25 Q21,22 17,25Z" fill="#22203e"/></svg>
<svg class="a" style="left:2238px;top:9px" width="40" height="28" viewBox="0 0 40 28"><path d="M10,22 L2,22 L2,2 L38,2 L38,22 L30,22" fill="none" stroke="#22203e" stroke-width="2.4"/><path d="M8,28 L20,13 L32,28Z" fill="#22203e"/></svg>
<svg class="a" style="left:2297px;top:5px" width="46" height="34" viewBox="0 0 46 34"><path d="M2,11 L9,11 L18,3 L18,31 L9,23 L2,23Z" fill="#22203e"/><path d="M24,10 Q28,17 24,24 M30,6 Q36,17 30,28 M36,2 Q44,17 36,32" fill="none" stroke="#22203e" stroke-width="2.4"/></svg>
<svg class="a" style="left:2364px;top:9px" width="50" height="28" viewBox="0 0 50 28"><rect x="2" y="2" width="40" height="24" rx="4" fill="none" stroke="#22203e" stroke-width="2.4"/><rect x="44" y="9" width="4" height="10" fill="#22203e"/><path d="M25,3 L14,16 L21,16 L18,26 L30,12 L23,12 Z" fill="#22203e" stroke="#dcd8f7" stroke-width="1.5"/></svg>
<svg class="a" style="left:2434px;top:5px" width="36" height="36" viewBox="0 0 36 36"><rect x="1" y="1" width="11" height="22" fill="#1a30a0"/><rect x="12" y="1" width="11" height="22" fill="#fff"/><rect x="23" y="1" width="11" height="22" fill="#e82030"/><text x="17.5" y="34" font-size="10" text-anchor="middle" fill="#22203e" font-family="Liberation Sans">123</text></svg>
<svg class="a" style="left:2678px;top:7px" width="32" height="32" viewBox="0 0 32 32"><circle cx="12" cy="12" r="9" fill="none" stroke="#22203e" stroke-width="2.8"/><path d="M18.5,18.5 L29,29" stroke="#22203e" stroke-width="3.5"/></svg>
<svg class="a" style="left:2740px;top:5px" width="36" height="36" viewBox="0 0 36 36"><defs><radialGradient id="gsiri" cx="0.5" cy="0.6" r="0.6"><stop offset="0" stop-color="#c080f0"/><stop offset="0.6" stop-color="#5a30b0"/><stop offset="1" stop-color="#1a1060"/></radialGradient></defs><circle cx="18" cy="18" r="17" fill="url(#gsiri)"/><path d="M4,20 Q12,12 18,20 Q24,28 32,18" fill="none" stroke="#9ad8ff" stroke-width="2" opacity="0.8"/></svg>
<svg class="a" style="left:2796px;top:9px" width="40" height="28" viewBox="0 0 40 28"><path d="M2,3 h4 M2,14 h4 M2,25 h4 M10,3 h28 M10,14 h28 M10,25 h28" stroke="#22203e" stroke-width="3.5"/></svg>
<!-- status panels -->
<div class="a" style="left:2068px;top:1669px;width:50px;height:31px;border-left:2px solid #a8a8a8;border-top:2px solid #a8a8a8"></div>
<div class="a" style="left:2124px;top:1669px;width:141px;height:31px;border-left:2px solid #a8a8a8;border-top:2px solid #a8a8a8"></div>
<div class="a" style="left:2270px;top:1669px;width:141px;height:31px;border-left:2px solid #a8a8a8;border-top:2px solid #a8a8a8"></div>
<div class="a" style="left:2417px;top:1669px;width:140px;height:31px;border-left:2px solid #a8a8a8;border-top:2px solid #a8a8a8"></div>
<div class="a" style="left:2563px;top:1669px;width:110px;height:31px;border-left:2px solid #a8a8a8;border-top:2px solid #a8a8a8"></div>
<div class="a" style="left:2678px;top:1669px;width:111px;height:31px;border-left:2px solid #a8a8a8;border-top:2px solid #a8a8a8"></div>
<div class="a" style="left:2794px;top:1669px;width:49px;height:31px;border-left:2px solid #a8a8a8;border-top:2px solid #a8a8a8"></div>
<div class="t" style="left:2076px;top:1675px;font-size:21px;color:#444">cm</div>
<div class="t" style="left:2132px;top:1675px;font-size:21px;color:#444">X: 116.3</div>
<div class="t" style="left:2278px;top:1675px;font-size:21px;color:#444">Y: 0.0</div>
<div class="t" style="left:2425px;top:1675px;font-size:21px;color:#444">Z: 7.0</div>
<svg class="a" style="left:2855px;top:1676px" width="22" height="22"><path d="M2,20 L20,2 M8,20 L20,8 M14,20 L20,14" stroke="#999" stroke-width="2"/></svg>
<!-- dock icons -->
<svg class="a" style="left:226px;top:1700px" width="2428" height="100" viewBox="226 1700 2428 100" font-family="Liberation Sans">
<defs>
<linearGradient id="dfindL" x1="0" y1="0" x2="0" y2="1"><stop offset="0" stop-color="#22c8fa"/><stop offset="1" stop-color="#1a70ea"/></linearGradient>
<linearGradient id="dfindR" x1="0" y1="0" x2="0" y2="1"><stop offset="0" stop-color="#f6f8fa"/><stop offset="1" stop-color="#dfe4ea"/></linearGradient>
<radialGradient id="dsiri" cx="0.5" cy="0.75" r="0.75"><stop offset="0" stop-color="#e8f8ff"/><stop offset="0.25" stop-color="#40d0f0"/><stop offset="0.45" stop-color="#c040b0"/><stop offset="0.7" stop-color="#3a2a70"/><stop offset="1" stop-color="#141030"/></radialGradient>
<radialGradient id="dsaf" cx="0.5" cy="0.35" r="0.65"><stop offset="0" stop-color="#4ad8fa"/><stop offset="1" stop-color="#1466d8"/></radialGradient>
<radialGradient id="dqt" cx="0.5" cy="0.4" r="0.6"><stop offset="0" stop-color="#40c8ff"/><stop offset="1" stop-color="#1050d0"/></radialGradient>
<radialGradient id="dgray" cx="0.5" cy="0.3" r="0.75"><stop offset="0" stop-color="#e0e0e0"/><stop offset="1" stop-color="#808080"/></radialGradient>
<linearGradient id="dgreen" x1="0" y1="0" x2="0" y2="1"><stop offset="0" stop-color="#60e878"/><stop offset="1" stop-color="#18c040"/></linearGradient>
<linearGradient id="dblue" x1="0" y1="0" x2="0" y2="1"><stop offset="0" stop-color="#6ad0ff"/><stop offset="1" stop-color="#1a7ae8"/></linearGradient>
<linearGradient id="dorange" x1="0" y1="0" x2="0" y2="1"><stop offset="0" stop-color="#ffa830"/><stop offset="1" stop-color="#f05a10"/></linearGradient>
<linearGradient id="dspg" x1="0" y1="0" x2="0" y2="1"><stop offset="0" stop-color="#c8c8c8"/><stop offset="1" stop-color="#7a7a7a"/></linearGradient>
<linearGradient id="dtv" x1="0" y1="0" x2="1" y2="1"><stop offset="0" stop-color="#30b0ff"/><stop offset="1" stop-color="#0a60c8"/></linearGradient>
<linearGradient id="dearth" x1="0" y1="0" x2="0" y2="1"><stop offset="0" stop-color="#e8e8e8"/><stop offset="1" stop-color="#8a8a8a"/></linearGradient>
<linearGradient id="dbook" x1="0" y1="0" x2="0" y2="1"><stop offset="0" stop-color="#2a6ad0"/><stop offset="1" stop-color="#0a2a80"/></linearGradient>
</defs>
<!-- Finder -->
<rect x="241" y="1716" width="64" height="62" rx="5" fill="url(#dfindR)"/>
<path d="M246,1716 L277,1716 C270,1730 266,1745 267,1756 L276,1756 C274,1764 274,1771 275,1778 L246,1778 Q241,1778 241,1773 L241,1721 Q241,1716 246,1716Z" fill="url(#dfindL)"/>
<path d="M251,1758 Q273,1775 297,1758" stroke="#1a2a4a" stroke-width="2.6" fill="none"/>
<path d="M259,1735 v8 M289,1735 v8" stroke="#1a2a4a" stroke-width="2.6"/>
<circle cx="272" cy="1791" r="3.5" fill="#0c1440"/>
<!-- Siri -->
<circle cx="355" cy="1748" r="34" fill="#d8d8e0"/><circle cx="355" cy="1748" r="31" fill="url(#dsiri)"/>
<path d="M326,1756 Q340,1742 355,1752 Q370,1764 384,1750" stroke="#e0f8ff" stroke-width="3" fill="none" opacity="0.8"/>
<!-- Safari -->
<circle cx="436" cy="1748" r="34" fill="#e8eaee"/><circle cx="436" cy="1748" r="30" fill="url(#dsaf)"/>
<circle cx="436" cy="1748" r="26" fill="none" stroke="#fff" stroke-width="3" stroke-dasharray="1,3" opacity="0.8"/>
<path d="M460,1724 L440,1752 L432,1744Z" fill="#f03028"/><path d="M412,1772 L432,1744 L440,1752Z" fill="#f4f4f4"/>
<circle cx="436" cy="1791" r="3.5" fill="#0c1440"/>
<!-- QuickTime -->
<circle cx="518" cy="1746" r="34" fill="#4a4a4a"/><circle cx="518" cy="1744" r="24" fill="url(#dqt)"/><path d="M528,1754 L550,1778" stroke="#3a3a3a" stroke-width="11" stroke-linecap="round"/>
<!-- Launchpad -->
<circle cx="600" cy="1748" r="34" fill="#e8e8e8"/><circle cx="600" cy="1748" r="31" fill="url(#dgray)"/><path d="M578,1772 L588,1752 Q598,1730 622,1720 Q618,1744 598,1762 Z M580,1760 L572,1762 L582,1748Z M596,1770 L594,1778 L606,1766Z" fill="#4a4a4a"/><circle cx="608" cy="1736" r="4" fill="#bbb"/>
<!-- Calendar -->
<g transform="rotate(-5 681 1748)"><rect x="649" y="1716" width="66" height="64" rx="2" fill="#fafafa" stroke="#aaa"/><rect x="649" y="1716" width="66" height="15" fill="#f04a3a"/><text x="682" y="1728" font-size="11" fill="#fff" text-anchor="middle">OCT.</text><text x="682" y="1771" font-size="36" fill="#222" text-anchor="middle">24</text></g>
<!-- Shape3D -->
<circle cx="763" cy="1748" r="35" fill="#c8ccd8"/><circle cx="763" cy="1748" r="32" fill="#eceef2"/><path d="M733,1762 Q742,1728 780,1726 Q796,1730 794,1744 Q778,1734 768,1746 Q762,1760 778,1772 Q750,1780 733,1762Z" fill="#4a6ec8"/>
<circle cx="763" cy="1791" r="3.5" fill="#0c1440"/>
<!-- Calculator -->
<g transform="rotate(-8 847 1748)"><rect x="817" y="1715" width="60" height="66" rx="3" fill="#c8c8c8"/><rect x="817" y="1715" width="60" height="15" rx="2" fill="#2a2e32"/><text x="860" y="1727" font-size="9" fill="#ccc" text-anchor="middle">3.141593</text><rect x="863" y="1731" width="14" height="50" fill="#f08a28"/><path d="M817,1742 h46 M817,1754 h46 M817,1766 h46 M829,1731 v50 M841,1731 v50 M853,1731 v50" stroke="#999" stroke-width="1"/></g>
<!-- Contacts -->
<g transform="rotate(-6 929 1748)"><rect x="899" y="1714" width="58" height="68" rx="3" fill="#b8864a"/><rect x="957" y="1722" width="4" height="12" fill="#f0d060"/><rect x="957" y="1736" width="4" height="12" fill="#60c8e0"/><rect x="957" y="1750" width="4" height="12" fill="#70d080"/><circle cx="928" cy="1746" r="15" fill="none" stroke="#9a6a34" stroke-width="2"/><circle cx="928" cy="1742" r="5" fill="#9a6a34"/><path d="M918,1756 Q928,1744 938,1756" fill="#9a6a34"/></g>
<!-- Messages -->
<ellipse cx="1010" cy="1742" rx="33" ry="26" fill="url(#dblue)"/><path d="M985,1758 L978,1775 L996,1764Z" fill="#3aa0f0"/><ellipse cx="1020" cy="1760" rx="22" ry="16" fill="#fff"/><circle cx="1010" cy="1760" r="3" fill="#1a70d8"/><circle cx="1020" cy="1760" r="3" fill="#1a70d8"/><circle cx="1030" cy="1760" r="3" fill="#1a70d8"/>
<!-- FaceTime -->
<rect x="1058" y="1717" width="62" height="58" rx="9" fill="url(#dgreen)"/><rect x="1068" y="1733" width="30" height="24" rx="3" fill="#f0f0f0"/><path d="M1098,1740 L1108,1733 L1108,1757 L1098,1750Z" fill="#f0f0f0"/><circle cx="1106" cy="1761" r="17" fill="#f4f4f4"/><path d="M1099,1753 q-1,14 14,16" stroke="#20c040" stroke-width="5" fill="none"/>
<!-- Photo Booth -->
<rect x="1150" y="1716" width="62" height="44" fill="#fff"/><rect x="1154" y="1720" width="26" height="36" fill="#a81818"/><rect x="1184" y="1720" width="24" height="36" fill="#a81818"/><g transform="rotate(-6 1172 1752)"><rect x="1142" y="1728" width="58" height="48" fill="#fff"/><rect x="1145" y="1731" width="24" height="20" fill="#b02020"/><rect x="1173" y="1731" width="24" height="20" fill="#b02020"/><rect x="1145" y="1754" width="24" height="20" fill="#b02020"/><circle cx="1157" cy="1741" r="6" fill="#2a1a1a"/><circle cx="1185" cy="1741" r="6" fill="#2a1a1a"/><circle cx="1157" cy="1764" r="6" fill="#2a1a1a"/></g><circle cx="1196" cy="1762" r="16" fill="#1a1a1a"/><circle cx="1196" cy="1762" r="8" fill="#3a3a6a"/>
<!-- Pages -->
<g transform="rotate(-8 1257 1748)"><rect x="1230" y="1716" width="54" height="64" fill="#fff" stroke="#d0d0d0"/><rect x="1230" y="1716" width="54" height="10" fill="#f0962a"/><rect x="1236" y="1732" width="20" height="18" fill="#4a90d8"/><path d="M1240,1737 L1246,1745 L1252,1737" fill="#f0a020"/><path d="M1260,1734 h18 M1260,1740 h18 M1236,1756 h42 M1236,1762 h42 M1236,1768 h42" stroke="#999" stroke-width="1.2"/></g><path d="M1290,1715 L1272,1780" stroke="#f0a028" stroke-width="6"/><path d="M1272,1780 L1270,1786" stroke="#444" stroke-width="3"/>
<!-- Motion -->
<path d="M1338,1714 L1348,1738 L1376,1738 L1354,1754 L1364,1782 L1338,1766 L1312,1782 L1322,1754 L1300,1738 L1328,1738Z" fill="#d0d0dc" stroke="#5a5090" stroke-width="2"/><circle cx="1338" cy="1752" r="20" fill="#b8b0d8" opacity="0.9"/><circle cx="1338" cy="1752" r="17" fill="none" stroke="#f4f4f8" stroke-width="5"/><path d="M1326,1740 L1350,1764" stroke="#f4f4f8" stroke-width="5"/>
<!-- Photos -->
<circle cx="1421" cy="1748" r="34" fill="#ececf0"/>
<g transform="translate(1421 1747)">
<ellipse rx="7" ry="15" cy="-13" fill="#f4a028" opacity="0.9"/>
<ellipse rx="7" ry="15" cy="-13" transform="rotate(45)" fill="#f4e040" opacity="0.9"/>
<ellipse rx="7" ry="15" cy="-13" transform="rotate(90)" fill="#9ad040" opacity="0.9"/>
<ellipse rx="7" ry="15" cy="-13" transform="rotate(135)" fill="#50c878" opacity="0.9"/>
<ellipse rx="7" ry="15" cy="-13" transform="rotate(180)" fill="#60b8e8" opacity="0.9"/>
<ellipse rx="7" ry="15" cy="-13" transform="rotate(225)" fill="#8a80d8" opacity="0.9"/>
<ellipse rx="7" ry="15" cy="-13" transform="rotate(270)" fill="#d070c0" opacity="0.9"/>
<ellipse rx="7" ry="15" cy="-13" transform="rotate(315)" fill="#f04848" opacity="0.9"/>
</g>
<!-- Keynote -->
<path d="M1476,1714 L1530,1714 L1534,1741 L1472,1741Z" fill="#3a90e8"/><rect x="1482" y="1718" width="42" height="19" fill="#f4f4f4"/><circle cx="1494" cy="1728" r="6" fill="#50c0a0"/><path d="M1503,1741 L1503,1776" stroke="#d8dce0" stroke-width="5"/><ellipse cx="1503" cy="1778" rx="14" ry="4" fill="#d8dce0"/>
<!-- Spotify -->
<circle cx="1586" cy="1747" r="34" fill="#2ed35a"/><path d="M1563,1736 Q1588,1728 1610,1740 M1566,1749 Q1586,1743 1606,1752 M1569,1761 Q1586,1757 1601,1764" stroke="#1a1a1a" stroke-width="6" fill="none" stroke-linecap="round"/>
<!-- Preview -->
<rect x="1642" y="1716" width="56" height="44" fill="#fff"/><rect x="1645" y="1719" width="50" height="38" fill="#b09a70"/><g transform="rotate(-8 1660 1748)"><rect x="1632" y="1724" width="60" height="50" fill="#fff"/><rect x="1635" y="1727" width="54" height="26" fill="#a8c0f0"/><rect x="1635" y="1753" width="54" height="18" fill="#4a6a9a"/></g><circle cx="1691" cy="1760" r="14" fill="#8a8a8a" stroke="#bbb" stroke-width="3"/><rect x="1680" y="1764" width="22" height="14" rx="4" fill="#6a6a6a"/>
<!-- System Prefs -->
<rect x="1715" y="1716" width="67" height="62" rx="4" fill="url(#dspg)"/><circle cx="1748" cy="1747" r="26" fill="#3a3a3a"/><circle cx="1748" cy="1747" r="22" fill="none" stroke="#9a9a9a" stroke-width="5" stroke-dasharray="4,3"/><circle cx="1748" cy="1747" r="15" fill="#5a5a5a"/><path d="M1748,1747 L1748,1732 M1748,1747 L1735,1755 M1748,1747 L1761,1755" stroke="#aaa" stroke-width="4"/>
<!-- iTunes -->
<circle cx="1831" cy="1747" r="34" fill="#f4f4f8"/><circle cx="1831" cy="1747" r="31" fill="none" stroke="#c060e0" stroke-width="4"/><path d="M1822,1766 L1822,1730 L1846,1725 L1846,1760" stroke="#f04870" stroke-width="5" fill="none"/><circle cx="1817" cy="1766" r="6" fill="#8a60f0"/><circle cx="1841" cy="1761" r="6" fill="#4a90f0"/>
<!-- iBooks -->
<circle cx="1913" cy="1747" r="34" fill="#f4f0ec"/><circle cx="1913" cy="1747" r="31" fill="url(#dorange)"/><path d="M1891,1734 Q1902,1727 1912,1733 Q1922,1727 1935,1734 L1935,1764 Q1922,1758 1912,1764 Q1902,1758 1891,1764Z" fill="#f8f8f8"/>
<!-- App Store -->
<circle cx="1996" cy="1748" r="35" fill="#e8eaf0"/><circle cx="1996" cy="1748" r="31" fill="url(#dblue)"/><path d="M1982,1770 L1998,1732 M2010,1770 L1994,1742 M1976,1758 L2016,1758" stroke="#fff" stroke-width="4.5" fill="none"/><circle cx="2021" cy="1724" r="11" fill="#f03a30"/><text x="2021" y="1729" font-size="14" fill="#fff" text-anchor="middle">1</text>
<!-- SketchUp -->
<g transform="rotate(-12 2075 1748)"><path d="M2046,1726 L2080,1716 L2106,1730 L2106,1772 L2072,1782 L2046,1768Z" fill="#e0282a"/><path d="M2060,1742 L2090,1734 L2090,1750 L2072,1754 L2072,1768" stroke="#fff" stroke-width="5" fill="none"/></g>
<!-- Google Earth -->
<circle cx="2158" cy="1746" r="35" fill="url(#dearth)"/><path d="M2124,1734 Q2150,1720 2190,1732 M2124,1752 Q2158,1736 2192,1756 M2134,1768 Q2160,1756 2186,1772" stroke="#9aa0a8" stroke-width="7" fill="none"/><rect x="2138" y="1766" width="40" height="22" rx="3" fill="#2a2a2a"/><text x="2158" y="1784" font-size="18" fill="#fff" text-anchor="middle">Pro</text>
<!-- Network -->
<circle cx="2226" cy="1738" r="25" fill="#2a90f0"/><path d="M2202,1738 Q2226,1720 2250,1738 M2226,1713 Q2210,1738 2226,1763 M2206,1728 Q2230,1744 2248,1726" stroke="#a8d8ff" stroke-width="2" fill="none"/><path d="M2236,1754 L2270,1754 L2270,1776 L2236,1776Z" fill="#70d870" stroke="#aaa" stroke-width="2"/><rect x="2228" y="1777" width="50" height="4" fill="#bbb"/><path d="M2250,1718 L2262,1718 L2262,1734 L2270,1734 L2256,1748 L2242,1734 L2250,1734Z" fill="#9a7ae0"/>
<!-- blue app -->
<rect x="2288" y="1715" width="72" height="68" rx="6" fill="url(#dbook)"/><path d="M2300,1730 L2320,1722 L2320,1760 L2300,1766Z M2322,1722 L2344,1730 L2344,1746" fill="none" stroke="#fff" stroke-width="4"/><rect x="2318" y="1744" width="32" height="20" fill="none" stroke="#fff" stroke-width="4"/><path d="M2334,1764 L2334,1772 M2324,1772 h20" stroke="#fff" stroke-width="3"/>
<!-- TeamViewer -->
<g transform="rotate(-6 2404 1748)"><rect x="2372" y="1715" width="64" height="66" rx="8" fill="url(#dtv)"/><circle cx="2404" cy="1748" r="23" fill="#f4f8fc"/><path d="M2386,1748 L2396,1739 L2396,1744 L2412,1744 L2412,1739 L2422,1748 L2412,1757 L2412,1752 L2396,1752 L2396,1757Z" fill="#1a80e0"/></g>
<circle cx="2403" cy="1791" r="3.5" fill="#0c1440"/>
<!-- separator -->
<path d="M2464,1714 L2464,1785" stroke="#2a2a88" stroke-width="2"/>
<!-- doc -->
<path d="M2506,1719 L2538,1719 L2550,1733 L2506,1733Z" fill="#e8e8e8" stroke="#bbb"/><rect x="2492" y="1730" width="66" height="50" fill="#f4f4f0" stroke="#ccc" stroke-width="1.5"/><path d="M2498,1740 h54 M2498,1748 h54 M2498,1756 h54 M2498,1764 h54 M2498,1772 h54 M2520,1734 v42" stroke="#c8c8c8" stroke-width="1.5"/>
<!-- trash -->
<path d="M2578,1724 L2634,1724 L2628,1780 Q2606,1786 2584,1780Z" fill="#e4e8ec" stroke="#c0c4cc" stroke-width="1.5"/><ellipse cx="2606" cy="1724" rx="28" ry="5" fill="#d0d4da"/><path d="M2590,1718 L2602,1710 L2612,1720 L2622,1712 L2630,1722Z" fill="#6a5a50"/><circle cx="2600" cy="1716" r="4" fill="#4aa8a0"/>
</svg>

</body></html>
